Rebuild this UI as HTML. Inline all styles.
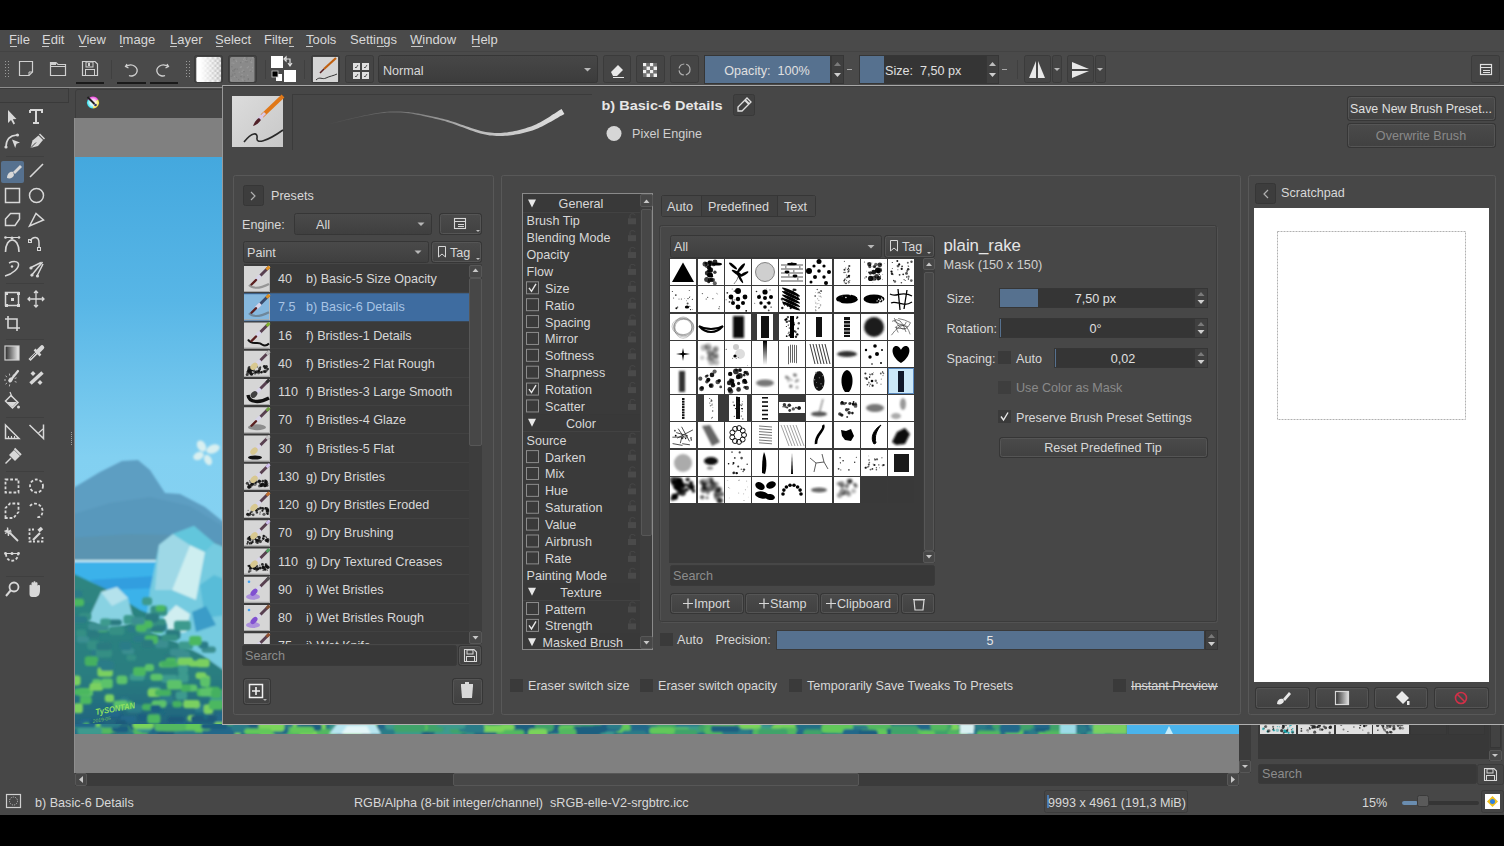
<!DOCTYPE html><html><head><meta charset="utf-8"><style>html,body{margin:0;padding:0;background:#000;overflow:hidden}svg{display:block}text{font-family:"Liberation Sans",sans-serif;white-space:pre}</style></head><body><svg width="1504" height="846" viewBox="0 0 1504 846" font-family="Liberation Sans, sans-serif"><rect x="0" y="0" width="1504" height="846" fill="#000"/><rect x="0" y="30" width="1504" height="785" fill="#474747"/><rect x="0" y="30" width="1504" height="21" fill="#4a4a4a"/><rect x="0" y="51" width="1504" height="1" fill="#434343"/><text x="9" y="44" font-size="13.01" fill="#d8d8d8">File</text><text x="42" y="44" font-size="13.01" fill="#d8d8d8">Edit</text><text x="78" y="44" font-size="13.01" fill="#d8d8d8">View</text><text x="119" y="44" font-size="13.01" fill="#d8d8d8">Image</text><text x="170" y="44" font-size="13.01" fill="#d8d8d8">Layer</text><text x="215" y="44" font-size="13.01" fill="#d8d8d8">Select</text><text x="264" y="44" font-size="13.01" fill="#d8d8d8">Filter</text><text x="306" y="44" font-size="13.01" fill="#d8d8d8">Tools</text><text x="350" y="44" font-size="13.01" fill="#d8d8d8">Settings</text><text x="410" y="44" font-size="13.01" fill="#d8d8d8">Window</text><text x="471" y="44" font-size="13.01" fill="#d8d8d8">Help</text><rect x="10" y="46" width="7" height="1" fill="#c8c8c8"/><rect x="42" y="46" width="7" height="1" fill="#c8c8c8"/><rect x="79" y="46" width="8" height="1" fill="#c8c8c8"/><rect x="120" y="46" width="3" height="1" fill="#c8c8c8"/><rect x="170" y="46" width="7" height="1" fill="#c8c8c8"/><rect x="216" y="46" width="7" height="1" fill="#c8c8c8"/><rect x="289" y="46" width="5" height="1" fill="#c8c8c8"/><rect x="306" y="46" width="7" height="1" fill="#c8c8c8"/><rect x="377" y="46" width="7" height="1" fill="#c8c8c8"/><rect x="411" y="46" width="12" height="1" fill="#c8c8c8"/><rect x="472" y="46" width="8" height="1" fill="#c8c8c8"/><rect x="0" y="52" width="1504" height="35" fill="#4a4a4a"/><rect x="0" y="87" width="222" height="1" fill="#8c8c8c"/><rect x="5" y="61" width="1" height="1" fill="#9a9a9a"/><rect x="8" y="61" width="1" height="1" fill="#9a9a9a"/><rect x="5" y="64" width="1" height="1" fill="#9a9a9a"/><rect x="8" y="64" width="1" height="1" fill="#9a9a9a"/><rect x="5" y="67" width="1" height="1" fill="#9a9a9a"/><rect x="8" y="67" width="1" height="1" fill="#9a9a9a"/><rect x="5" y="70" width="1" height="1" fill="#9a9a9a"/><rect x="8" y="70" width="1" height="1" fill="#9a9a9a"/><rect x="5" y="73" width="1" height="1" fill="#9a9a9a"/><rect x="8" y="73" width="1" height="1" fill="#9a9a9a"/><rect x="5" y="76" width="1" height="1" fill="#9a9a9a"/><rect x="8" y="76" width="1" height="1" fill="#9a9a9a"/><path d="M19.5 61.5 H32.5 V72 L29 75.5 H19.5 Z" fill="none" stroke="#d0d0d0" stroke-width="1.2"/><path d="M29 75.5 V72 H32.5" fill="none" stroke="#d0d0d0" stroke-width="1"/><path d="M50.5 62.5 H56 L58 64.5 H65.5 V75.5 H50.5 Z" fill="none" stroke="#d0d0d0" stroke-width="1.2"/><rect x="51" y="62" width="5" height="3" fill="#d0d0d0"/><rect x="51" y="66" width="15" height="1" fill="#d0d0d0"/><path d="M82.5 61.5 H95 L97.5 64 V75.5 H82.5 Z" fill="none" stroke="#d0d0d0" stroke-width="1.2"/><rect x="86" y="62" width="7" height="5" fill="none" stroke="#d0d0d0" stroke-width="1"/><rect x="85.5" y="69.5" width="9" height="6" fill="none" stroke="#d0d0d0" stroke-width="1"/><rect x="88" y="63" width="2" height="3" fill="#d0d0d0"/><rect x="76" y="82" width="28" height="2" fill="#1a1a1a"/><rect x="111" y="60" width="1" height="19" fill="#404040"/><path d="M127 64 L125.5 66.5 L128.5 68 M125.5 66.5 C133 62 139 68 136.5 73 C135 76 131 76.5 129 75.5" fill="none" stroke="#d0d0d0" stroke-width="1.3"/><path d="M167 64 L168.5 66.5 L165.5 68 M168.5 66.5 C161 62 155 68 157.5 73 C159 76 163 76.5 165 75.5" fill="none" stroke="#d0d0d0" stroke-width="1.3"/><rect x="117" y="82" width="29" height="2" fill="#1a1a1a"/><rect x="150" y="82" width="28" height="2" fill="#1a1a1a"/><rect x="186" y="61" width="1" height="1" fill="#9a9a9a"/><rect x="189" y="61" width="1" height="1" fill="#9a9a9a"/><rect x="186" y="64" width="1" height="1" fill="#9a9a9a"/><rect x="189" y="64" width="1" height="1" fill="#9a9a9a"/><rect x="186" y="67" width="1" height="1" fill="#9a9a9a"/><rect x="189" y="67" width="1" height="1" fill="#9a9a9a"/><rect x="186" y="70" width="1" height="1" fill="#9a9a9a"/><rect x="189" y="70" width="1" height="1" fill="#9a9a9a"/><rect x="186" y="73" width="1" height="1" fill="#9a9a9a"/><rect x="189" y="73" width="1" height="1" fill="#9a9a9a"/><rect x="186" y="76" width="1" height="1" fill="#9a9a9a"/><rect x="189" y="76" width="1" height="1" fill="#9a9a9a"/><rect x="194.5" y="55.5" width="28" height="27" fill="#454545" stroke="#3b3b3b" stroke-width="1" rx="2"/><defs><pattern id="chk" x="196.5" y="57" width="5" height="5" patternUnits="userSpaceOnUse"><rect width="5" height="5" fill="#e8e8e8"/><rect width="2.5" height="2.5" fill="#bdbdbd"/><rect x="2.5" y="2.5" width="2.5" height="2.5" fill="#bdbdbd"/></pattern><linearGradient id="gw" x1="0" x2="1"><stop offset="0" stop-color="#ffffff"/><stop offset="0.15" stop-color="#ffffff"/><stop offset="1" stop-color="#ffffff" stop-opacity="0"/></linearGradient></defs><rect x="196.5" y="57" width="24.5" height="25" fill="url(#chk)" rx="1.5"/><rect x="196.5" y="57" width="24.5" height="25" fill="url(#gw)" rx="1.5"/><rect x="228.5" y="55.5" width="28" height="27" fill="#454545" stroke="#3b3b3b" stroke-width="1" rx="2"/><rect x="230" y="57" width="24.5" height="25" fill="#8a8a8a" rx="1.5"/><rect x="240.6" y="66.0" width="1.2" height="1.2" fill="#9a9a9a"/><rect x="234.3" y="73.2" width="1.2" height="1.2" fill="#7a7a7a"/><rect x="241.6" y="78.6" width="1.2" height="1.2" fill="#9a9a9a"/><rect x="237.7" y="79.5" width="1.2" height="1.2" fill="#9a9a9a"/><rect x="246.7" y="61.1" width="1.2" height="1.2" fill="#7a7a7a"/><rect x="251.9" y="67.1" width="1.2" height="1.2" fill="#9a9a9a"/><rect x="235.5" y="59.7" width="1.2" height="1.2" fill="#9a9a9a"/><rect x="247.8" y="66.2" width="1.2" height="1.2" fill="#9a9a9a"/><rect x="251.1" y="61.9" width="1.2" height="1.2" fill="#9a9a9a"/><rect x="246.7" y="67.1" width="1.2" height="1.2" fill="#9a9a9a"/><rect x="247.8" y="78.9" width="1.2" height="1.2" fill="#7a7a7a"/><rect x="236.5" y="76.4" width="1.2" height="1.2" fill="#9a9a9a"/><rect x="246.3" y="57.1" width="1.2" height="1.2" fill="#7a7a7a"/><rect x="231.3" y="66.1" width="1.2" height="1.2" fill="#7a7a7a"/><rect x="233.2" y="62.7" width="1.2" height="1.2" fill="#9a9a9a"/><rect x="252.2" y="57.1" width="1.2" height="1.2" fill="#9a9a9a"/><rect x="250.6" y="61.9" width="1.2" height="1.2" fill="#9a9a9a"/><rect x="250.5" y="60.2" width="1.2" height="1.2" fill="#9a9a9a"/><rect x="241.5" y="70.8" width="1.2" height="1.2" fill="#9a9a9a"/><rect x="239.7" y="66.6" width="1.2" height="1.2" fill="#9a9a9a"/><rect x="246.1" y="60.5" width="1.2" height="1.2" fill="#9a9a9a"/><rect x="231.2" y="70.3" width="1.2" height="1.2" fill="#9a9a9a"/><rect x="247.1" y="74.7" width="1.2" height="1.2" fill="#9a9a9a"/><rect x="232.8" y="73.9" width="1.2" height="1.2" fill="#9a9a9a"/><rect x="233.7" y="69.1" width="1.2" height="1.2" fill="#7a7a7a"/><rect x="249.5" y="69.5" width="1.2" height="1.2" fill="#9a9a9a"/><rect x="249.9" y="59.6" width="1.2" height="1.2" fill="#7a7a7a"/><rect x="240.4" y="66.7" width="1.2" height="1.2" fill="#9a9a9a"/><rect x="238.7" y="71.6" width="1.2" height="1.2" fill="#9a9a9a"/><rect x="240.0" y="62.1" width="1.2" height="1.2" fill="#7a7a7a"/><rect x="236.2" y="76.6" width="1.2" height="1.2" fill="#7a7a7a"/><rect x="244.5" y="59.5" width="1.2" height="1.2" fill="#9a9a9a"/><rect x="230.6" y="75.7" width="1.2" height="1.2" fill="#7a7a7a"/><rect x="241.4" y="74.0" width="1.2" height="1.2" fill="#9a9a9a"/><rect x="243.0" y="58.6" width="1.2" height="1.2" fill="#9a9a9a"/><rect x="232.2" y="75.3" width="1.2" height="1.2" fill="#7a7a7a"/><rect x="252.0" y="70.5" width="1.2" height="1.2" fill="#9a9a9a"/><rect x="245.4" y="61.1" width="1.2" height="1.2" fill="#7a7a7a"/><rect x="230.7" y="79.5" width="1.2" height="1.2" fill="#9a9a9a"/><rect x="236.0" y="60.9" width="1.2" height="1.2" fill="#9a9a9a"/><rect x="244.0" y="57.3" width="1.2" height="1.2" fill="#9a9a9a"/><rect x="240.4" y="75.9" width="1.2" height="1.2" fill="#7a7a7a"/><rect x="244.1" y="80.2" width="1.2" height="1.2" fill="#7a7a7a"/><rect x="236.6" y="68.5" width="1.2" height="1.2" fill="#7a7a7a"/><rect x="233.2" y="59.1" width="1.2" height="1.2" fill="#7a7a7a"/><rect x="246.0" y="58.6" width="1.2" height="1.2" fill="#7a7a7a"/><rect x="233.3" y="70.5" width="1.2" height="1.2" fill="#7a7a7a"/><rect x="243.5" y="76.3" width="1.2" height="1.2" fill="#7a7a7a"/><rect x="247.7" y="78.1" width="1.2" height="1.2" fill="#7a7a7a"/><rect x="238.0" y="79.2" width="1.2" height="1.2" fill="#7a7a7a"/><rect x="242.2" y="61.2" width="1.2" height="1.2" fill="#9a9a9a"/><rect x="233.7" y="76.0" width="1.2" height="1.2" fill="#9a9a9a"/><rect x="234.7" y="68.4" width="1.2" height="1.2" fill="#7a7a7a"/><rect x="231.9" y="70.2" width="1.2" height="1.2" fill="#7a7a7a"/><rect x="242.3" y="79.6" width="1.2" height="1.2" fill="#9a9a9a"/><rect x="243.4" y="71.0" width="1.2" height="1.2" fill="#7a7a7a"/><rect x="242.5" y="69.6" width="1.2" height="1.2" fill="#9a9a9a"/><rect x="250.2" y="70.8" width="1.2" height="1.2" fill="#7a7a7a"/><rect x="231.5" y="62.4" width="1.2" height="1.2" fill="#9a9a9a"/><rect x="232.4" y="73.8" width="1.2" height="1.2" fill="#7a7a7a"/><rect x="265" y="60" width="1" height="19" fill="#404040"/><rect x="271" y="56" width="12" height="12" fill="#ffffff"/><path d="M286 59 L290 59 L290 65 M288 63 L290 66 L292 63 M286 57 L286 61 L284 59 Z" fill="none" stroke="#e0e0e0" stroke-width="1.2"/><rect x="284" y="70" width="12" height="12" fill="#ffffff"/><rect x="276" y="74" width="6" height="7" fill="#ffffff"/><rect x="272" y="71" width="6" height="6" fill="#000000" stroke="#cccccc" stroke-width="0.8"/><rect x="304" y="60" width="1" height="19" fill="#404040"/><rect x="311.5" y="55.5" width="28" height="27" fill="#454545" stroke="#3b3b3b" stroke-width="1" rx="2"/><rect x="313" y="57" width="25" height="25" fill="#d4d4d4"/><path d="M324 69 L336 58" fill="none" stroke="#c06010" stroke-width="2.2"/><path d="M320 73 L324 69" fill="none" stroke="#5a2020" stroke-width="1.6"/><path d="M316 80 C320 76 322 80 326 78 S333 76 337 74" fill="none" stroke="#333" stroke-width="1"/><rect x="345.5" y="55.5" width="28" height="27" fill="#454545" stroke="#3b3b3b" stroke-width="1" rx="2"/><rect x="353" y="63" width="7" height="7" fill="#e0e0e0"/><path d="M355 67 L356 68 L358 65" fill="none" stroke="#333" stroke-width="0.8"/><rect x="353" y="72" width="7" height="7" fill="#e0e0e0"/><path d="M355 76 L356 77 L358 74" fill="none" stroke="#333" stroke-width="0.8"/><rect x="362" y="63" width="7" height="7" fill="#e0e0e0"/><path d="M364 67 L365 68 L367 65" fill="none" stroke="#333" stroke-width="0.8"/><rect x="362" y="72" width="7" height="7" fill="#e0e0e0"/><path d="M364 76 L365 77 L367 74" fill="none" stroke="#333" stroke-width="0.8"/><defs><linearGradient id="cmb" x1="0" y1="0" x2="0" y2="1"><stop offset="0" stop-color="#474747"/><stop offset="1" stop-color="#3c3c3c"/></linearGradient></defs><rect x="378.5" y="55.5" width="219" height="27" fill="url(#cmb)" stroke="#363636" stroke-width="1" rx="2"/><text x="383" y="75" font-size="12.6" fill="#d8d8d8">Normal</text><path d="M584 68 H591 L587.5 71.5 Z" fill="#b8b8b8"/><rect x="603.5" y="55.5" width="27" height="27" fill="#454545" stroke="#3b3b3b" stroke-width="1" rx="2"/><path d="M611 72 L618 65 L623 70 L617 76 L613 76 Z" fill="#e8e8e8"/><rect x="613" y="77" width="11" height="1" fill="#e8e8e8"/><rect x="636.5" y="55.5" width="28" height="27" fill="#454545" stroke="#3b3b3b" stroke-width="1" rx="2"/><rect x="643.0" y="63.0" width="3.5" height="3.5" fill="#f0f0f0"/><rect x="643.0" y="66.5" width="3.5" height="3.5" fill="#707070"/><rect x="643.0" y="70.0" width="3.5" height="3.5" fill="#f0f0f0"/><rect x="643.0" y="73.5" width="3.5" height="3.5" fill="#707070"/><rect x="646.5" y="63.0" width="3.5" height="3.5" fill="#707070"/><rect x="646.5" y="66.5" width="3.5" height="3.5" fill="#f0f0f0"/><rect x="646.5" y="70.0" width="3.5" height="3.5" fill="#707070"/><rect x="646.5" y="73.5" width="3.5" height="3.5" fill="#f0f0f0"/><rect x="650.0" y="63.0" width="3.5" height="3.5" fill="#f0f0f0"/><rect x="650.0" y="66.5" width="3.5" height="3.5" fill="#707070"/><rect x="650.0" y="70.0" width="3.5" height="3.5" fill="#f0f0f0"/><rect x="650.0" y="73.5" width="3.5" height="3.5" fill="#707070"/><rect x="653.5" y="63.0" width="3.5" height="3.5" fill="#707070"/><rect x="653.5" y="66.5" width="3.5" height="3.5" fill="#f0f0f0"/><rect x="653.5" y="70.0" width="3.5" height="3.5" fill="#707070"/><rect x="653.5" y="73.5" width="3.5" height="3.5" fill="#f0f0f0"/><rect x="670.5" y="55.5" width="28" height="27" fill="#454545" stroke="#3b3b3b" stroke-width="1" rx="2"/><circle cx="684.5" cy="69.5" r="5.5" fill="none" stroke="#b0b0b0" stroke-width="1.2" stroke-dasharray="7 2"/><rect x="704.5" y="55.5" width="126" height="28" fill="#3a3a3a" stroke="#363636" stroke-width="1"/><rect x="705" y="56" width="125" height="27" fill="#56718f"/><text x="767" y="75" font-size="12.6" fill="#e0e0e0" text-anchor="middle">Opacity:  100%</text><rect x="831.5" y="55.5" width="12" height="28" fill="#3f3f3f" stroke="#363636" stroke-width="1"/><path d="M834 66 L837.5 62 L841 66 Z" fill="#7a7a7a"/><path d="M834 73 L837.5 77 L841 73 Z" fill="#cfcfcf"/><rect x="847" y="69" width="5" height="1" fill="#a8a8a8"/><rect x="859.5" y="55.5" width="127" height="28" fill="#353535" stroke="#363636" stroke-width="1"/><rect x="860" y="56" width="24" height="27" fill="#56718f"/><text x="885" y="75" font-size="12.6" fill="#e0e0e0">Size:  7,50 px</text><rect x="986.5" y="55.5" width="12" height="28" fill="#3f3f3f" stroke="#363636" stroke-width="1"/><path d="M989 66 L992.5 62 L996 66 Z" fill="#bdbdbd"/><path d="M989 73 L992.5 77 L996 73 Z" fill="#cfcfcf"/><rect x="1002" y="69" width="5" height="1" fill="#a8a8a8"/><rect x="1017" y="60" width="1" height="19" fill="#404040"/><rect x="1024.5" y="55.5" width="26" height="27" fill="#454545" stroke="#3b3b3b" stroke-width="1" rx="2"/><rect x="1052.5" y="55.5" width="9" height="27" fill="#454545" stroke="#3b3b3b" stroke-width="1" rx="2"/><path d="M1036 61 L1036 78 L1029 78 Z" fill="#e8e8e8"/><path d="M1038 61 L1038 78 L1045 78 Z" fill="#e8e8e8"/><path d="M1054 68 H1060 L1057 71 Z" fill="#b8b8b8"/><rect x="1067.5" y="55.5" width="26" height="27" fill="#454545" stroke="#3b3b3b" stroke-width="1" rx="2"/><rect x="1095.5" y="55.5" width="10" height="27" fill="#454545" stroke="#3b3b3b" stroke-width="1" rx="2"/><path d="M1072 62 L1089 69 L1072 69 Z" fill="#e8e8e8"/><path d="M1072 71 L1089 71 L1072 78 Z" fill="#e8e8e8"/><path d="M1097 68 H1103 L1100 71 Z" fill="#b8b8b8"/><rect x="1471.5" y="55.5" width="28" height="27" fill="#454545" stroke="#3b3b3b" stroke-width="1" rx="2"/><rect x="1480.5" y="64.5" width="11" height="10" fill="none" stroke="#e0e0e0" stroke-width="1.2"/><rect x="1481" y="67" width="11" height="1" fill="#e0e0e0"/><rect x="1483" y="70" width="7" height="1" fill="#e0e0e0"/><rect x="1483" y="72" width="7" height="1" fill="#e0e0e0"/><rect x="-0.5" y="88.5" width="69" height="14" fill="#474747" stroke="#3a3a3a" stroke-width="1"/><rect x="0" y="87" width="70" height="1" fill="#8c8c8c"/><rect x="1" y="161" width="23" height="22" fill="#56718f" rx="2"/><path d="M8 110 L8 123 L11 120 L13.5 124.5 L15 123.5 L12.8 119.3 L16.5 119 Z" fill="#d8d8d8"/><path d="M30 110 H42 V113 M36 110 V123 M33 123 H39 M30 110 V113" fill="none" stroke="#d8d8d8" stroke-width="2"/><path d="M6 147 C6 140 10 135.5 17 135" fill="none" stroke="#d8d8d8" stroke-width="1.6"/><circle cx="6" cy="147" r="1.6" fill="#d8d8d8"/><circle cx="17.5" cy="135" r="1.6" fill="#d8d8d8"/><path d="M12 139.5 L20 142.5 L16.5 143.8 L15.2 148 Z" fill="#d8d8d8"/><path d="M30.5 148 L32.5 140.5 L38.5 135.5 L43 140 L38 146 Z" fill="#d8d8d8"/><path d="M30.5 148 L36 142.5" fill="none" stroke="#474747" stroke-width="1"/><path d="M39.5 134 L44.5 139" fill="none" stroke="#d8d8d8" stroke-width="1.5"/><rect x="6" y="156" width="38" height="1" fill="#3f3f3f"/><path d="M7 178 C7 174 10 171 13 172 L14 175 C13 178 10 179 7 178 Z" fill="#d8d8d8"/><path d="M13 172 L20 165 L22 167 L15 174 Z" fill="#d8d8d8"/><path d="M30 177 L43 164" fill="none" stroke="#d8d8d8" stroke-width="1.6"/><rect x="5.5" y="188.5" width="14" height="14" fill="none" stroke="#d8d8d8" stroke-width="1.5"/><circle cx="36.5" cy="195.5" r="7" fill="none" stroke="#d8d8d8" stroke-width="1.5"/><path d="M5.5 219 L10.5 213.5 H19.5 V219 L15 225.5 H5.5 Z" fill="none" stroke="#d8d8d8" stroke-width="1.5"/><path d="M29.5 226 L36 213.5 L43.5 220 Z" fill="none" stroke="#d8d8d8" stroke-width="1.5"/><path d="M5.5 252 C5.5 236 19 236 19 252" fill="none" stroke="#d8d8d8" stroke-width="1.6"/><rect x="5" y="237" width="15" height="1" fill="#d8d8d8"/><circle cx="5.5" cy="237.5" r="1.3" fill="#d8d8d8"/><circle cx="19" cy="237.5" r="1.3" fill="#d8d8d8"/><circle cx="12" cy="238" r="1.5" fill="#d8d8d8"/><path d="M30 241 C33 236 39 236 39 243 V248" fill="none" stroke="#d8d8d8" stroke-width="1.5"/><rect x="28.5" y="239.5" width="3" height="3" fill="none" stroke="#d8d8d8" stroke-width="1"/><rect x="37.5" y="247.5" width="3" height="3" fill="none" stroke="#d8d8d8" stroke-width="1"/><path d="M5 276 C13 274 19 268 18.5 264 C18 261 13 261 9 263" fill="none" stroke="#d8d8d8" stroke-width="1.5"/><circle cx="12" cy="266.5" r="1.2" fill="#d8d8d8"/><path d="M31 276 L42.5 262 M30 268 L41 262.5 M37 276 L43 264" fill="none" stroke="#d8d8d8" stroke-width="1.5"/><circle cx="31" cy="268" r="1.6" fill="#d8d8d8"/><circle cx="32" cy="275" r="1.6" fill="#d8d8d8"/><circle cx="37.5" cy="276" r="1.6" fill="#d8d8d8"/><rect x="6" y="283" width="38" height="1" fill="#3f3f3f"/><rect x="5.5" y="292.5" width="13" height="13" fill="none" stroke="#d8d8d8" stroke-width="1.5"/><rect x="5" y="292" width="3" height="3" fill="#d8d8d8"/><rect x="17" y="292" width="3" height="3" fill="#d8d8d8"/><rect x="5" y="304" width="3" height="3" fill="#d8d8d8"/><rect x="17" y="304" width="3" height="3" fill="#d8d8d8"/><rect x="11" y="298" width="3" height="3" fill="#d8d8d8"/><path d="M36 291 V307 M28 299 H44 M34 293 L36 291 L38 293 M34 305 L36 307 L38 305 M30 297 L28 299 L30 301 M42 297 L44 299 L42 301" fill="none" stroke="#d8d8d8" stroke-width="1.3"/><path d="M8 316 V328 H20 M5 319 H17 V331" fill="none" stroke="#d8d8d8" stroke-width="1.6"/><rect x="6" y="339" width="38" height="1" fill="#3f3f3f"/><defs><linearGradient id="tg" x1="0" x2="1"><stop offset="0" stop-color="#2a2a2a"/><stop offset="1" stop-color="#f0f0f0"/></linearGradient></defs><rect x="5" y="346" width="14" height="14" fill="url(#tg)" stroke="#d0d0d0" stroke-width="1.2"/><path d="M29.5 360 L37 352.5" fill="none" stroke="#d8d8d8" stroke-width="3"/><path d="M34.5 349.5 L40.5 355.5" fill="none" stroke="#d8d8d8" stroke-width="2.5"/><path d="M38 351.5 L42 347.5" fill="none" stroke="#d8d8d8" stroke-width="4.5" stroke-linecap="round"/><path d="M30.5 358.5 L36 353" fill="none" stroke="#474747" stroke-width="0.8"/><path d="M10 381 L18 371" fill="none" stroke="#d8d8d8" stroke-width="2.2" stroke-linecap="round"/><ellipse cx="10.5" cy="380" rx="2.6" ry="2" fill="#d8d8d8" transform="rotate(-50 10.5 380)"/><path d="M9.7 384.4 L9.4 386.4" fill="none" stroke="#d8d8d8" stroke-width="0.8"/><path d="M7.1 382.9 L5.5 384.2" fill="none" stroke="#d8d8d8" stroke-width="0.8"/><path d="M6.0 380.0 L4.0 380.0" fill="none" stroke="#d8d8d8" stroke-width="0.8"/><path d="M7.1 377.1 L5.5 375.8" fill="none" stroke="#d8d8d8" stroke-width="0.8"/><path d="M9.7 375.6 L9.4 373.6" fill="none" stroke="#d8d8d8" stroke-width="0.8"/><path d="M12.8 376.1 L13.8 374.4" fill="none" stroke="#d8d8d8" stroke-width="0.8"/><path d="M14.7 378.5 L16.6 377.8" fill="none" stroke="#d8d8d8" stroke-width="0.8"/><path d="M14.7 381.5 L16.6 382.2" fill="none" stroke="#d8d8d8" stroke-width="0.8"/><path d="M30.5 383.5 L42.5 372.5" fill="none" stroke="#d8d8d8" stroke-width="3.5"/><path d="M33 371 L35.5 373.5 L33 376 L30.5 373.5 Z" fill="#d8d8d8"/><path d="M40 380 L42.5 382.5 L40 385 L37.5 382.5 Z" fill="#d8d8d8"/><path d="M5.5 401 L11 395.5 L18 402.5 L12.5 408 Z" fill="none" stroke="#d8d8d8" stroke-width="1.5"/><path d="M6.5 402 H17 L12.5 407 Z" fill="#d8d8d8"/><path d="M10 392 L12 397" fill="none" stroke="#d8d8d8" stroke-width="1.2"/><circle cx="18.5" cy="407" r="1.5" fill="#d8d8d8"/><rect x="6" y="417" width="38" height="1" fill="#3f3f3f"/><path d="M5.5 425 V438.5 H19 Z" fill="none" stroke="#d8d8d8" stroke-width="1.5"/><rect x="8" y="436" width="1" height="2" fill="#d8d8d8"/><rect x="11" y="436" width="1" height="2" fill="#d8d8d8"/><rect x="14" y="436" width="1" height="2" fill="#d8d8d8"/><path d="M29.5 425 L43.5 438.5 V424.5" fill="none" stroke="#d8d8d8" stroke-width="1.5"/><path d="M38.5 433 L43 429" fill="none" stroke="#d8d8d8" stroke-width="1.2"/><path d="M5.5 463.5 L11 458" fill="none" stroke="#d8d8d8" stroke-width="1.4"/><path d="M9 455 L14 450 L20 456 L15 461 Z" fill="#d8d8d8"/><path d="M14.5 448.5 L21 455" fill="none" stroke="#d8d8d8" stroke-width="2"/><rect x="6" y="471" width="38" height="1" fill="#3f3f3f"/><rect x="5.5" y="479.5" width="13" height="13" fill="none" stroke="#d8d8d8" stroke-width="1.8" stroke-dasharray="2.8 1.9"/><circle cx="36.5" cy="486" r="6.5" fill="none" stroke="#d8d8d8" stroke-width="1.8" stroke-dasharray="2.8 1.9"/><path d="M5.5 518 V508 L10 503.5 H18.5 V512 L13.5 518 Z" fill="none" stroke="#d8d8d8" stroke-width="1.8" stroke-dasharray="2.8 1.9"/><path d="M30 506 C33 502 41 503 42.5 510 C43 515 40 518 37 517" fill="none" stroke="#d8d8d8" stroke-width="1.8" stroke-dasharray="2.8 1.9"/><path d="M6 530 L10 534 M5 533.5 L11 530 M7.5 527.5 L8.5 536 M4.5 531 L11.5 532" fill="none" stroke="#d8d8d8" stroke-width="1.4"/><path d="M10 533 L18 541" fill="none" stroke="#d8d8d8" stroke-width="1.8"/><path d="M29.5 535 V529.5 H34 M29.5 537 V541.5 H35 M37 541.5 H42.5 V537" fill="none" stroke="#d8d8d8" stroke-width="1.8" stroke-dasharray="2.5 1.5"/><path d="M33 540 L40 533" fill="none" stroke="#d8d8d8" stroke-width="2.2"/><path d="M38.5 531 L42 528" fill="none" stroke="#d8d8d8" stroke-width="3.5"/><path d="M6 554 C6 563 18 563 18 554" fill="none" stroke="#d8d8d8" stroke-width="1.8" stroke-dasharray="2.8 1.9"/><rect x="5" y="553" width="14" height="1" fill="#d8d8d8"/><circle cx="5.5" cy="553.5" r="1.4" fill="#d8d8d8"/><circle cx="18.5" cy="553.5" r="1.4" fill="#d8d8d8"/><circle cx="12" cy="553.5" r="1.5" fill="#d8d8d8"/><rect x="6" y="576" width="38" height="1" fill="#3f3f3f"/><circle cx="14" cy="587" r="4.5" fill="none" stroke="#d8d8d8" stroke-width="1.8"/><path d="M11 590 L6 596" fill="none" stroke="#d8d8d8" stroke-width="2"/><path d="M29.5 594 V585.5 C29.5 584.5 31.5 584.5 31.5 585.5 V583 C31.5 582 33.5 582 33.5 583 V582 C33.5 581 35.5 581 35.5 582 V583 C35.5 582 37.5 582 37.5 583 V586 C37.5 585 40 584.5 40 586 V590 C40 595 38 597 35 597 H32 C30.5 597 29.5 596 29.5 594 Z" fill="#d8d8d8"/><rect x="71" y="432" width="1" height="1" fill="#9a9a9a"/><rect x="71" y="434" width="1" height="1" fill="#9a9a9a"/><rect x="71" y="436" width="1" height="1" fill="#9a9a9a"/><rect x="71" y="438" width="1" height="1" fill="#9a9a9a"/><rect x="71" y="440" width="1" height="1" fill="#9a9a9a"/><rect x="71" y="442" width="1" height="1" fill="#9a9a9a"/><rect x="71" y="444" width="1" height="1" fill="#9a9a9a"/><rect x="75" y="89" width="147" height="29" fill="#474747"/><path d="M93 102.5 L87.80 99.50 A6 6 0 0 1 98.20 99.50 Z" fill="#f040e0"/><path d="M93 102.5 L98.20 99.50 A6 6 0 0 1 93.00 108.50 Z" fill="#f0e040"/><path d="M93 102.5 L93.00 108.50 A6 6 0 0 1 87.80 99.50 Z" fill="#30e0f0"/><defs><radialGradient id="kr"><stop offset="0" stop-color="#fff"/><stop offset="0.55" stop-color="#fff" stop-opacity="0.7"/><stop offset="1" stop-color="#fff" stop-opacity="0"/></radialGradient></defs><circle cx="93" cy="102.5" r="6" fill="url(#kr)"/><path d="M87.5 97 L94.5 104" fill="none" stroke="#202020" stroke-width="2"/><circle cx="95.5" cy="105" r="1.3" fill="#303070"/><path d="M75.5 118 V92 Q75.5 89.5 78 89.5 H222" fill="none" stroke="#3c3c3c" stroke-width="1"/><rect x="75" y="118" width="147" height="39" fill="#808080"/><defs><linearGradient id="sky" x1="0" y1="0" x2="0" y2="1"><stop offset="0" stop-color="#44a8de"/><stop offset="0.25" stop-color="#58b6e6"/><stop offset="0.52" stop-color="#82d0f1"/><stop offset="1" stop-color="#8cd6f4"/></linearGradient><filter id="soft" x="-5%" y="-5%" width="110%" height="110%"><feGaussianBlur stdDeviation="0.8"/></filter><filter id="soft2" x="-5%" y="-5%" width="110%" height="110%"><feGaussianBlur stdDeviation="1.3"/></filter><linearGradient id="mtn" x1="0" y1="0" x2="1" y2="0"><stop offset="0" stop-color="#6aaccc"/><stop offset="1" stop-color="#5a98bb"/></linearGradient></defs><svg x="75" y="157" width="147" height="577" viewBox="75 157 147 577" overflow="hidden"><rect x="75" y="157" width="147" height="577" fill="url(#sky)"/><g filter="url(#soft)"><ellipse cx="201.5" cy="446" rx="6" ry="4.2" fill="#d8eff0" transform="rotate(60 201.5 446)"/><ellipse cx="213" cy="449" rx="7" ry="4.2" fill="#d8eff0" transform="rotate(-20 213 449)"/><ellipse cx="198.5" cy="456" rx="5.5" ry="3.8" fill="#d8eff0" transform="rotate(-25 198.5 456)"/><ellipse cx="208" cy="460" rx="5.5" ry="3.6" fill="#d8eff0" transform="rotate(65 208 460)"/><path d="M70 490 L100 472 L122 461 L138 460 L150 470 L165 493 L180 494 L205 507 L226 524 L226 565 L70 565 Z" fill="#5d9ec2"/><path d="M70 515 L110 503 L150 497 L190 506 L226 528 L226 565 L70 565 Z" fill="#5694b8" opacity="0.6"/><path d="M70 538 L130 534 L180 535 L226 545 L226 565 L70 565 Z" fill="#5a94ae" opacity="0.8"/><path d="M70 560 L158 560 L158 625 L70 625 Z" fill="#3ab2ea"/><path d="M90 580 L156 576 L156 588 L105 590 Z" fill="#3098dc" opacity="0.8"/><rect x="70" y="560" width="86" height="2" fill="#c8ecf4"/><defs><linearGradient id="grn" x1="0" y1="0" x2="0" y2="1"><stop offset="0" stop-color="#2e8680"/><stop offset="0.6" stop-color="#2a7e80"/><stop offset="1" stop-color="#1d5c7e"/></linearGradient></defs><path d="M70 572 L106 589 L140 610 L176 625 L202 640 L226 650 L226 740 L70 740 Z" fill="url(#grn)"/><path d="M150 590 L159 545 L173 534 L194 526 L214 543 L226 548 L226 672 L202 655 L176 642 L145 630 Z" fill="#74cbe0"/><path d="M159 545 L173 534 L190 545 L172 590 L155 590 Z" fill="#9ed8e6"/><path d="M172 590 L190 545 L205 552 L196 600 Z" fill="#cdeef0"/><path d="M173 534 L194 526 L214 543 L205 552 L190 545 Z" fill="#62c6dc"/><path d="M163 618 L176 605 L190 614 L186 632 L170 634 Z" fill="#d0eef0"/><path d="M200 585 L214 575 L226 580 L226 615 L205 618 Z" fill="#58bcd8"/><path d="M192 612 L206 606 L216 625 L196 632 Z" fill="#3a9cc8"/><path d="M88 620 L101 592 L117 587 L128 598 L134 622 L110 630 Z" fill="#88d2e2"/><path d="M101 592 L117 587 L128 598 L112 606 Z" fill="#b4e2ec"/></g><g filter="url(#soft2)"><rect x="151.8" y="624.7" width="12.0" height="8.4" rx="3" fill="#4cb860"/><rect x="161.3" y="674.8" width="16.3" height="7.9" rx="3" fill="#3c9a8e"/><rect x="196.8" y="658.7" width="12.8" height="8.6" rx="3" fill="#7ad060"/><rect x="91.3" y="623.9" width="16.4" height="7.6" rx="3" fill="#2c7c88"/><rect x="77.9" y="688.0" width="15.1" height="8.4" rx="3" fill="#5cc26a"/><rect x="194.8" y="703.9" width="11.2" height="8.4" rx="3" fill="#2c7c88"/><rect x="209.8" y="694.3" width="12.2" height="9.2" rx="3" fill="#2c7c88"/><rect x="88.7" y="730.8" width="11.9" height="6.1" rx="3" fill="#7ad060"/><rect x="164.5" y="653.7" width="11.4" height="8.0" rx="3" fill="#2a7a80"/><rect x="150.3" y="673.8" width="12.3" height="6.9" rx="3" fill="#5cc26a"/><rect x="211.1" y="689.6" width="15.9" height="10.0" rx="3" fill="#45b060"/><rect x="175.6" y="691.6" width="11.6" height="8.2" rx="3" fill="#3c9a8e"/><rect x="177.9" y="673.1" width="10.7" height="9.3" rx="3" fill="#3c9a8e"/><rect x="87.2" y="629.0" width="12.9" height="8.6" rx="3" fill="#2a7a80"/><rect x="91.2" y="649.9" width="11.4" height="9.1" rx="3" fill="#2c7c88"/><rect x="145.8" y="733.2" width="17.0" height="7.2" rx="3" fill="#1f5f80"/><rect x="150.5" y="605.8" width="16.6" height="9.9" rx="3" fill="#348f84"/><rect x="92.1" y="679.1" width="9.3" height="9.5" rx="3" fill="#5cc26a"/><rect x="89.3" y="642.6" width="15.9" height="7.5" rx="3" fill="#3a8e90"/><rect x="201.5" y="646.4" width="14.4" height="6.4" rx="3" fill="#3a8e90"/><rect x="165.7" y="629.6" width="14.7" height="9.7" rx="3" fill="#2a7a80"/><rect x="148.3" y="732.8" width="13.4" height="6.0" rx="3" fill="#7ad060"/><rect x="116.5" y="734.2" width="12.0" height="8.4" rx="3" fill="#1d5a7a"/><rect x="172.6" y="658.1" width="11.8" height="8.8" rx="3" fill="#45b060"/><rect x="158.8" y="661.5" width="16.6" height="6.1" rx="3" fill="#5cc26a"/><rect x="138.3" y="626.7" width="13.7" height="7.3" rx="3" fill="#348f84"/><rect x="108.7" y="713.2" width="15.3" height="6.4" rx="3" fill="#1f5f80"/><rect x="173.3" y="731.8" width="10.1" height="8.0" rx="3" fill="#1f6a80"/><rect x="104.8" y="707.4" width="10.5" height="7.7" rx="3" fill="#1f6a80"/><rect x="171.9" y="728.6" width="10.8" height="9.2" rx="3" fill="#1d5a7a"/><rect x="155.5" y="621.8" width="11.2" height="9.1" rx="3" fill="#2c7c88"/><rect x="97.4" y="667.3" width="15.5" height="9.4" rx="3" fill="#7ad060"/><rect x="120.4" y="716.1" width="15.6" height="6.3" rx="3" fill="#23688a"/><rect x="88.0" y="640.4" width="11.3" height="9.2" rx="3" fill="#348f84"/><rect x="165.7" y="657.8" width="11.3" height="8.3" rx="3" fill="#4cb860"/><rect x="92.0" y="724.4" width="9.0" height="9.8" rx="3" fill="#23688a"/><rect x="134.9" y="734.1" width="16.6" height="9.7" rx="3" fill="#1d5a7a"/><rect x="183.2" y="700.0" width="16.7" height="8.2" rx="3" fill="#7ad060"/><rect x="200.1" y="715.8" width="16.8" height="6.5" rx="3" fill="#1d5a7a"/><rect x="210.3" y="691.3" width="16.2" height="9.6" rx="3" fill="#3c9a8e"/><rect x="142.1" y="597.2" width="10.0" height="8.0" rx="3" fill="#3c9a8e"/><rect x="148.8" y="686.8" width="12.3" height="9.8" rx="3" fill="#3c9a8e"/><rect x="151.3" y="731.9" width="15.5" height="6.2" rx="3" fill="#1d5a7a"/><rect x="150.3" y="618.8" width="15.5" height="6.7" rx="3" fill="#348f84"/><rect x="192.1" y="724.6" width="15.6" height="6.0" rx="3" fill="#1f6a80"/><rect x="129.6" y="673.4" width="15.1" height="7.0" rx="3" fill="#3c9a8e"/><rect x="133.1" y="667.0" width="12.8" height="9.1" rx="3" fill="#4cb860"/><rect x="187.4" y="715.1" width="9.4" height="6.2" rx="3" fill="#7ad060"/><rect x="199.6" y="732.3" width="9.7" height="8.0" rx="3" fill="#4cb860"/><rect x="79.1" y="612.9" width="12.1" height="7.6" rx="3" fill="#348f84"/><rect x="97.4" y="642.7" width="11.6" height="6.5" rx="3" fill="#3a8e90"/><rect x="155.3" y="706.1" width="9.3" height="7.8" rx="3" fill="#1f6a80"/><rect x="126.6" y="704.3" width="15.4" height="8.5" rx="3" fill="#2c7c88"/><rect x="116.5" y="701.0" width="16.6" height="7.7" rx="3" fill="#4cb860"/><rect x="150.5" y="625.8" width="14.6" height="6.3" rx="3" fill="#2a7a80"/><rect x="88.1" y="622.8" width="9.2" height="7.3" rx="3" fill="#3a8e90"/><rect x="108.4" y="705.5" width="12.7" height="6.5" rx="3" fill="#1f6a80"/><rect x="204.7" y="686.7" width="15.3" height="8.7" rx="3" fill="#45b060"/><rect x="149.9" y="636.5" width="15.5" height="8.9" rx="3" fill="#2a7a80"/><rect x="71.6" y="616.2" width="15.7" height="6.5" rx="3" fill="#2c7c88"/><rect x="196.8" y="688.3" width="16.6" height="8.3" rx="3" fill="#4cb860"/><rect x="178.1" y="664.7" width="9.9" height="9.0" rx="3" fill="#3c9a8e"/><rect x="195.5" y="672.3" width="10.9" height="6.7" rx="3" fill="#7ad060"/><rect x="175.8" y="656.3" width="16.5" height="7.0" rx="3" fill="#3c9a8e"/><rect x="121.9" y="647.9" width="12.3" height="6.3" rx="3" fill="#3a8e90"/><rect x="216.9" y="713.2" width="12.3" height="8.3" rx="3" fill="#23688a"/><rect x="147.6" y="688.4" width="12.9" height="8.6" rx="3" fill="#7ad060"/><rect x="144.7" y="613.7" width="12.9" height="8.8" rx="3" fill="#2a7a80"/><rect x="200.1" y="675.6" width="10.1" height="9.0" rx="3" fill="#7ad060"/><rect x="116.5" y="675.5" width="10.9" height="8.8" rx="3" fill="#5cc26a"/><rect x="199.7" y="688.0" width="13.8" height="8.3" rx="3" fill="#5cc26a"/><rect x="115.3" y="719.9" width="11.1" height="9.2" rx="3" fill="#1d5a7a"/><rect x="123.5" y="615.1" width="11.6" height="9.1" rx="3" fill="#3c9a8e"/><rect x="175.4" y="651.1" width="14.6" height="6.8" rx="3" fill="#3a8e90"/><rect x="194.5" y="711.9" width="13.5" height="7.9" rx="3" fill="#1f6a80"/><rect x="203.8" y="704.3" width="9.4" height="9.6" rx="3" fill="#7ad060"/><rect x="187.7" y="684.6" width="9.6" height="6.9" rx="3" fill="#5cc26a"/><rect x="97.2" y="625.3" width="11.1" height="6.7" rx="3" fill="#4cb860"/><rect x="73.7" y="688.6" width="16.5" height="6.7" rx="3" fill="#4cb860"/><rect x="133.2" y="635.8" width="14.8" height="6.3" rx="3" fill="#2c7c88"/><rect x="119.8" y="697.2" width="9.2" height="7.3" rx="3" fill="#2c7c88"/><rect x="100.4" y="660.9" width="13.7" height="9.8" rx="3" fill="#2c7c88"/><rect x="79.7" y="719.0" width="12.5" height="7.8" rx="3" fill="#23688a"/><rect x="82.9" y="722.7" width="16.5" height="7.5" rx="3" fill="#4cb860"/><rect x="113.5" y="700.6" width="14.4" height="8.6" rx="3" fill="#5cc26a"/><rect x="155.2" y="639.4" width="13.2" height="8.7" rx="3" fill="#3a8e90"/><rect x="178.6" y="641.4" width="14.4" height="8.3" rx="3" fill="#3c9a8e"/><rect x="180.5" y="684.3" width="10.2" height="7.5" rx="3" fill="#45b060"/><rect x="84.7" y="656.3" width="13.5" height="9.7" rx="3" fill="#45b060"/><rect x="160.0" y="695.2" width="13.4" height="8.6" rx="3" fill="#2c7c88"/><rect x="188.5" y="660.4" width="14.6" height="6.4" rx="3" fill="#7ad060"/><rect x="151.6" y="700.2" width="14.9" height="7.4" rx="3" fill="#5cc26a"/><rect x="76.2" y="629.5" width="10.1" height="7.9" rx="3" fill="#348f84"/><rect x="119.3" y="641.7" width="12.2" height="8.2" rx="3" fill="#2c7c88"/><rect x="198.4" y="641.5" width="9.9" height="7.1" rx="3" fill="#2c7c88"/><rect x="154.9" y="689.5" width="16.3" height="6.4" rx="3" fill="#45b060"/><rect x="132.2" y="617.6" width="14.9" height="9.3" rx="3" fill="#4cb860"/><rect x="190.9" y="715.5" width="13.4" height="6.7" rx="3" fill="#1d5a7a"/><rect x="106.5" y="619.5" width="15.3" height="6.1" rx="3" fill="#2a7a80"/><rect x="214.2" y="720.1" width="12.1" height="8.2" rx="3" fill="#23688a"/><rect x="144.7" y="635.2" width="13.2" height="8.8" rx="3" fill="#4cb860"/><rect x="160.6" y="660.7" width="14.8" height="6.0" rx="3" fill="#45b060"/><rect x="94.7" y="624.1" width="14.0" height="6.8" rx="3" fill="#3a8e90"/><rect x="213.8" y="725.2" width="9.9" height="7.1" rx="3" fill="#1f6a80"/><rect x="88.9" y="720.2" width="15.3" height="8.5" rx="3" fill="#1f5f80"/><rect x="144.8" y="663.9" width="9.2" height="7.4" rx="3" fill="#5cc26a"/><rect x="175.0" y="717.1" width="10.1" height="9.4" rx="3" fill="#23688a"/><rect x="73.2" y="703.2" width="9.6" height="10.0" rx="3" fill="#7ad060"/><rect x="200.7" y="726.0" width="12.5" height="9.0" rx="3" fill="#7ad060"/><rect x="189.2" y="636.1" width="12.3" height="9.4" rx="3" fill="#4cb860"/><rect x="144.6" y="613.5" width="14.6" height="8.1" rx="3" fill="#2a7a80"/><rect x="143.3" y="620.4" width="9.2" height="7.8" rx="3" fill="#4cb860"/><rect x="95.8" y="648.6" width="16.2" height="8.9" rx="3" fill="#348f84"/><rect x="137.0" y="713.9" width="11.9" height="7.6" rx="3" fill="#1f5f80"/><rect x="107.8" y="707.4" width="12.0" height="9.4" rx="3" fill="#23688a"/><rect x="100.2" y="618.5" width="10.4" height="7.6" rx="3" fill="#3c9a8e"/><rect x="89.4" y="683.0" width="13.9" height="7.8" rx="3" fill="#7ad060"/><rect x="71.5" y="598.7" width="12.6" height="7.6" rx="3" fill="#4cb860"/><rect x="104.8" y="694.2" width="9.3" height="8.0" rx="3" fill="#7ad060"/><rect x="127.9" y="625.3" width="10.5" height="7.3" rx="3" fill="#2c7c88"/><rect x="87.1" y="640.6" width="9.4" height="8.9" rx="3" fill="#348f84"/><rect x="213.1" y="733.3" width="15.3" height="9.8" rx="3" fill="#7ad060"/><rect x="108.9" y="626.5" width="15.5" height="8.5" rx="3" fill="#348f84"/><rect x="76.7" y="636.3" width="12.5" height="6.4" rx="3" fill="#3a8e90"/><rect x="72.7" y="590.5" width="9.7" height="6.7" rx="3" fill="#2c7c88"/><rect x="97.1" y="660.3" width="13.1" height="7.3" rx="3" fill="#2c7c88"/><rect x="141.7" y="639.6" width="11.8" height="8.6" rx="3" fill="#2a7a80"/><rect x="161.5" y="634.5" width="16.6" height="6.4" rx="3" fill="#348f84"/><rect x="131.6" y="616.9" width="13.1" height="8.2" rx="3" fill="#3a8e90"/><rect x="211.0" y="689.3" width="10.4" height="9.0" rx="3" fill="#45b060"/><rect x="96.3" y="642.4" width="15.4" height="7.8" rx="3" fill="#2a7a80"/><rect x="142.0" y="703.8" width="11.2" height="6.7" rx="3" fill="#45b060"/><rect x="208.9" y="699.9" width="14.6" height="9.8" rx="3" fill="#4cb860"/><rect x="172.3" y="700.7" width="9.8" height="6.9" rx="3" fill="#45b060"/><rect x="167.6" y="716.8" width="17.0" height="6.0" rx="3" fill="#1d5a7a"/><rect x="155.6" y="605.3" width="9.9" height="6.3" rx="3" fill="#4cb860"/><rect x="174.0" y="620.7" width="16.8" height="9.7" rx="3" fill="#3c9a8e"/><rect x="69.8" y="675.5" width="10.8" height="9.9" rx="3" fill="#7ad060"/><rect x="147.4" y="714.2" width="13.0" height="9.6" rx="3" fill="#4cb860"/><rect x="150.4" y="705.1" width="10.5" height="6.7" rx="3" fill="#1f5f80"/><rect x="200.3" y="677.3" width="9.8" height="9.8" rx="3" fill="#5cc26a"/><rect x="166.8" y="679.9" width="15.1" height="9.5" rx="3" fill="#5cc26a"/><rect x="169.8" y="648.8" width="15.2" height="7.2" rx="3" fill="#3a8e90"/><rect x="126.4" y="654.8" width="9.9" height="6.0" rx="3" fill="#348f84"/><rect x="79.9" y="696.3" width="11.8" height="7.9" rx="3" fill="#4cb860"/><rect x="173.7" y="724.9" width="11.9" height="9.1" rx="3" fill="#1f5f80"/><rect x="101.0" y="678.5" width="11.8" height="10.0" rx="3" fill="#5cc26a"/><rect x="135.6" y="624.5" width="11.0" height="7.3" rx="3" fill="#4cb860"/><rect x="179.9" y="725.9" width="16.0" height="9.9" rx="3" fill="#23688a"/><rect x="177.5" y="657.7" width="15.8" height="7.5" rx="3" fill="#7ad060"/><rect x="214.2" y="721.9" width="12.9" height="9.1" rx="3" fill="#7ad060"/></g><text x="96" y="715" font-size="8.5" fill="#90e060" font-style="italic" font-weight="bold" transform="rotate(-10 96 715)" textLength="40" lengthAdjust="spacingAndGlyphs">TySONTAN</text><text x="93" y="723" font-size="5" fill="#70c060" font-style="italic" transform="rotate(-10 93 723)">2019-05</text></svg><svg x="75" y="724" width="1164" height="10" overflow="hidden"><rect x="0" y="0" width="1164" height="10" fill="#226f86"/><g filter="url(#soft)"><rect x="333.9" y="-2.3" width="15.3" height="8.1" rx="4" fill="#3fa36a"/><rect x="378.4" y="-3.4" width="14.7" height="7.7" rx="4" fill="#23688a"/><rect x="64.2" y="-3.0" width="15.1" height="8.3" rx="4" fill="#1f5f80"/><rect x="996.2" y="2.9" width="24.4" height="7.6" rx="4" fill="#3fa36a"/><rect x="1026.8" y="-3.5" width="19.2" height="6.6" rx="4" fill="#2c7c88"/><rect x="115.1" y="-0.6" width="15.9" height="8.3" rx="4" fill="#2c7c88"/><rect x="189.5" y="-2.9" width="24.2" height="8.5" rx="4" fill="#62c85a"/><rect x="517.2" y="1.8" width="22.4" height="9.7" rx="4" fill="#3c9a8e"/><rect x="374.0" y="-1.3" width="26.6" height="7.0" rx="4" fill="#2c7c88"/><rect x="600.0" y="1.8" width="27.1" height="7.2" rx="4" fill="#3c9a8e"/><rect x="1030.9" y="-2.7" width="17.0" height="7.4" rx="4" fill="#1f5f80"/><rect x="981.1" y="0.6" width="27.8" height="8.3" rx="4" fill="#62c85a"/><rect x="919.8" y="-0.5" width="24.7" height="8.3" rx="4" fill="#3c9a8e"/><rect x="474.5" y="5.2" width="22.5" height="8.7" rx="4" fill="#7ad45a"/><rect x="54.4" y="3.7" width="19.1" height="7.5" rx="4" fill="#52b860"/><rect x="700.1" y="-3.8" width="20.4" height="8.4" rx="4" fill="#52b860"/><rect x="514.3" y="-1.6" width="16.3" height="7.0" rx="4" fill="#7ad45a"/><rect x="405.2" y="5.6" width="17.0" height="7.6" rx="4" fill="#62c85a"/><rect x="285.1" y="-2.5" width="29.6" height="7.1" rx="4" fill="#1f5f80"/><rect x="431.0" y="-0.1" width="31.2" height="6.6" rx="4" fill="#1f5f80"/><rect x="177.1" y="-1.4" width="14.2" height="9.3" rx="4" fill="#23688a"/><rect x="183.6" y="-0.9" width="21.5" height="7.5" rx="4" fill="#2c7c88"/><rect x="591.5" y="6.5" width="22.2" height="9.5" rx="4" fill="#3fa36a"/><rect x="1000.9" y="3.5" width="21.2" height="7.6" rx="4" fill="#1f5f80"/><rect x="501.4" y="0.4" width="15.2" height="6.8" rx="4" fill="#23688a"/><rect x="162.4" y="-0.3" width="15.8" height="8.3" rx="4" fill="#3fa36a"/><rect x="559.9" y="6.4" width="15.3" height="6.8" rx="4" fill="#3fa36a"/><rect x="389.6" y="3.0" width="24.8" height="7.9" rx="4" fill="#3c9a8e"/><rect x="112.5" y="1.4" width="22.6" height="7.2" rx="4" fill="#52b860"/><rect x="143.1" y="4.2" width="22.6" height="8.8" rx="4" fill="#7ad45a"/><rect x="538.3" y="-1.7" width="16.6" height="8.2" rx="4" fill="#3c9a8e"/><rect x="18.7" y="1.8" width="26.5" height="7.0" rx="4" fill="#62c85a"/><rect x="379.4" y="-2.2" width="23.6" height="9.1" rx="4" fill="#23688a"/><rect x="340.1" y="-1.5" width="28.5" height="9.3" rx="4" fill="#23688a"/><rect x="775.7" y="-1.5" width="20.4" height="6.1" rx="4" fill="#52b860"/><rect x="19.7" y="-0.9" width="17.5" height="8.4" rx="4" fill="#7ad45a"/><rect x="355.6" y="4.9" width="31.2" height="7.5" rx="4" fill="#3c9a8e"/><rect x="224.1" y="-1.5" width="20.1" height="7.9" rx="4" fill="#23688a"/><rect x="1036.3" y="2.7" width="22.6" height="8.6" rx="4" fill="#3fa36a"/><rect x="839.2" y="-3.1" width="30.4" height="9.1" rx="4" fill="#62c85a"/><rect x="786.6" y="1.3" width="21.8" height="8.5" rx="4" fill="#2c7c88"/><rect x="82.1" y="6.4" width="22.3" height="9.0" rx="4" fill="#1f5f80"/><rect x="80.2" y="-2.3" width="14.5" height="8.4" rx="4" fill="#2c7c88"/><rect x="484.2" y="3.2" width="25.8" height="7.4" rx="4" fill="#52b860"/><rect x="572.7" y="-2.6" width="28.4" height="8.9" rx="4" fill="#3fa36a"/><rect x="99.1" y="4.2" width="21.8" height="9.5" rx="4" fill="#2c7c88"/><rect x="867.4" y="-1.7" width="17.8" height="8.0" rx="4" fill="#7ad45a"/><rect x="801.0" y="-0.4" width="29.0" height="6.2" rx="4" fill="#1f5f80"/><rect x="775.8" y="5.9" width="28.9" height="9.5" rx="4" fill="#1f5f80"/><rect x="128.9" y="-2.3" width="29.7" height="9.1" rx="4" fill="#3fa36a"/><rect x="636.3" y="4.5" width="17.1" height="7.9" rx="4" fill="#2c7c88"/><rect x="760.2" y="2.1" width="26.3" height="8.1" rx="4" fill="#3c9a8e"/><rect x="502.4" y="4.5" width="18.5" height="7.1" rx="4" fill="#3fa36a"/><rect x="810.1" y="1.6" width="27.7" height="9.6" rx="4" fill="#3fa36a"/><rect x="460.7" y="2.7" width="26.5" height="7.8" rx="4" fill="#23688a"/><rect x="556.3" y="1.3" width="26.6" height="9.5" rx="4" fill="#23688a"/><rect x="990.6" y="-1.1" width="29.1" height="6.5" rx="4" fill="#23688a"/><rect x="119.2" y="0.9" width="26.1" height="7.7" rx="4" fill="#62c85a"/><rect x="215.9" y="-0.7" width="30.1" height="6.6" rx="4" fill="#62c85a"/><rect x="750.5" y="3.3" width="18.6" height="6.5" rx="4" fill="#2c7c88"/><rect x="486.7" y="4.2" width="21.2" height="7.9" rx="4" fill="#62c85a"/><rect x="1041.2" y="5.2" width="26.7" height="10.0" rx="4" fill="#2c7c88"/><rect x="418.8" y="0.6" width="19.7" height="8.9" rx="4" fill="#3c9a8e"/><rect x="10.7" y="2.1" width="26.7" height="7.5" rx="4" fill="#52b860"/><rect x="539.5" y="-0.8" width="16.0" height="9.7" rx="4" fill="#62c85a"/><rect x="232.7" y="5.6" width="18.8" height="6.2" rx="4" fill="#62c85a"/><rect x="817.3" y="-1.0" width="28.8" height="9.4" rx="4" fill="#2c7c88"/><rect x="707.9" y="6.4" width="16.7" height="9.7" rx="4" fill="#1f5f80"/><rect x="596.0" y="3.7" width="19.0" height="9.2" rx="4" fill="#62c85a"/><rect x="184.7" y="5.8" width="30.9" height="8.5" rx="4" fill="#7ad45a"/><rect x="841.3" y="-3.1" width="15.2" height="9.5" rx="4" fill="#23688a"/><rect x="471.9" y="-0.3" width="30.7" height="7.1" rx="4" fill="#1f5f80"/><rect x="127.2" y="1.8" width="30.9" height="9.9" rx="4" fill="#23688a"/><rect x="268.1" y="-2.0" width="25.3" height="8.1" rx="4" fill="#7ad45a"/><rect x="208.6" y="0.9" width="18.9" height="9.2" rx="4" fill="#2c7c88"/><rect x="1046.2" y="-3.6" width="27.2" height="8.2" rx="4" fill="#3fa36a"/><rect x="191.2" y="1.2" width="15.9" height="9.3" rx="4" fill="#52b860"/><rect x="449.0" y="1.4" width="31.5" height="7.2" rx="4" fill="#1f5f80"/><rect x="218.5" y="-1.5" width="29.0" height="8.8" rx="4" fill="#23688a"/><rect x="665.4" y="0.5" width="31.7" height="9.3" rx="4" fill="#3c9a8e"/><rect x="5.1" y="2.9" width="21.8" height="6.2" rx="4" fill="#7ad45a"/><rect x="696.5" y="0.2" width="24.8" height="8.8" rx="4" fill="#7ad45a"/><rect x="38.0" y="-2.0" width="22.0" height="7.1" rx="4" fill="#7ad45a"/><rect x="1011.4" y="6.7" width="18.4" height="9.9" rx="4" fill="#3c9a8e"/><rect x="318.7" y="-0.1" width="20.0" height="6.3" rx="4" fill="#3fa36a"/><rect x="286.2" y="3.2" width="23.1" height="6.0" rx="4" fill="#23688a"/><rect x="270.5" y="-3.0" width="24.6" height="7.6" rx="4" fill="#1f5f80"/><rect x="308.2" y="2.9" width="24.5" height="8.1" rx="4" fill="#62c85a"/><rect x="787.1" y="3.2" width="27.8" height="8.9" rx="4" fill="#1f5f80"/><rect x="514.8" y="-0.9" width="14.8" height="9.3" rx="4" fill="#2c7c88"/><rect x="937.2" y="2.9" width="30.4" height="9.0" rx="4" fill="#2c7c88"/><rect x="593.7" y="4.9" width="28.9" height="8.3" rx="4" fill="#3fa36a"/><rect x="938.2" y="3.5" width="15.5" height="6.2" rx="4" fill="#23688a"/><rect x="666.6" y="6.6" width="29.0" height="8.2" rx="4" fill="#1f5f80"/><rect x="656.7" y="2.9" width="22.8" height="6.0" rx="4" fill="#23688a"/><rect x="837.2" y="4.2" width="25.9" height="6.3" rx="4" fill="#62c85a"/><rect x="772.5" y="-1.2" width="29.2" height="6.9" rx="4" fill="#62c85a"/><rect x="793.3" y="-1.5" width="22.9" height="7.5" rx="4" fill="#52b860"/><rect x="498.7" y="3.5" width="25.1" height="8.6" rx="4" fill="#3fa36a"/><rect x="72.3" y="-2.4" width="25.7" height="8.8" rx="4" fill="#7ad45a"/><rect x="649.7" y="-2.5" width="15.1" height="7.1" rx="4" fill="#52b860"/><rect x="703.7" y="3.6" width="19.2" height="8.1" rx="4" fill="#52b860"/><rect x="483.5" y="1.1" width="31.9" height="8.2" rx="4" fill="#62c85a"/><rect x="321.0" y="-3.1" width="14.3" height="7.8" rx="4" fill="#52b860"/><rect x="860.7" y="6.6" width="31.9" height="7.5" rx="4" fill="#52b860"/><rect x="963.4" y="6.2" width="24.5" height="6.6" rx="4" fill="#62c85a"/><rect x="546.6" y="6.5" width="24.9" height="8.5" rx="4" fill="#2c7c88"/><rect x="286.9" y="-2.8" width="18.2" height="9.6" rx="4" fill="#3c9a8e"/><rect x="506.3" y="-3.7" width="31.1" height="8.7" rx="4" fill="#3fa36a"/><rect x="420.6" y="4.0" width="20.2" height="7.3" rx="4" fill="#1f5f80"/><rect x="882.3" y="-4.0" width="29.1" height="6.5" rx="4" fill="#3c9a8e"/><rect x="973.8" y="3.8" width="18.6" height="6.3" rx="4" fill="#7ad45a"/><rect x="404.4" y="5.6" width="20.5" height="7.7" rx="4" fill="#62c85a"/><rect x="282.2" y="-3.5" width="14.9" height="8.6" rx="4" fill="#62c85a"/><rect x="664.3" y="-2.4" width="21.9" height="7.3" rx="4" fill="#7ad45a"/><rect x="811.1" y="4.6" width="29.9" height="9.2" rx="4" fill="#1f5f80"/><rect x="660.0" y="6.0" width="27.0" height="6.2" rx="4" fill="#23688a"/><rect x="767.8" y="1.0" width="25.6" height="7.1" rx="4" fill="#2c7c88"/><rect x="42.0" y="6.2" width="17.1" height="7.7" rx="4" fill="#2c7c88"/><rect x="289.2" y="-1.2" width="21.3" height="7.0" rx="4" fill="#7ad45a"/><rect x="503.1" y="3.4" width="17.0" height="6.6" rx="4" fill="#62c85a"/><rect x="210.8" y="6.0" width="23.9" height="7.8" rx="4" fill="#52b860"/><rect x="343.5" y="4.4" width="16.5" height="6.8" rx="4" fill="#1f5f80"/><rect x="86.3" y="-0.2" width="19.7" height="7.5" rx="4" fill="#62c85a"/><rect x="849.5" y="-1.8" width="27.5" height="7.7" rx="4" fill="#3fa36a"/><rect x="429.5" y="1.8" width="18.9" height="9.0" rx="4" fill="#1f5f80"/><rect x="519.0" y="2.3" width="16.3" height="8.0" rx="4" fill="#3c9a8e"/><rect x="658.7" y="5.5" width="15.7" height="9.6" rx="4" fill="#23688a"/><rect x="398.4" y="3.1" width="31.2" height="9.4" rx="4" fill="#1f5f80"/><rect x="917.0" y="-3.8" width="21.7" height="9.1" rx="4" fill="#3fa36a"/><rect x="844.1" y="6.7" width="14.0" height="7.6" rx="4" fill="#52b860"/><rect x="974.3" y="5.1" width="31.5" height="7.0" rx="4" fill="#52b860"/><rect x="105.8" y="-2.3" width="30.9" height="8.9" rx="4" fill="#62c85a"/><rect x="677.5" y="4.4" width="15.5" height="9.1" rx="4" fill="#52b860"/><rect x="-8.5" y="-2.6" width="25.6" height="7.2" rx="4" fill="#3fa36a"/><rect x="125.9" y="-1.2" width="26.6" height="6.4" rx="4" fill="#1f5f80"/><rect x="64.7" y="1.8" width="21.0" height="6.9" rx="4" fill="#23688a"/><rect x="628.3" y="-3.9" width="31.9" height="7.1" rx="4" fill="#7ad45a"/><rect x="326.0" y="5.2" width="22.6" height="6.9" rx="4" fill="#23688a"/><rect x="252.4" y="6.6" width="15.0" height="6.8" rx="4" fill="#7ad45a"/><rect x="929.7" y="3.1" width="18.6" height="8.7" rx="4" fill="#62c85a"/><rect x="972.5" y="-1.5" width="26.5" height="8.9" rx="4" fill="#3fa36a"/><rect x="374.8" y="0.4" width="28.3" height="9.0" rx="4" fill="#3fa36a"/><rect x="526.2" y="-1.7" width="19.6" height="9.3" rx="4" fill="#23688a"/><rect x="235.1" y="-1.6" width="16.0" height="8.5" rx="4" fill="#7ad45a"/><rect x="637.9" y="5.9" width="21.5" height="8.7" rx="4" fill="#52b860"/><rect x="997.6" y="-2.4" width="15.0" height="6.1" rx="4" fill="#1f5f80"/><rect x="623.1" y="0.6" width="17.3" height="7.8" rx="4" fill="#3fa36a"/><rect x="746.2" y="-0.5" width="32.0" height="9.7" rx="4" fill="#62c85a"/><rect x="339.7" y="-2.0" width="14.6" height="8.7" rx="4" fill="#52b860"/><rect x="392.1" y="0.1" width="22.0" height="6.4" rx="4" fill="#3c9a8e"/><rect x="73.1" y="-3.1" width="31.2" height="6.5" rx="4" fill="#1f5f80"/><rect x="1014.1" y="-1.7" width="27.8" height="7.2" rx="4" fill="#3c9a8e"/><rect x="843.8" y="-3.0" width="17.5" height="8.2" rx="4" fill="#52b860"/><rect x="464.0" y="-0.4" width="14.5" height="7.6" rx="4" fill="#52b860"/><rect x="852.2" y="4.4" width="20.8" height="7.9" rx="4" fill="#3fa36a"/><rect x="843.1" y="-3.3" width="27.5" height="9.6" rx="4" fill="#23688a"/><rect x="350.1" y="-1.0" width="18.7" height="8.9" rx="4" fill="#3fa36a"/><rect x="326.1" y="-1.0" width="27.0" height="8.4" rx="4" fill="#3fa36a"/><rect x="845.6" y="6.4" width="14.4" height="6.9" rx="4" fill="#62c85a"/><rect x="494.7" y="6.5" width="28.2" height="9.7" rx="4" fill="#1f5f80"/><rect x="855.3" y="-2.5" width="17.3" height="9.2" rx="4" fill="#52b860"/><rect x="774.3" y="5.1" width="24.9" height="7.3" rx="4" fill="#2c7c88"/><rect x="329.4" y="-0.0" width="23.2" height="7.6" rx="4" fill="#62c85a"/><rect x="159.9" y="0.5" width="22.7" height="8.2" rx="4" fill="#3fa36a"/><rect x="160.7" y="0.7" width="31.8" height="7.1" rx="4" fill="#62c85a"/><rect x="79.3" y="-2.9" width="31.8" height="9.9" rx="4" fill="#52b860"/><rect x="173.9" y="-2.5" width="25.2" height="8.7" rx="4" fill="#52b860"/><rect x="784.4" y="5.3" width="28.0" height="7.2" rx="4" fill="#62c85a"/><rect x="286.7" y="-1.1" width="27.3" height="6.8" rx="4" fill="#7ad45a"/><rect x="252.8" y="-1.3" width="19.1" height="9.6" rx="4" fill="#2c7c88"/><rect x="189.9" y="-3.3" width="31.9" height="8.0" rx="4" fill="#7ad45a"/><rect x="235.7" y="4.9" width="31.8" height="6.4" rx="4" fill="#52b860"/><rect x="494.2" y="5.0" width="30.5" height="6.2" rx="4" fill="#52b860"/><rect x="301.9" y="-2.7" width="24.8" height="9.3" rx="4" fill="#23688a"/><rect x="196.2" y="-3.2" width="22.1" height="7.0" rx="4" fill="#2c7c88"/><rect x="816.0" y="6.4" width="25.5" height="8.8" rx="4" fill="#62c85a"/><rect x="361.4" y="-3.6" width="16.5" height="6.8" rx="4" fill="#3c9a8e"/><rect x="260.7" y="2.6" width="28.7" height="9.3" rx="4" fill="#23688a"/><rect x="424.4" y="0.1" width="15.4" height="6.1" rx="4" fill="#7ad45a"/><rect x="516.4" y="1.3" width="15.8" height="7.6" rx="4" fill="#1f5f80"/><rect x="574.2" y="3.0" width="25.8" height="7.6" rx="4" fill="#62c85a"/><rect x="278.0" y="6.9" width="21.5" height="6.2" rx="4" fill="#7ad45a"/><rect x="781.5" y="5.7" width="21.5" height="9.5" rx="4" fill="#1f5f80"/><rect x="1048.4" y="0.0" width="21.0" height="7.6" rx="4" fill="#23688a"/><rect x="990.4" y="0.8" width="21.6" height="9.3" rx="4" fill="#2c7c88"/><rect x="421.4" y="5.7" width="27.9" height="6.5" rx="4" fill="#52b860"/><rect x="44.9" y="-2.4" width="15.6" height="8.5" rx="4" fill="#1f5f80"/><rect x="383.8" y="1.5" width="20.3" height="6.6" rx="4" fill="#2c7c88"/><rect x="172.4" y="-3.3" width="22.8" height="9.2" rx="4" fill="#1f5f80"/><rect x="1016.8" y="-1.8" width="29.1" height="6.2" rx="4" fill="#2c7c88"/><rect x="959.4" y="-0.5" width="15.6" height="8.8" rx="4" fill="#1f5f80"/><rect x="720.9" y="5.8" width="25.2" height="8.5" rx="4" fill="#23688a"/><rect x="198.3" y="1.2" width="14.8" height="9.8" rx="4" fill="#23688a"/><rect x="156.2" y="-0.0" width="18.4" height="8.9" rx="4" fill="#2c7c88"/><rect x="942.9" y="-3.5" width="26.0" height="7.3" rx="4" fill="#3fa36a"/><rect x="404.0" y="1.0" width="25.7" height="7.2" rx="4" fill="#7ad45a"/><rect x="254.7" y="0.3" width="22.0" height="7.8" rx="4" fill="#3c9a8e"/><rect x="14.8" y="2.8" width="22.4" height="7.8" rx="4" fill="#52b860"/><rect x="646.9" y="5.0" width="28.6" height="7.6" rx="4" fill="#2c7c88"/><rect x="61.3" y="-0.1" width="15.7" height="7.8" rx="4" fill="#3c9a8e"/><rect x="531.8" y="-3.6" width="15.5" height="8.9" rx="4" fill="#2c7c88"/><rect x="815.8" y="1.6" width="27.5" height="9.6" rx="4" fill="#3fa36a"/><rect x="683.2" y="4.6" width="29.4" height="10.0" rx="4" fill="#3fa36a"/><rect x="767.5" y="5.0" width="16.4" height="9.5" rx="4" fill="#23688a"/><rect x="295.7" y="4.9" width="26.4" height="8.9" rx="4" fill="#2c7c88"/><rect x="224.8" y="5.2" width="16.9" height="9.6" rx="4" fill="#7ad45a"/><rect x="282.0" y="5.0" width="18.6" height="9.9" rx="4" fill="#2c7c88"/><rect x="499.9" y="2.5" width="19.7" height="6.1" rx="4" fill="#23688a"/><rect x="183.4" y="-2.2" width="26.2" height="9.6" rx="4" fill="#7ad45a"/><rect x="169.2" y="4.6" width="27.8" height="6.2" rx="4" fill="#62c85a"/><rect x="901.5" y="6.6" width="24.0" height="8.3" rx="4" fill="#52b860"/><rect x="927.3" y="-2.8" width="27.3" height="7.5" rx="4" fill="#1f5f80"/><rect x="389.0" y="0.1" width="20.5" height="9.1" rx="4" fill="#2c7c88"/><rect x="459.7" y="-2.1" width="19.3" height="8.1" rx="4" fill="#3fa36a"/><rect x="319.3" y="6.6" width="27.2" height="9.0" rx="4" fill="#3c9a8e"/><rect x="225.4" y="-0.8" width="21.5" height="7.5" rx="4" fill="#1f5f80"/><rect x="40.7" y="1.4" width="14.4" height="6.0" rx="4" fill="#3fa36a"/><rect x="367.0" y="-2.8" width="23.6" height="7.7" rx="4" fill="#3c9a8e"/><rect x="309.8" y="-2.5" width="25.2" height="7.9" rx="4" fill="#3c9a8e"/><rect x="133.1" y="6.3" width="26.7" height="7.8" rx="4" fill="#23688a"/><rect x="57.6" y="-2.4" width="21.2" height="7.1" rx="4" fill="#7ad45a"/><rect x="2.2" y="3.1" width="24.7" height="8.3" rx="4" fill="#3c9a8e"/><rect x="629.2" y="1.7" width="18.5" height="9.6" rx="4" fill="#52b860"/><rect x="36.7" y="1.8" width="17.3" height="6.6" rx="4" fill="#1f5f80"/><rect x="958.3" y="-2.8" width="16.6" height="6.8" rx="4" fill="#23688a"/><rect x="635.8" y="1.6" width="28.6" height="6.7" rx="4" fill="#1f5f80"/><rect x="318.6" y="-0.7" width="31.9" height="8.9" rx="4" fill="#3fa36a"/><rect x="497.6" y="1.9" width="29.2" height="9.0" rx="4" fill="#1f5f80"/><rect x="484.1" y="4.2" width="17.2" height="10.0" rx="4" fill="#52b860"/><rect x="267.6" y="3.1" width="20.0" height="9.0" rx="4" fill="#62c85a"/><rect x="728.2" y="5.3" width="18.8" height="8.2" rx="4" fill="#3fa36a"/><rect x="453.1" y="4.7" width="19.3" height="9.7" rx="4" fill="#7ad45a"/><rect x="939.6" y="-3.1" width="17.1" height="9.6" rx="4" fill="#3fa36a"/><rect x="883.9" y="-1.8" width="27.4" height="7.3" rx="4" fill="#2c7c88"/><rect x="924.7" y="-0.4" width="20.8" height="9.4" rx="4" fill="#23688a"/><rect x="968.8" y="6.8" width="22.5" height="8.1" rx="4" fill="#52b860"/><rect x="-3.2" y="-3.7" width="24.3" height="7.2" rx="4" fill="#23688a"/><rect x="215.1" y="2.8" width="24.2" height="6.7" rx="4" fill="#62c85a"/><rect x="25.0" y="-2.8" width="20.2" height="6.6" rx="4" fill="#2c7c88"/><path d="M254 10 L262 0 L300 0 L306 10 Z" fill="#b8e6f0"/><path d="M266 10 L272 2 L292 2 L296 10 Z" fill="#e4f6f8"/><rect x="885" y="0" width="14" height="10" fill="#d8f0f2"/><rect x="985" y="0" width="16" height="10" fill="#9cdce8"/><rect x="1018" y="0" width="34" height="10" fill="#7ad060"/></g><rect x="1052" y="0" width="112" height="10" fill="#4ab4ec"/><path d="M1090 10 L1094 2 L1098 10 Z" fill="#c8ecf8"/></svg><rect x="75" y="734" width="1164" height="39" fill="#808080"/><rect x="74" y="118" width="1" height="655" fill="#8e8e8e"/><rect x="75" y="773" width="1164" height="13" fill="#3b3b3b"/><rect x="453.5" y="773.5" width="405" height="12" fill="#474747" stroke="#575757" stroke-width="1" rx="1.5"/><rect x="75.5" y="773.5" width="11" height="12" fill="#474747" stroke="#575757" stroke-width="1" rx="1.5"/><path d="M83 776 L79 779.5 L83 783 Z" fill="#c8c8c8"/><rect x="1227.5" y="773.5" width="11" height="12" fill="#474747" stroke="#575757" stroke-width="1" rx="1.5"/><path d="M1231 776 L1235 779.5 L1231 783 Z" fill="#c8c8c8"/><rect x="1239" y="724" width="12" height="49" fill="#3b3b3b"/><rect x="1239.5" y="760.5" width="11" height="12" fill="#474747" stroke="#575757" stroke-width="1" rx="1.5"/><path d="M1242 765 H1248 L1245 768 Z" fill="#c8c8c8"/><rect x="1251" y="724" width="253" height="62" fill="#474747"/><rect x="1258" y="724" width="232" height="35" fill="#383838"/><rect x="1260" y="724" width="36" height="10" fill="#e0e0e0"/><circle cx="1281.7" cy="730.7" r="1.6" fill="#202020" opacity="0.84"/><circle cx="1290.7" cy="724.3" r="1.6" fill="#10a0a8" opacity="0.79"/><circle cx="1290.0" cy="725.0" r="0.8" fill="#10a0a8" opacity="0.73"/><circle cx="1280.2" cy="724.1" r="0.8" fill="#10a0a8" opacity="0.95"/><circle cx="1286.0" cy="725.4" r="0.7" fill="#202020" opacity="0.77"/><circle cx="1266.8" cy="724.0" r="0.8" fill="#202020" opacity="0.53"/><circle cx="1292.5" cy="731.9" r="1.7" fill="#10a0a8" opacity="0.72"/><circle cx="1283.3" cy="725.8" r="1.3" fill="#202020" opacity="0.98"/><circle cx="1289.8" cy="726.7" r="0.7" fill="#10a0a8" opacity="0.49"/><circle cx="1265.0" cy="726.7" r="0.5" fill="#202020" opacity="0.81"/><circle cx="1273.1" cy="726.8" r="1.1" fill="#202020" opacity="0.59"/><circle cx="1277.4" cy="730.3" r="1.7" fill="#10a0a8" opacity="0.41"/><circle cx="1285.5" cy="731.6" r="1.4" fill="#10a0a8" opacity="0.62"/><circle cx="1280.4" cy="724.1" r="0.7" fill="#10a0a8" opacity="0.97"/><circle cx="1268.9" cy="730.8" r="1.6" fill="#202020" opacity="0.61"/><circle cx="1273.6" cy="728.7" r="0.6" fill="#202020" opacity="0.85"/><circle cx="1286.9" cy="731.7" r="1.6" fill="#10a0a8" opacity="0.45"/><circle cx="1273.2" cy="729.5" r="0.9" fill="#202020" opacity="0.95"/><circle cx="1279.4" cy="726.8" r="0.7" fill="#10a0a8" opacity="0.45"/><circle cx="1267.5" cy="730.2" r="0.7" fill="#202020" opacity="0.43"/><circle cx="1292.6" cy="728.8" r="0.8" fill="#10a0a8" opacity="0.76"/><circle cx="1287.8" cy="728.1" r="0.6" fill="#10a0a8" opacity="0.95"/><circle cx="1264.0" cy="728.4" r="0.7" fill="#202020" opacity="0.84"/><circle cx="1291.5" cy="729.7" r="0.6" fill="#202020" opacity="0.66"/><circle cx="1267.5" cy="731.6" r="1.0" fill="#10a0a8" opacity="1.00"/><circle cx="1288.6" cy="732.8" r="1.1" fill="#10a0a8" opacity="0.84"/><circle cx="1277.4" cy="726.6" r="0.7" fill="#10a0a8" opacity="0.63"/><circle cx="1292.7" cy="732.6" r="1.1" fill="#202020" opacity="0.60"/><circle cx="1265.7" cy="726.5" r="1.5" fill="#202020" opacity="0.62"/><circle cx="1286.6" cy="731.0" r="1.3" fill="#202020" opacity="0.86"/><circle cx="1273.9" cy="730.3" r="1.1" fill="#10a0a8" opacity="0.86"/><circle cx="1283.7" cy="726.6" r="1.3" fill="#202020" opacity="0.75"/><circle cx="1263.3" cy="728.9" r="1.3" fill="#10a0a8" opacity="0.68"/><circle cx="1287.5" cy="729.8" r="0.9" fill="#202020" opacity="0.79"/><circle cx="1285.1" cy="731.5" r="1.5" fill="#10a0a8" opacity="0.92"/><circle cx="1283.7" cy="732.8" r="1.1" fill="#202020" opacity="0.72"/><circle cx="1268.0" cy="731.5" r="1.1" fill="#202020" opacity="0.81"/><circle cx="1284.6" cy="730.6" r="1.4" fill="#10a0a8" opacity="0.75"/><circle cx="1283.0" cy="727.8" r="1.4" fill="#202020" opacity="0.78"/><circle cx="1284.6" cy="724.2" r="1.0" fill="#10a0a8" opacity="0.79"/><rect x="1298" y="724" width="36" height="10" fill="#e0e0e0"/><circle cx="1307.6" cy="730.2" r="1.3" fill="#202020" opacity="0.43"/><circle cx="1315.1" cy="726.0" r="0.6" fill="#202020" opacity="0.48"/><circle cx="1310.5" cy="725.6" r="0.7" fill="#202020" opacity="0.42"/><circle cx="1315.0" cy="727.4" r="1.2" fill="#202020" opacity="0.75"/><circle cx="1308.1" cy="732.1" r="0.5" fill="#202020" opacity="0.64"/><circle cx="1309.4" cy="727.7" r="0.6" fill="#202020" opacity="0.90"/><circle cx="1312.2" cy="724.3" r="1.2" fill="#202020" opacity="0.46"/><circle cx="1317.4" cy="727.1" r="1.2" fill="#202020" opacity="0.97"/><circle cx="1325.6" cy="727.8" r="1.5" fill="#202020" opacity="0.79"/><circle cx="1312.1" cy="725.3" r="1.2" fill="#202020" opacity="0.74"/><circle cx="1329.7" cy="732.7" r="1.2" fill="#202020" opacity="0.61"/><circle cx="1327.8" cy="724.0" r="0.6" fill="#202020" opacity="0.74"/><circle cx="1319.5" cy="725.3" r="1.3" fill="#202020" opacity="0.93"/><circle cx="1312.3" cy="727.9" r="0.8" fill="#202020" opacity="0.57"/><circle cx="1330.2" cy="727.4" r="1.7" fill="#202020" opacity="0.95"/><circle cx="1318.9" cy="726.3" r="1.7" fill="#202020" opacity="0.70"/><circle cx="1313.5" cy="726.9" r="1.7" fill="#202020" opacity="0.70"/><circle cx="1309.6" cy="728.3" r="0.6" fill="#202020" opacity="0.77"/><circle cx="1314.3" cy="726.6" r="1.4" fill="#202020" opacity="0.90"/><circle cx="1301.4" cy="728.8" r="0.8" fill="#202020" opacity="0.96"/><circle cx="1324.5" cy="726.2" r="0.8" fill="#202020" opacity="0.49"/><circle cx="1330.7" cy="726.6" r="1.2" fill="#202020" opacity="0.68"/><circle cx="1320.3" cy="729.4" r="1.4" fill="#202020" opacity="0.47"/><circle cx="1323.8" cy="726.7" r="1.1" fill="#202020" opacity="0.60"/><circle cx="1309.9" cy="728.8" r="1.1" fill="#202020" opacity="0.62"/><circle cx="1323.4" cy="729.3" r="0.5" fill="#202020" opacity="0.55"/><circle cx="1314.7" cy="732.2" r="1.6" fill="#202020" opacity="0.73"/><circle cx="1301.4" cy="731.0" r="1.0" fill="#202020" opacity="0.75"/><circle cx="1322.2" cy="729.7" r="1.1" fill="#202020" opacity="0.95"/><circle cx="1312.6" cy="727.5" r="1.5" fill="#202020" opacity="0.52"/><rect x="1336" y="724" width="36" height="10" fill="#e0e0e0"/><circle cx="1347.9" cy="731.5" r="0.6" fill="#202020" opacity="0.90"/><circle cx="1359.8" cy="727.9" r="0.8" fill="#202020" opacity="0.87"/><circle cx="1366.3" cy="725.3" r="1.1" fill="#202020" opacity="0.73"/><circle cx="1353.9" cy="727.0" r="0.7" fill="#202020" opacity="0.75"/><circle cx="1363.4" cy="724.6" r="0.8" fill="#202020" opacity="0.89"/><circle cx="1362.8" cy="730.0" r="0.5" fill="#202020" opacity="0.83"/><circle cx="1368.4" cy="733.0" r="1.3" fill="#202020" opacity="0.43"/><circle cx="1364.3" cy="726.0" r="1.3" fill="#202020" opacity="0.97"/><circle cx="1360.4" cy="725.2" r="0.9" fill="#202020" opacity="0.95"/><circle cx="1343.5" cy="729.5" r="1.0" fill="#202020" opacity="0.50"/><circle cx="1357.7" cy="724.4" r="0.6" fill="#202020" opacity="0.63"/><circle cx="1341.2" cy="724.5" r="1.2" fill="#202020" opacity="0.85"/><rect x="1373" y="724" width="36" height="10" fill="#e0e0e0"/><circle cx="1402.4" cy="725.2" r="1.0" fill="#202020" opacity="0.59"/><circle cx="1394.0" cy="728.4" r="1.6" fill="#202020" opacity="0.62"/><circle cx="1377.7" cy="730.3" r="0.7" fill="#202020" opacity="0.78"/><circle cx="1391.2" cy="732.2" r="1.2" fill="#202020" opacity="0.77"/><circle cx="1383.9" cy="729.0" r="0.8" fill="#202020" opacity="0.85"/><circle cx="1391.5" cy="725.2" r="0.8" fill="#202020" opacity="0.62"/><circle cx="1398.1" cy="725.6" r="1.4" fill="#202020" opacity="0.79"/><circle cx="1378.6" cy="730.0" r="0.6" fill="#202020" opacity="0.47"/><circle cx="1393.8" cy="726.1" r="1.6" fill="#202020" opacity="0.69"/><circle cx="1385.7" cy="731.2" r="0.5" fill="#202020" opacity="0.84"/><circle cx="1377.6" cy="725.4" r="1.6" fill="#202020" opacity="0.81"/><circle cx="1382.7" cy="725.0" r="1.7" fill="#202020" opacity="0.80"/><circle cx="1400.6" cy="725.3" r="1.2" fill="#202020" opacity="0.61"/><circle cx="1383.1" cy="727.0" r="1.2" fill="#202020" opacity="0.61"/><circle cx="1387.6" cy="725.2" r="1.5" fill="#202020" opacity="0.79"/><circle cx="1400.1" cy="727.9" r="1.5" fill="#202020" opacity="0.71"/><circle cx="1393.8" cy="729.2" r="1.4" fill="#202020" opacity="0.64"/><circle cx="1378.9" cy="724.3" r="0.7" fill="#202020" opacity="0.42"/><circle cx="1402.7" cy="728.3" r="1.4" fill="#202020" opacity="0.40"/><circle cx="1390.1" cy="732.0" r="1.2" fill="#202020" opacity="0.66"/><circle cx="1390.0" cy="724.9" r="0.7" fill="#202020" opacity="0.50"/><circle cx="1387.2" cy="727.5" r="1.6" fill="#202020" opacity="0.49"/><circle cx="1383.6" cy="726.5" r="0.7" fill="#202020" opacity="0.57"/><circle cx="1383.1" cy="728.3" r="0.5" fill="#202020" opacity="0.95"/><circle cx="1387.1" cy="732.4" r="1.3" fill="#202020" opacity="0.80"/><circle cx="1390.2" cy="732.5" r="0.6" fill="#202020" opacity="0.80"/><circle cx="1384.7" cy="730.1" r="1.4" fill="#202020" opacity="0.50"/><circle cx="1382.0" cy="724.2" r="0.8" fill="#202020" opacity="0.45"/><circle cx="1388.0" cy="732.8" r="0.9" fill="#202020" opacity="0.59"/><circle cx="1390.0" cy="726.5" r="1.4" fill="#202020" opacity="0.83"/><rect x="1410.5" y="724.5" width="36" height="10" fill="#3a3a3a" stroke="#363636" stroke-width="1"/><rect x="1448.5" y="724.5" width="36" height="10" fill="#3a3a3a" stroke="#363636" stroke-width="1"/><rect x="1489" y="724" width="13" height="37" fill="#3b3b3b"/><rect x="1490.5" y="724.5" width="10" height="23" fill="#424242" stroke="#363636" stroke-width="1"/><rect x="1489.5" y="750.5" width="12" height="10" fill="#474747" stroke="#575757" stroke-width="1" rx="1.5"/><path d="M1492 754 H1498 L1495 757 Z" fill="#c8c8c8"/><rect x="1258.5" y="764.5" width="218" height="19" fill="#383838" stroke="#3a3a3a" stroke-width="1" rx="2"/><text x="1262" y="778" font-size="12.6" fill="#8c8c8c">Search</text><rect x="1477.5" y="764.5" width="26" height="20" fill="#454545" stroke="#3b3b3b" stroke-width="1" rx="2"/><path d="M1484.5 768.5 H1494 L1496.5 771 V780.5 H1484.5 Z" fill="none" stroke="#d8d8d8" stroke-width="1.1"/><rect x="1487" y="769" width="6" height="4" fill="none" stroke="#d8d8d8" stroke-width="1"/><rect x="1486.5" y="775.5" width="8" height="5" fill="none" stroke="#d8d8d8" stroke-width="1"/><rect x="0" y="786" width="1504" height="29" fill="#474747"/><rect x="6.5" y="794.5" width="14" height="13" fill="none" stroke="#d0d0d0" stroke-width="1.2"/><circle cx="13.5" cy="801" r="4" fill="none" stroke="#c0c0c0" stroke-width="0.9" stroke-dasharray="1.2 1"/><text x="35" y="807" font-size="12.6" fill="#d8d8d8">b) Basic-6 Details</text><text x="354" y="807" font-size="12.6" fill="#d8d8d8">RGB/Alpha (8-bit integer/channel)  sRGB-elle-V2-srgbtrc.icc</text><rect x="1044.5" y="790.5" width="143" height="22" fill="#474747" stroke="#3c3c3c" stroke-width="1" rx="2"/><rect x="1047" y="795" width="2" height="13" fill="#4a7ab0"/><text x="1048" y="807" font-size="12.6" fill="#d8d8d8">9993 x 4961 (191,3 MiB)</text><text x="1362" y="807" font-size="12.6" fill="#d8d8d8">15%</text><rect x="1402" y="801" width="77" height="4" fill="#353535" rx="2"/><rect x="1402" y="801" width="16" height="4" fill="#6a8db0" rx="2"/><rect x="1417.5" y="795.5" width="11" height="11" fill="#5a5a5a" stroke="#3a3a3a" stroke-width="1" rx="2"/><rect x="1481.5" y="790.5" width="22" height="22" fill="#454545" stroke="#3b3b3b" stroke-width="1" rx="2"/><rect x="1485" y="794" width="15" height="15" fill="#ffffff"/><path d="M1492.5 796 L1498 801.5 L1492.5 807 L1487 801.5 Z" fill="#f0c020"/><circle cx="1492.5" cy="801.5" r="2.5" fill="#3080e0"/><rect x="222" y="85" width="1282" height="640" fill="#474747"/><rect x="222" y="85" width="1282" height="1" fill="#a8a8a8"/><rect x="222" y="85" width="1" height="640" fill="#999999"/><rect x="222" y="724" width="1282" height="1" fill="#b0b0b0"/><rect x="223" y="86" width="1281" height="1" fill="#3c3c3c"/><defs><linearGradient id="bi" x1="0" y1="0" x2="1" y2="1"><stop offset="0" stop-color="#dcdcdc"/><stop offset="1" stop-color="#c8c8c8"/></linearGradient></defs><rect x="232" y="96" width="51" height="51" fill="url(#bi)"/><path d="M262 116 L283 96" fill="none" stroke="#e07818" stroke-width="4"/><path d="M258 120 L265 113" fill="none" stroke="#d8c8e8" stroke-width="3"/><path d="M253 126 C255 121 257 119 259 118 L261 120 C259 123 256 125 253 126 Z" fill="#502028"/><path d="M244 142 C252 132 258 132 257 138 C256 144 266 142 283 130" fill="none" stroke="#2a2a2a" stroke-width="1.6"/><rect x="292" y="94" width="300" height="1" fill="#3b3b3b"/><rect x="292" y="94" width="1" height="56" fill="#3b3b3b"/><defs><linearGradient id="strk" x1="0" x2="1"><stop offset="0" stop-color="#d0d0d0" stop-opacity="0"/><stop offset="0.5" stop-color="#c8c8c8" stop-opacity="0.8"/><stop offset="1" stop-color="#e0e0e0"/></linearGradient></defs><defs><linearGradient id="strk2" gradientUnits="userSpaceOnUse" x1="327" y1="0" x2="563" y2="0"><stop offset="0" stop-color="#9a9a9a" stop-opacity="0"/><stop offset="0.3" stop-color="#8c8c8c" stop-opacity="0.6"/><stop offset="0.6" stop-color="#b8b8b8"/><stop offset="1" stop-color="#dedede"/></linearGradient></defs><path d="M327.1 124.7 L329.2 124.3 L331.6 123.7 L334.1 123.1 L336.9 122.4 L339.9 121.7 L343.0 120.9 L346.2 120.1 L349.6 119.4 L353.0 118.6 L356.5 117.8 L360.0 117.0 L363.6 116.3 L367.1 115.6 L370.7 114.9 L374.1 114.3 L377.6 113.7 L380.9 113.3 L384.1 112.9 L387.1 112.6 L390.0 112.4 L392.8 112.4 L395.5 112.4 L398.2 112.4 L400.8 112.5 L403.4 112.7 L405.9 113.0 L408.4 113.3 L410.9 113.6 L413.3 114.0 L415.7 114.4 L418.1 114.9 L420.5 115.3 L422.9 115.9 L425.3 116.4 L427.6 116.9 L430.0 117.5 L432.5 118.1 L434.9 118.7 L437.3 119.3 L439.8 119.8 L442.3 120.4 L444.8 121.1 L447.3 121.9 L449.9 122.7 L452.4 123.6 L455.0 124.5 L457.6 125.4 L460.1 126.4 L462.7 127.3 L465.2 128.3 L467.8 129.2 L470.3 130.2 L472.9 131.0 L475.4 131.9 L477.9 132.7 L480.3 133.4 L482.7 134.0 L485.1 134.6 L487.5 135.0 L489.8 135.4 L492.1 135.6 L494.4 135.8 L496.6 135.9 L498.8 136.0 L500.9 136.0 L503.0 135.9 L505.1 135.8 L507.2 135.7 L509.3 135.5 L511.3 135.2 L513.3 134.9 L515.3 134.6 L517.3 134.3 L519.2 133.9 L521.2 133.4 L523.1 133.0 L525.0 132.5 L526.9 132.0 L528.8 131.5 L530.6 131.0 L532.5 130.4 L534.4 129.7 L536.3 129.0 L538.2 128.2 L540.1 127.3 L542.0 126.5 L543.8 125.5 L545.6 124.6 L547.4 123.6 L549.2 122.6 L550.9 121.7 L552.6 120.7 L554.3 119.7 L555.9 118.8 L557.4 117.9 L558.9 117.0 L560.4 116.1 L561.8 115.4 L563.1 114.7 L564.4 114.0 L561.6 109.0 L560.3 109.8 L559.0 110.6 L557.6 111.5 L556.1 112.4 L554.7 113.4 L553.1 114.3 L551.6 115.3 L550.0 116.4 L548.4 117.4 L546.7 118.4 L545.0 119.4 L543.3 120.4 L541.6 121.4 L539.9 122.4 L538.1 123.3 L536.4 124.2 L534.6 125.0 L532.9 125.7 L531.1 126.4 L529.4 127.0 L527.6 127.6 L525.8 128.2 L524.0 128.7 L522.1 129.3 L520.3 129.8 L518.4 130.2 L516.5 130.7 L514.6 131.1 L512.7 131.5 L510.8 131.8 L508.9 132.1 L506.9 132.4 L504.9 132.6 L502.9 132.8 L500.8 132.9 L498.8 133.0 L496.6 133.0 L494.5 132.9 L492.4 132.8 L490.2 132.6 L487.9 132.3 L485.7 132.0 L483.3 131.5 L481.0 130.9 L478.6 130.3 L476.1 129.6 L473.6 128.8 L471.1 128.0 L468.6 127.1 L466.0 126.2 L463.4 125.3 L460.8 124.4 L458.2 123.5 L455.6 122.6 L453.0 121.7 L450.4 120.9 L447.9 120.1 L445.3 119.4 L442.7 118.7 L440.2 118.2 L437.7 117.6 L435.2 117.1 L432.8 116.6 L430.4 116.0 L428.0 115.5 L425.6 115.0 L423.2 114.5 L420.8 114.0 L418.3 113.6 L415.9 113.2 L413.5 112.8 L411.0 112.4 L408.5 112.1 L406.0 111.9 L403.5 111.7 L400.9 111.5 L398.2 111.4 L395.5 111.4 L392.8 111.4 L390.0 111.6 L387.1 111.8 L384.0 112.1 L380.8 112.5 L377.4 113.0 L374.0 113.5 L370.5 114.2 L367.0 114.9 L363.5 115.6 L359.9 116.4 L356.4 117.2 L352.9 118.0 L349.4 118.8 L346.1 119.6 L342.9 120.4 L339.8 121.1 L336.8 121.9 L334.0 122.6 L331.4 123.2 L329.1 123.8 L326.9 124.3 Z" fill="url(#strk2)"/><text x="601.5" y="110" font-size="13.2" fill="#e6e6e6" font-weight="bold" textLength="121" lengthAdjust="spacingAndGlyphs">b) Basic-6 Details</text><defs><linearGradient id="bg_btn" x1="0" y1="0" x2="0" y2="1"><stop offset="0" stop-color="#4a4a4a"/><stop offset="1" stop-color="#414141"/></linearGradient></defs><rect x="733.5" y="94.5" width="21" height="21" fill="#414141" stroke="#393939" stroke-width="1" rx="2"/><path d="M738 111 L738 107 L747 98 L751 102 L742 111 Z" fill="none" stroke="#e0e0e0" stroke-width="1.3"/><path d="M745 100 L749 104" fill="none" stroke="#e0e0e0" stroke-width="2.2"/><circle cx="614" cy="133.5" r="7.5" fill="#d6d6d6"/><text x="632" y="138" font-size="12.6" fill="#d0d0d0">Pixel Engine</text><rect x="1347.5" y="96.5" width="148" height="24" fill="#383838" stroke="#363636" stroke-width="1" rx="2.5"/><rect x="1348.5" y="97.5" width="146" height="22" fill="url(#bg_btn)" stroke="#555555" stroke-width="1" rx="2"/><text x="1350" y="113" font-size="12.6" fill="#e0e0e0" textLength="142" lengthAdjust="spacingAndGlyphs">Save New Brush Preset...</text><rect x="1347.5" y="123.5" width="148" height="24" fill="#383838" stroke="#363636" stroke-width="1" rx="2.5"/><rect x="1348.5" y="124.5" width="146" height="22" fill="url(#bg_btn)" stroke="#555555" stroke-width="1" rx="2"/><text x="1421" y="140" font-size="12.6" fill="#8a8a8a" text-anchor="middle">Overwrite Brush</text><rect x="233.5" y="175.5" width="260" height="539" fill="none" stroke="#585858" stroke-width="1" rx="2"/><rect x="243.5" y="185.5" width="20" height="20" fill="#3d3d3d" stroke="#363636" stroke-width="1" rx="2"/><path d="M251 192 L255 196 L251 200" fill="none" stroke="#b0b0b0" stroke-width="1.2"/><text x="271" y="200" font-size="12.6" fill="#d8d8d8">Presets</text><text x="242" y="228.5" font-size="12.6" fill="#d8d8d8">Engine:</text><defs><linearGradient id="cmb2" x1="0" y1="0" x2="0" y2="1"><stop offset="0" stop-color="#4a4a4a"/><stop offset="1" stop-color="#3f3f3f"/></linearGradient></defs><rect x="294.5" y="213.5" width="137" height="21" fill="url(#cmb2)" stroke="#363636" stroke-width="1" rx="2"/><text x="316" y="228.5" font-size="12.6" fill="#d8d8d8">All</text><path d="M417.5 222.5 H424.5 L421 226.0 Z" fill="#b8b8b8"/><rect x="439.5" y="213.5" width="42" height="21" fill="#383838" stroke="#363636" stroke-width="1" rx="2.5"/><rect x="440.5" y="214.5" width="40" height="19" fill="url(#bg_btn)" stroke="#555555" stroke-width="1" rx="2"/><rect x="454.5" y="218.5" width="11" height="10" fill="none" stroke="#d8d8d8" stroke-width="1.1"/><rect x="455" y="221" width="11" height="1" fill="#d8d8d8"/><rect x="458" y="224" width="6" height="1" fill="#d8d8d8"/><rect x="458" y="226" width="6" height="1" fill="#d8d8d8"/><path d="M476 230 H480 L478 232 Z" fill="#c0c0c0"/><rect x="243.5" y="241.5" width="185" height="21" fill="url(#cmb2)" stroke="#363636" stroke-width="1" rx="2"/><text x="247" y="256.5" font-size="12.6" fill="#d8d8d8">Paint</text><path d="M414.5 250.5 H421.5 L418 254.0 Z" fill="#b8b8b8"/><rect x="431.5" y="241.5" width="50" height="21" fill="#383838" stroke="#363636" stroke-width="1" rx="2.5"/><rect x="432.5" y="242.5" width="48" height="19" fill="url(#bg_btn)" stroke="#555555" stroke-width="1" rx="2"/><path d="M438.5 246.5 V257 L442 254 L445.5 257 V246.5 Z" fill="none" stroke="#d8d8d8" stroke-width="1"/><text x="450" y="257" font-size="12.6" fill="#d8d8d8">Tag</text><path d="M476 258 H480 L478 260 Z" fill="#c0c0c0"/><rect x="244" y="264" width="225" height="380" fill="#3a3a3a"/><svg x="244" y="264" width="225" height="380" overflow="hidden"><rect x="0" y="28" width="225" height="1" fill="#414141"/><rect x="0" y="2.0" width="26" height="26" fill="#d6d6d6"/><rect x="0" y="27.0" width="26" height="1" fill="#a8a8a8"/><rect x="25" y="2.0" width="1" height="26.0" fill="#b8b8b8"/><path d="M5 21.0 C9 25.0 17 24.0 25 20.0" fill="none" stroke="#555" stroke-width="2.2" opacity="0.5"/><path d="M25 3.0 L16 12.0" fill="none" stroke="#584050" stroke-width="3"/><path d="M25.5 2.5 L22.5 5.5" fill="none" stroke="#e09020" stroke-width="3"/><path d="M16.5 11.5 L12 16.0" fill="none" stroke="#d8d4e8" stroke-width="3.6"/><path d="M12 16.0 L7.5 20.5" fill="none" stroke="#5a2020" stroke-width="2.4" stroke-linecap="round"/><text x="34" y="19.0" font-size="12.6" fill="#d8d8d8">40</text><text x="62" y="19.0" font-size="12.6" fill="#d8d8d8">b) Basic-5 Size Opacity</text><rect x="0" y="29.25" width="225" height="28" fill="#3e6ca0"/><rect x="0" y="30.25" width="26" height="26" fill="#86b8de"/><rect x="0" y="55.25" width="26" height="1" fill="#a8a8a8"/><rect x="25" y="30.25" width="1" height="26.0" fill="#b8b8b8"/><path d="M5 49.25 C9 53.25 17 52.25 25 48.25" fill="none" stroke="#555" stroke-width="2.2" opacity="0.5"/><path d="M25 31.25 L16 40.25" fill="none" stroke="#3a4a6a" stroke-width="3"/><path d="M25.5 30.75 L22.5 33.75" fill="none" stroke="#e09020" stroke-width="3"/><path d="M16.5 39.75 L12 44.25" fill="none" stroke="#d8d4e8" stroke-width="3.6"/><path d="M12 44.25 L7.5 48.75" fill="none" stroke="#5a2020" stroke-width="2.4" stroke-linecap="round"/><text x="34" y="47.25" font-size="12.6" fill="#a8c4e4">7.5</text><text x="62" y="47.25" font-size="12.6" fill="#a8c4e4">b) Basic-6 Details</text><rect x="0" y="84" width="225" height="1" fill="#414141"/><rect x="0" y="58.5" width="26" height="26" fill="#d6d6d6"/><rect x="0" y="83.5" width="26" height="1" fill="#a8a8a8"/><rect x="25" y="58.5" width="1" height="26.0" fill="#b8b8b8"/><path d="M4 75.5 C8 82.5 14 76.5 18 80.5 C21 82.5 24 80.5 25 79.5" fill="none" stroke="#111" stroke-width="2"/><path d="M25 59.5 L16 68.5" fill="none" stroke="#584050" stroke-width="3"/><path d="M25.5 59.0 L22.5 62.0" fill="none" stroke="#80b030" stroke-width="3"/><path d="M16.5 68.0 L12 72.5" fill="none" stroke="#d8d4e8" stroke-width="3.6"/><path d="M12 72.5 L7.5 77.0" fill="none" stroke="#5a2020" stroke-width="2.4" stroke-linecap="round"/><text x="34" y="75.5" font-size="12.6" fill="#d8d8d8">16</text><text x="62" y="75.5" font-size="12.6" fill="#d8d8d8">f) Bristles-1 Details</text><rect x="0" y="113" width="225" height="1" fill="#414141"/><rect x="0" y="86.75" width="26" height="26" fill="#d6d6d6"/><rect x="0" y="111.75" width="26" height="1" fill="#a8a8a8"/><rect x="25" y="86.75" width="1" height="26.0" fill="#b8b8b8"/><circle cx="23.6" cy="105.1" r="1.4" fill="#111" opacity="0.87"/><circle cx="7.5" cy="103.7" r="1.3" fill="#111" opacity="0.56"/><circle cx="11.0" cy="109.1" r="1.6" fill="#111" opacity="0.56"/><circle cx="4.7" cy="104.9" r="1.6" fill="#111" opacity="0.51"/><circle cx="7.7" cy="103.9" r="0.7" fill="#111" opacity="0.76"/><circle cx="6.9" cy="106.1" r="1.5" fill="#111" opacity="0.86"/><circle cx="11.7" cy="108.3" r="1.2" fill="#111" opacity="0.91"/><circle cx="8.2" cy="105.7" r="1.3" fill="#111" opacity="0.97"/><circle cx="16.0" cy="105.8" r="0.8" fill="#111" opacity="0.64"/><circle cx="7.5" cy="110.1" r="1.7" fill="#111" opacity="0.95"/><circle cx="14.1" cy="107.6" r="0.9" fill="#111" opacity="0.74"/><circle cx="6.1" cy="106.2" r="0.8" fill="#111" opacity="0.55"/><circle cx="22.3" cy="102.6" r="1.6" fill="#111" opacity="0.85"/><circle cx="4.9" cy="106.8" r="1.8" fill="#111" opacity="0.99"/><circle cx="14.8" cy="108.0" r="1.4" fill="#111" opacity="0.65"/><circle cx="14.5" cy="106.8" r="1.0" fill="#111" opacity="0.91"/><circle cx="12.3" cy="108.0" r="0.6" fill="#111" opacity="0.72"/><circle cx="3.9" cy="108.0" r="1.6" fill="#111" opacity="0.77"/><circle cx="14.9" cy="106.9" r="0.8" fill="#111" opacity="0.69"/><circle cx="15.1" cy="107.1" r="1.0" fill="#111" opacity="0.74"/><circle cx="9.9" cy="106.8" r="1.4" fill="#111" opacity="0.66"/><circle cx="17.4" cy="108.3" r="1.2" fill="#111" opacity="0.99"/><circle cx="9.5" cy="109.4" r="0.7" fill="#111" opacity="0.68"/><circle cx="20.2" cy="102.4" r="1.3" fill="#111" opacity="0.94"/><circle cx="22.8" cy="106.7" r="0.9" fill="#111" opacity="0.67"/><circle cx="16.3" cy="102.9" r="0.5" fill="#111" opacity="0.94"/><circle cx="16.2" cy="103.6" r="1.1" fill="#111" opacity="0.64"/><circle cx="21.3" cy="104.1" r="1.4" fill="#111" opacity="0.87"/><circle cx="9.7" cy="104.7" r="1.2" fill="#111" opacity="0.70"/><circle cx="15.5" cy="104.8" r="1.5" fill="#111" opacity="0.71"/><circle cx="5.9" cy="108.7" r="1.7" fill="#111" opacity="0.84"/><circle cx="14.5" cy="108.7" r="1.7" fill="#111" opacity="0.50"/><circle cx="13.2" cy="102.8" r="0.9" fill="#111" opacity="0.62"/><circle cx="12.7" cy="107.5" r="1.6" fill="#111" opacity="0.63"/><circle cx="3.2" cy="110.5" r="1.5" fill="#111" opacity="0.78"/><circle cx="5.4" cy="103.7" r="1.7" fill="#111" opacity="0.76"/><circle cx="21.1" cy="107.6" r="1.5" fill="#111" opacity="0.90"/><circle cx="8.3" cy="104.8" r="1.1" fill="#111" opacity="0.88"/><circle cx="19.7" cy="107.5" r="1.3" fill="#111" opacity="0.74"/><circle cx="7.1" cy="107.9" r="1.3" fill="#111" opacity="0.76"/><path d="M25 87.75 L16 96.75" fill="none" stroke="#584050" stroke-width="3"/><path d="M25.5 87.25 L22.5 90.25" fill="none" stroke="#c0c0c0" stroke-width="3"/><path d="M16.5 96.25 L12 100.75" fill="none" stroke="#d8d4e8" stroke-width="3.6"/><ellipse cx="10" cy="102.25" rx="4.2" ry="3" fill="#d8c890" transform="rotate(-45 10 102.25)"/><text x="34" y="103.75" font-size="12.6" fill="#d8d8d8">40</text><text x="62" y="103.75" font-size="12.6" fill="#d8d8d8">f) Bristles-2 Flat Rough</text><rect x="0" y="141" width="225" height="1" fill="#414141"/><rect x="0" y="115.0" width="26" height="26" fill="#d6d6d6"/><rect x="0" y="140.0" width="26" height="1" fill="#a8a8a8"/><rect x="25" y="115.0" width="1" height="26.0" fill="#b8b8b8"/><path d="M4 131.0 C5 139.0 16 139.0 25 134.0" fill="none" stroke="#111" stroke-width="3.4"/><path d="M25 116.0 L16 125.0" fill="none" stroke="#584050" stroke-width="3"/><path d="M25.5 115.5 L22.5 118.5" fill="none" stroke="#303030" stroke-width="3"/><path d="M16.5 124.5 L12 129.0" fill="none" stroke="#d8d4e8" stroke-width="3.6"/><ellipse cx="10" cy="130.5" rx="3.8" ry="2.8" fill="#404040" transform="rotate(-45 10 130.5)"/><text x="34" y="132.0" font-size="12.6" fill="#d8d8d8">110</text><text x="62" y="132.0" font-size="12.6" fill="#d8d8d8">f) Bristles-3 Large Smooth</text><rect x="0" y="169" width="225" height="1" fill="#414141"/><rect x="0" y="143.25" width="26" height="26" fill="#d6d6d6"/><rect x="0" y="168.25" width="26" height="1" fill="#a8a8a8"/><rect x="25" y="143.25" width="1" height="26.0" fill="#b8b8b8"/><ellipse cx="13" cy="163.25" rx="9" ry="3" fill="#444" opacity="0.5"/><path d="M25 144.25 L16 153.25" fill="none" stroke="#584050" stroke-width="3"/><path d="M25.5 143.75 L22.5 146.75" fill="none" stroke="#70a040" stroke-width="3"/><path d="M16.5 152.75 L12 157.25" fill="none" stroke="#d8d4e8" stroke-width="3.6"/><path d="M12 157.25 L7.5 161.75" fill="none" stroke="#5a2020" stroke-width="2.4" stroke-linecap="round"/><text x="34" y="160.25" font-size="12.6" fill="#d8d8d8">70</text><text x="62" y="160.25" font-size="12.6" fill="#d8d8d8">f) Bristles-4 Glaze</text><rect x="0" y="198" width="225" height="1" fill="#414141"/><rect x="0" y="171.5" width="26" height="26" fill="#d6d6d6"/><rect x="0" y="196.5" width="26" height="1" fill="#a8a8a8"/><rect x="25" y="171.5" width="1" height="26.0" fill="#b8b8b8"/><ellipse cx="11" cy="193.5" rx="7" ry="2" fill="#111"/><path d="M25 172.5 L16 181.5" fill="none" stroke="#584050" stroke-width="3"/><path d="M25.5 172.0 L22.5 175.0" fill="none" stroke="#c8c8c8" stroke-width="3"/><path d="M16.5 181.0 L12 185.5" fill="none" stroke="#d8d4e8" stroke-width="3.6"/><ellipse cx="10" cy="187.0" rx="4.2" ry="3" fill="#d8c890" transform="rotate(-45 10 187.0)"/><text x="34" y="188.5" font-size="12.6" fill="#d8d8d8">30</text><text x="62" y="188.5" font-size="12.6" fill="#d8d8d8">f) Bristles-5 Flat</text><rect x="0" y="226" width="225" height="1" fill="#414141"/><rect x="0" y="199.75" width="26" height="26" fill="#d6d6d6"/><rect x="0" y="224.75" width="26" height="1" fill="#a8a8a8"/><rect x="25" y="199.75" width="1" height="26.0" fill="#b8b8b8"/><circle cx="8.2" cy="220.2" r="1.8" fill="#111" opacity="0.83"/><circle cx="13.1" cy="217.9" r="0.7" fill="#111" opacity="1.00"/><circle cx="18.8" cy="217.0" r="1.3" fill="#111" opacity="0.85"/><circle cx="22.0" cy="216.9" r="0.9" fill="#111" opacity="0.59"/><circle cx="15.4" cy="222.0" r="1.5" fill="#111" opacity="0.57"/><circle cx="10.8" cy="216.4" r="0.7" fill="#111" opacity="0.75"/><circle cx="6.2" cy="218.1" r="0.8" fill="#111" opacity="0.71"/><circle cx="21.0" cy="216.7" r="1.3" fill="#111" opacity="0.70"/><circle cx="9.1" cy="218.1" r="1.5" fill="#111" opacity="0.92"/><circle cx="18.4" cy="221.5" r="1.4" fill="#111" opacity="0.65"/><circle cx="7.9" cy="220.1" r="1.3" fill="#111" opacity="0.89"/><circle cx="22.0" cy="220.6" r="1.8" fill="#111" opacity="0.84"/><circle cx="17.3" cy="221.0" r="1.1" fill="#111" opacity="0.90"/><circle cx="21.4" cy="218.6" r="0.9" fill="#111" opacity="0.69"/><circle cx="15.9" cy="219.4" r="1.1" fill="#111" opacity="0.69"/><circle cx="18.5" cy="220.1" r="1.7" fill="#111" opacity="0.98"/><circle cx="3.3" cy="219.3" r="1.5" fill="#111" opacity="0.77"/><circle cx="16.0" cy="217.3" r="1.0" fill="#111" opacity="0.93"/><circle cx="17.1" cy="221.5" r="1.7" fill="#111" opacity="0.96"/><circle cx="21.2" cy="221.5" r="1.7" fill="#111" opacity="0.96"/><circle cx="11.7" cy="218.7" r="1.1" fill="#111" opacity="0.88"/><circle cx="23.5" cy="219.6" r="1.1" fill="#111" opacity="0.54"/><circle cx="5.8" cy="216.8" r="0.7" fill="#111" opacity="0.50"/><circle cx="11.4" cy="218.0" r="1.7" fill="#111" opacity="0.58"/><circle cx="4.9" cy="222.6" r="1.7" fill="#111" opacity="0.76"/><circle cx="14.3" cy="218.0" r="1.0" fill="#111" opacity="0.64"/><circle cx="5.1" cy="223.2" r="1.6" fill="#111" opacity="0.93"/><circle cx="6.1" cy="220.7" r="0.6" fill="#111" opacity="0.86"/><circle cx="4.5" cy="220.7" r="0.7" fill="#111" opacity="0.99"/><circle cx="22.2" cy="218.0" r="1.7" fill="#111" opacity="0.89"/><circle cx="6.7" cy="222.2" r="1.6" fill="#111" opacity="0.63"/><circle cx="17.1" cy="217.5" r="0.5" fill="#111" opacity="0.73"/><circle cx="5.8" cy="222.0" r="1.4" fill="#111" opacity="0.62"/><circle cx="11.5" cy="216.3" r="1.0" fill="#111" opacity="0.80"/><circle cx="20.4" cy="221.9" r="1.3" fill="#111" opacity="0.72"/><circle cx="21.4" cy="219.1" r="1.6" fill="#111" opacity="0.68"/><circle cx="21.7" cy="216.4" r="1.0" fill="#111" opacity="0.61"/><circle cx="10.9" cy="220.2" r="1.7" fill="#111" opacity="0.52"/><circle cx="15.2" cy="217.1" r="1.6" fill="#111" opacity="0.87"/><circle cx="23.3" cy="221.6" r="1.3" fill="#111" opacity="0.63"/><path d="M25 200.75 L16 209.75" fill="none" stroke="#584050" stroke-width="3"/><path d="M25.5 200.25 L22.5 203.25" fill="none" stroke="#d0c0f0" stroke-width="3"/><path d="M16.5 209.25 L12 213.75" fill="none" stroke="#d8d4e8" stroke-width="3.6"/><ellipse cx="10" cy="215.25" rx="4.2" ry="3" fill="#d8c890" transform="rotate(-45 10 215.25)"/><text x="34" y="216.75" font-size="12.6" fill="#d8d8d8">130</text><text x="62" y="216.75" font-size="12.6" fill="#d8d8d8">g) Dry Bristles</text><rect x="0" y="254" width="225" height="1" fill="#414141"/><rect x="0" y="228.0" width="26" height="26" fill="#d6d6d6"/><rect x="0" y="253.0" width="26" height="1" fill="#a8a8a8"/><rect x="25" y="228.0" width="1" height="26.0" fill="#b8b8b8"/><circle cx="5.7" cy="250.3" r="1.6" fill="#111" opacity="0.69"/><circle cx="8.8" cy="245.7" r="0.6" fill="#111" opacity="0.61"/><circle cx="7.2" cy="250.4" r="0.7" fill="#111" opacity="0.60"/><circle cx="22.5" cy="249.6" r="0.6" fill="#111" opacity="0.66"/><circle cx="23.8" cy="245.8" r="1.3" fill="#111" opacity="0.85"/><circle cx="16.6" cy="244.1" r="1.4" fill="#111" opacity="0.91"/><circle cx="12.4" cy="246.4" r="1.4" fill="#111" opacity="0.99"/><circle cx="22.8" cy="244.6" r="1.5" fill="#111" opacity="0.74"/><circle cx="23.7" cy="249.9" r="1.1" fill="#111" opacity="0.95"/><circle cx="21.6" cy="244.1" r="1.0" fill="#111" opacity="0.97"/><circle cx="7.9" cy="247.4" r="1.3" fill="#111" opacity="0.68"/><circle cx="19.5" cy="244.7" r="1.3" fill="#111" opacity="0.78"/><circle cx="3.6" cy="250.3" r="1.5" fill="#111" opacity="0.93"/><circle cx="7.0" cy="248.2" r="0.7" fill="#111" opacity="0.87"/><circle cx="15.9" cy="250.0" r="0.7" fill="#111" opacity="0.63"/><circle cx="4.5" cy="251.1" r="1.3" fill="#111" opacity="0.57"/><circle cx="18.5" cy="246.6" r="1.0" fill="#111" opacity="0.89"/><circle cx="18.4" cy="246.9" r="0.9" fill="#111" opacity="0.69"/><circle cx="11.2" cy="245.4" r="0.7" fill="#111" opacity="0.78"/><circle cx="23.4" cy="247.2" r="1.0" fill="#111" opacity="0.52"/><circle cx="22.3" cy="245.4" r="0.9" fill="#111" opacity="0.86"/><circle cx="21.5" cy="244.1" r="0.6" fill="#111" opacity="0.61"/><circle cx="23.9" cy="246.7" r="0.6" fill="#111" opacity="0.83"/><circle cx="13.5" cy="244.7" r="0.6" fill="#111" opacity="0.69"/><circle cx="23.3" cy="246.1" r="1.8" fill="#111" opacity="0.69"/><circle cx="9.8" cy="244.9" r="1.3" fill="#111" opacity="0.58"/><circle cx="22.9" cy="247.5" r="0.5" fill="#111" opacity="0.81"/><circle cx="12.9" cy="248.6" r="1.3" fill="#111" opacity="0.56"/><circle cx="13.1" cy="248.4" r="0.6" fill="#111" opacity="0.94"/><circle cx="18.0" cy="244.9" r="0.6" fill="#111" opacity="0.70"/><circle cx="16.2" cy="248.1" r="0.7" fill="#111" opacity="0.80"/><circle cx="14.6" cy="245.0" r="1.2" fill="#111" opacity="0.81"/><circle cx="18.3" cy="244.3" r="0.6" fill="#111" opacity="0.85"/><circle cx="23.7" cy="247.0" r="1.7" fill="#111" opacity="0.69"/><circle cx="6.4" cy="249.1" r="0.9" fill="#111" opacity="0.93"/><circle cx="18.7" cy="243.9" r="0.9" fill="#111" opacity="0.90"/><circle cx="4.1" cy="246.2" r="0.5" fill="#111" opacity="0.85"/><circle cx="23.3" cy="248.1" r="1.7" fill="#111" opacity="0.60"/><circle cx="20.0" cy="250.3" r="1.6" fill="#111" opacity="0.61"/><circle cx="9.2" cy="250.8" r="1.4" fill="#111" opacity="0.70"/><path d="M25 229.0 L16 238.0" fill="none" stroke="#584050" stroke-width="3"/><path d="M25.5 228.5 L22.5 231.5" fill="none" stroke="#c07030" stroke-width="3"/><path d="M16.5 237.5 L12 242.0" fill="none" stroke="#d8d4e8" stroke-width="3.6"/><ellipse cx="10" cy="243.5" rx="4.2" ry="3" fill="#d8c890" transform="rotate(-45 10 243.5)"/><text x="34" y="245.0" font-size="12.6" fill="#d8d8d8">120</text><text x="62" y="245.0" font-size="12.6" fill="#d8d8d8">g) Dry Bristles Eroded</text><rect x="0" y="282" width="225" height="1" fill="#414141"/><rect x="0" y="256.25" width="26" height="26" fill="#d6d6d6"/><rect x="0" y="281.25" width="26" height="1" fill="#a8a8a8"/><rect x="25" y="256.25" width="1" height="26.0" fill="#b8b8b8"/><circle cx="8.9" cy="275.8" r="1.2" fill="#111" opacity="0.55"/><circle cx="13.5" cy="278.9" r="1.2" fill="#111" opacity="0.76"/><circle cx="19.6" cy="274.8" r="0.9" fill="#111" opacity="0.92"/><circle cx="6.5" cy="279.0" r="1.6" fill="#111" opacity="0.77"/><circle cx="13.8" cy="272.6" r="0.7" fill="#111" opacity="0.89"/><circle cx="18.3" cy="276.1" r="0.7" fill="#111" opacity="0.86"/><circle cx="23.8" cy="277.5" r="1.4" fill="#111" opacity="0.72"/><circle cx="11.9" cy="273.4" r="0.6" fill="#111" opacity="0.98"/><circle cx="11.3" cy="275.1" r="1.1" fill="#111" opacity="0.99"/><circle cx="22.2" cy="276.3" r="1.5" fill="#111" opacity="0.76"/><circle cx="16.6" cy="277.5" r="1.4" fill="#111" opacity="0.52"/><circle cx="12.8" cy="276.3" r="1.4" fill="#111" opacity="0.97"/><circle cx="19.4" cy="274.6" r="1.1" fill="#111" opacity="0.89"/><circle cx="18.9" cy="274.3" r="1.0" fill="#111" opacity="0.81"/><circle cx="13.4" cy="276.9" r="1.6" fill="#111" opacity="0.71"/><circle cx="15.2" cy="273.4" r="1.6" fill="#111" opacity="0.85"/><circle cx="15.7" cy="274.4" r="0.6" fill="#111" opacity="0.62"/><circle cx="8.5" cy="277.9" r="1.2" fill="#111" opacity="0.93"/><circle cx="22.5" cy="273.3" r="0.7" fill="#111" opacity="0.86"/><circle cx="12.0" cy="278.1" r="1.1" fill="#111" opacity="0.61"/><circle cx="22.8" cy="276.6" r="1.5" fill="#111" opacity="0.85"/><circle cx="23.0" cy="277.5" r="0.6" fill="#111" opacity="0.54"/><circle cx="3.9" cy="278.1" r="1.1" fill="#111" opacity="0.85"/><circle cx="5.0" cy="274.1" r="1.6" fill="#111" opacity="0.81"/><circle cx="6.2" cy="273.6" r="1.5" fill="#111" opacity="0.92"/><circle cx="5.4" cy="279.7" r="0.7" fill="#111" opacity="0.70"/><circle cx="16.1" cy="277.6" r="1.6" fill="#111" opacity="0.51"/><circle cx="8.3" cy="273.6" r="0.6" fill="#111" opacity="0.84"/><circle cx="6.0" cy="275.7" r="1.4" fill="#111" opacity="0.89"/><circle cx="14.3" cy="276.9" r="1.3" fill="#111" opacity="0.61"/><circle cx="7.7" cy="279.4" r="0.8" fill="#111" opacity="0.95"/><circle cx="4.1" cy="275.1" r="1.4" fill="#111" opacity="0.61"/><circle cx="23.9" cy="275.7" r="1.6" fill="#111" opacity="0.83"/><circle cx="21.0" cy="272.5" r="1.0" fill="#111" opacity="0.62"/><circle cx="11.0" cy="273.2" r="0.7" fill="#111" opacity="0.75"/><circle cx="22.9" cy="275.9" r="1.3" fill="#111" opacity="0.96"/><circle cx="15.2" cy="276.0" r="1.3" fill="#111" opacity="0.76"/><circle cx="6.4" cy="273.4" r="1.6" fill="#111" opacity="0.73"/><circle cx="19.7" cy="272.0" r="1.2" fill="#111" opacity="0.96"/><circle cx="3.3" cy="279.8" r="1.0" fill="#111" opacity="0.76"/><path d="M25 257.25 L16 266.25" fill="none" stroke="#584050" stroke-width="3"/><path d="M25.5 256.75 L22.5 259.75" fill="none" stroke="#d0c0f0" stroke-width="3"/><path d="M16.5 265.75 L12 270.25" fill="none" stroke="#d8d4e8" stroke-width="3.6"/><ellipse cx="10" cy="271.75" rx="4.2" ry="3" fill="#d8c890" transform="rotate(-45 10 271.75)"/><text x="34" y="273.25" font-size="12.6" fill="#d8d8d8">70</text><text x="62" y="273.25" font-size="12.6" fill="#d8d8d8">g) Dry Brushing</text><rect x="0" y="310" width="225" height="1" fill="#414141"/><rect x="0" y="284.5" width="26" height="26" fill="#d6d6d6"/><rect x="0" y="309.5" width="26" height="1" fill="#a8a8a8"/><rect x="25" y="284.5" width="1" height="26.0" fill="#b8b8b8"/><circle cx="22.6" cy="302.4" r="1.6" fill="#111" opacity="0.62"/><circle cx="13.1" cy="302.4" r="1.2" fill="#111" opacity="0.54"/><circle cx="11.8" cy="302.8" r="0.6" fill="#111" opacity="0.91"/><circle cx="22.2" cy="300.8" r="1.3" fill="#111" opacity="0.76"/><circle cx="11.9" cy="304.7" r="1.4" fill="#111" opacity="0.64"/><circle cx="10.6" cy="304.2" r="1.8" fill="#111" opacity="0.97"/><circle cx="19.3" cy="303.2" r="1.7" fill="#111" opacity="0.99"/><circle cx="21.6" cy="301.1" r="1.0" fill="#111" opacity="0.61"/><circle cx="12.5" cy="306.5" r="1.1" fill="#111" opacity="0.66"/><circle cx="6.5" cy="302.0" r="1.6" fill="#111" opacity="0.98"/><circle cx="21.7" cy="299.8" r="0.8" fill="#111" opacity="0.57"/><circle cx="12.7" cy="301.9" r="1.1" fill="#111" opacity="0.73"/><circle cx="16.3" cy="303.8" r="1.2" fill="#111" opacity="0.52"/><circle cx="22.8" cy="302.7" r="1.6" fill="#111" opacity="0.66"/><circle cx="4.9" cy="308.0" r="1.1" fill="#111" opacity="0.58"/><circle cx="23.2" cy="306.1" r="0.6" fill="#111" opacity="0.98"/><circle cx="5.8" cy="301.9" r="0.7" fill="#111" opacity="0.94"/><circle cx="15.7" cy="304.1" r="1.4" fill="#111" opacity="0.65"/><circle cx="4.3" cy="301.7" r="0.8" fill="#111" opacity="0.79"/><circle cx="4.5" cy="301.5" r="0.8" fill="#111" opacity="0.51"/><circle cx="4.2" cy="302.1" r="0.7" fill="#111" opacity="0.67"/><circle cx="20.8" cy="304.5" r="0.5" fill="#111" opacity="0.54"/><circle cx="10.1" cy="303.9" r="1.1" fill="#111" opacity="0.77"/><circle cx="18.2" cy="304.5" r="0.8" fill="#111" opacity="0.64"/><circle cx="23.9" cy="303.3" r="1.7" fill="#111" opacity="0.96"/><circle cx="20.0" cy="304.3" r="1.5" fill="#111" opacity="0.64"/><circle cx="7.3" cy="303.6" r="0.7" fill="#111" opacity="0.59"/><circle cx="5.3" cy="302.3" r="0.5" fill="#111" opacity="0.57"/><circle cx="18.4" cy="300.4" r="1.4" fill="#111" opacity="0.85"/><circle cx="6.5" cy="304.3" r="1.3" fill="#111" opacity="0.97"/><circle cx="15.8" cy="301.2" r="0.6" fill="#111" opacity="0.59"/><circle cx="5.9" cy="306.7" r="1.6" fill="#111" opacity="0.55"/><circle cx="19.2" cy="306.3" r="0.8" fill="#111" opacity="0.75"/><circle cx="7.9" cy="303.8" r="1.5" fill="#111" opacity="0.60"/><circle cx="13.6" cy="304.8" r="1.6" fill="#111" opacity="0.98"/><circle cx="22.0" cy="302.6" r="1.0" fill="#111" opacity="0.95"/><circle cx="21.1" cy="305.5" r="1.3" fill="#111" opacity="0.98"/><circle cx="5.8" cy="302.3" r="1.5" fill="#111" opacity="0.64"/><circle cx="16.3" cy="304.3" r="1.3" fill="#111" opacity="0.63"/><circle cx="23.2" cy="303.6" r="0.5" fill="#111" opacity="0.66"/><path d="M25 285.5 L16 294.5" fill="none" stroke="#584050" stroke-width="3"/><path d="M25.5 285.0 L22.5 288.0" fill="none" stroke="#50a060" stroke-width="3"/><path d="M16.5 294.0 L12 298.5" fill="none" stroke="#d8d4e8" stroke-width="3.6"/><ellipse cx="10" cy="300.0" rx="4.2" ry="3" fill="#d8c890" transform="rotate(-45 10 300.0)"/><text x="34" y="301.5" font-size="12.6" fill="#d8d8d8">110</text><text x="62" y="301.5" font-size="12.6" fill="#d8d8d8">g) Dry Textured Creases</text><rect x="0" y="339" width="225" height="1" fill="#414141"/><rect x="0" y="312.75" width="26" height="26" fill="#d6d6d6"/><rect x="0" y="337.75" width="26" height="1" fill="#a8a8a8"/><rect x="25" y="312.75" width="1" height="26.0" fill="#b8b8b8"/><ellipse cx="9" cy="332.75" rx="7" ry="3" fill="#9060e0" opacity="0.6"/><circle cx="5" cy="317.75" r="1.3" fill="#40a0f0"/><path d="M25 313.75 L16 322.75" fill="none" stroke="#584050" stroke-width="3"/><path d="M25.5 313.25 L22.5 316.25" fill="none" stroke="#505050" stroke-width="3"/><path d="M16.5 322.25 L12 326.75" fill="none" stroke="#d8d4e8" stroke-width="3.6"/><ellipse cx="10" cy="328.25" rx="4.2" ry="2.6" fill="#8050d0" transform="rotate(-45 10 328.25)"/><text x="34" y="329.75" font-size="12.6" fill="#d8d8d8">90</text><text x="62" y="329.75" font-size="12.6" fill="#d8d8d8">i) Wet Bristles</text><rect x="0" y="367" width="225" height="1" fill="#414141"/><rect x="0" y="341.0" width="26" height="26" fill="#d6d6d6"/><rect x="0" y="366.0" width="26" height="1" fill="#a8a8a8"/><rect x="25" y="341.0" width="1" height="26.0" fill="#b8b8b8"/><ellipse cx="9" cy="361.0" rx="7" ry="3" fill="#9060e0" opacity="0.6"/><circle cx="5" cy="346.0" r="1.3" fill="#40a0f0"/><path d="M25 342.0 L16 351.0" fill="none" stroke="#584050" stroke-width="3"/><path d="M25.5 341.5 L22.5 344.5" fill="none" stroke="#805030" stroke-width="3"/><path d="M16.5 350.5 L12 355.0" fill="none" stroke="#d8d4e8" stroke-width="3.6"/><ellipse cx="10" cy="356.5" rx="4.2" ry="2.6" fill="#8050d0" transform="rotate(-45 10 356.5)"/><text x="34" y="358.0" font-size="12.6" fill="#d8d8d8">80</text><text x="62" y="358.0" font-size="12.6" fill="#d8d8d8">i) Wet Bristles Rough</text><rect x="0" y="395" width="225" height="1" fill="#414141"/><rect x="0" y="369.25" width="26" height="26" fill="#d6d6d6"/><rect x="0" y="394.25" width="26" height="1" fill="#a8a8a8"/><rect x="25" y="369.25" width="1" height="26.0" fill="#b8b8b8"/><circle cx="3.6" cy="392.0" r="1.4" fill="#111" opacity="0.51"/><circle cx="14.5" cy="386.8" r="1.6" fill="#111" opacity="0.93"/><circle cx="9.3" cy="389.7" r="1.1" fill="#111" opacity="0.64"/><circle cx="12.1" cy="388.0" r="1.1" fill="#111" opacity="0.98"/><circle cx="18.3" cy="385.1" r="1.0" fill="#111" opacity="0.98"/><circle cx="19.0" cy="389.0" r="1.3" fill="#111" opacity="0.84"/><circle cx="6.5" cy="388.6" r="0.9" fill="#111" opacity="0.60"/><circle cx="17.5" cy="385.1" r="0.7" fill="#111" opacity="0.85"/><circle cx="21.8" cy="386.6" r="1.6" fill="#111" opacity="0.92"/><circle cx="6.2" cy="392.2" r="0.7" fill="#111" opacity="0.74"/><circle cx="4.8" cy="386.5" r="1.4" fill="#111" opacity="0.92"/><circle cx="5.4" cy="388.1" r="1.3" fill="#111" opacity="0.80"/><circle cx="5.9" cy="390.6" r="0.6" fill="#111" opacity="0.97"/><circle cx="17.0" cy="389.5" r="1.7" fill="#111" opacity="0.62"/><circle cx="7.2" cy="390.1" r="1.7" fill="#111" opacity="0.97"/><circle cx="19.7" cy="388.9" r="1.0" fill="#111" opacity="0.89"/><circle cx="16.4" cy="391.1" r="1.5" fill="#111" opacity="0.75"/><circle cx="16.6" cy="386.3" r="0.9" fill="#111" opacity="0.88"/><circle cx="17.8" cy="385.0" r="0.8" fill="#111" opacity="0.71"/><circle cx="15.0" cy="387.5" r="1.0" fill="#111" opacity="0.97"/><circle cx="11.1" cy="388.5" r="1.7" fill="#111" opacity="0.66"/><circle cx="14.1" cy="386.3" r="1.6" fill="#111" opacity="0.91"/><circle cx="8.0" cy="390.0" r="0.8" fill="#111" opacity="0.92"/><circle cx="13.4" cy="387.2" r="1.8" fill="#111" opacity="0.74"/><circle cx="14.8" cy="391.8" r="0.9" fill="#111" opacity="0.73"/><circle cx="22.0" cy="387.0" r="1.6" fill="#111" opacity="0.81"/><circle cx="23.0" cy="388.5" r="1.7" fill="#111" opacity="0.74"/><circle cx="7.7" cy="388.1" r="1.1" fill="#111" opacity="0.81"/><circle cx="12.6" cy="387.8" r="0.8" fill="#111" opacity="0.75"/><circle cx="17.5" cy="389.3" r="0.5" fill="#111" opacity="0.63"/><circle cx="17.2" cy="388.3" r="0.9" fill="#111" opacity="0.79"/><circle cx="3.9" cy="389.5" r="1.7" fill="#111" opacity="0.68"/><circle cx="6.3" cy="390.6" r="1.3" fill="#111" opacity="0.67"/><circle cx="8.2" cy="385.6" r="0.6" fill="#111" opacity="0.90"/><circle cx="11.7" cy="391.3" r="1.8" fill="#111" opacity="0.87"/><circle cx="10.5" cy="386.2" r="1.7" fill="#111" opacity="0.59"/><circle cx="6.0" cy="388.7" r="0.9" fill="#111" opacity="0.64"/><circle cx="6.7" cy="386.1" r="0.5" fill="#111" opacity="0.96"/><circle cx="5.0" cy="388.8" r="1.3" fill="#111" opacity="0.78"/><circle cx="21.3" cy="391.3" r="1.3" fill="#111" opacity="0.71"/><path d="M25 370.25 L16 379.25" fill="none" stroke="#584050" stroke-width="3"/><path d="M25.5 369.75 L22.5 372.75" fill="none" stroke="#905030" stroke-width="3"/><path d="M16.5 378.75 L12 383.25" fill="none" stroke="#d8d4e8" stroke-width="3.6"/><path d="M12 383.25 L7.5 387.75" fill="none" stroke="#5a2020" stroke-width="2.4" stroke-linecap="round"/><text x="34" y="386.25" font-size="12.6" fill="#d8d8d8">75</text><text x="62" y="386.25" font-size="12.6" fill="#d8d8d8">i) Wet Knife</text></svg><rect x="469" y="264" width="13" height="380" fill="#3d3d3d"/><rect x="469.5" y="265.5" width="12" height="12" fill="#474747" stroke="#575757" stroke-width="1" rx="1.5"/><path d="M472.5 272 L475.5 268.5 L478.5 272 Z" fill="#c8c8c8"/><rect x="469.5" y="278.5" width="12" height="167" fill="#474747" stroke="#575757" stroke-width="1" rx="1.5"/><rect x="469.5" y="631.5" width="12" height="12" fill="#474747" stroke="#575757" stroke-width="1" rx="1.5"/><path d="M472.5 636 H478.5 L475.5 639.5 Z" fill="#c8c8c8"/><rect x="242.5" y="645.5" width="214" height="20" fill="#383838" stroke="#3a3a3a" stroke-width="1" rx="2"/><text x="245" y="660" font-size="12.6" fill="#8c8c8c">Search</text><rect x="458.5" y="645.5" width="23" height="20" fill="#383838" stroke="#363636" stroke-width="1" rx="2.5"/><rect x="459.5" y="646.5" width="21" height="18" fill="url(#bg_btn)" stroke="#555555" stroke-width="1" rx="2"/><path d="M464.5 649.5 H474 L476.5 652 V661.5 H464.5 Z" fill="none" stroke="#d8d8d8" stroke-width="1.1"/><rect x="467" y="650" width="6" height="4" fill="none" stroke="#d8d8d8" stroke-width="1"/><rect x="466.5" y="656.5" width="8" height="5" fill="none" stroke="#d8d8d8" stroke-width="1"/><rect x="243.5" y="678.5" width="27" height="26" fill="#383838" stroke="#363636" stroke-width="1" rx="2.5"/><rect x="244.5" y="679.5" width="25" height="24" fill="url(#bg_btn)" stroke="#555555" stroke-width="1" rx="2"/><rect x="249.5" y="684.5" width="13" height="13" fill="none" stroke="#f0f0f0" stroke-width="1.5"/><path d="M256 687 V695 M252 691 H260" fill="none" stroke="#f0f0f0" stroke-width="1.6"/><path d="M263 699 H267 L265 701 Z" fill="#aaaaaa"/><rect x="452.5" y="678.5" width="30" height="26" fill="#383838" stroke="#363636" stroke-width="1" rx="2.5"/><rect x="453.5" y="679.5" width="28" height="24" fill="url(#bg_btn)" stroke="#555555" stroke-width="1" rx="2"/><path d="M461 686 H473 L472 698 H462 Z" fill="#d8d8d8"/><rect x="461" y="684" width="12" height="2" fill="#d8d8d8"/><rect x="465" y="682" width="4" height="2" fill="#d8d8d8"/><rect x="501.5" y="175.5" width="739" height="539" fill="none" stroke="#585858" stroke-width="1" rx="2"/><rect x="522.5" y="193.5" width="130" height="456" fill="#3a3a3a" stroke="#8a8a8a" stroke-width="1"/><svg x="523" y="194" width="117" height="455" overflow="hidden"><rect x="0" y="0.9000000000000004" width="117" height="17" fill="#393939"/><rect x="0" y="18" width="117" height="1" fill="#424242"/><path d="M5 5.4 H13 L9 13.4 Z" fill="#e8e8e8"/><text x="58" y="14.4" font-size="12.6" fill="#d8d8d8" text-anchor="middle">General</text><text x="3.5" y="31.28" font-size="12.6" fill="#d8d8d8">Brush Tip</text><rect x="105" y="24.28" width="8" height="6" fill="#4a4a4a"/><path d="M107 24.28 V21.28 C107 19.28 112 19.28 112 21.28" fill="none" stroke="#4a4a4a" stroke-width="1"/><text x="3.5" y="48.16" font-size="12.6" fill="#d8d8d8">Blending Mode</text><rect x="105" y="41.16" width="8" height="6" fill="#4a4a4a"/><path d="M107 41.16 V38.16 C107 36.16 112 36.16 112 38.16" fill="none" stroke="#4a4a4a" stroke-width="1"/><text x="3.5" y="65.03999999999999" font-size="12.6" fill="#d8d8d8">Opacity</text><rect x="105" y="58.04" width="8" height="6" fill="#4a4a4a"/><path d="M107 58.04 V55.04 C107 53.04 112 53.04 112 55.04" fill="none" stroke="#4a4a4a" stroke-width="1"/><text x="3.5" y="81.92" font-size="12.6" fill="#d8d8d8">Flow</text><rect x="105" y="74.92" width="8" height="6" fill="#4a4a4a"/><path d="M107 74.92 V71.92 C107 69.92 112 69.92 112 71.92" fill="none" stroke="#4a4a4a" stroke-width="1"/><rect x="3.5" y="87.8" width="12" height="12" fill="#3a3a3a" stroke="#8c8c8c" stroke-width="1"/><path d="M6 93.8 L8.5 97.3 L13 89.8" fill="none" stroke="#e8e8e8" stroke-width="1.4"/><text x="22" y="98.8" font-size="12.6" fill="#d8d8d8">Size</text><rect x="105" y="91.8" width="8" height="6" fill="#4a4a4a"/><path d="M107 91.8 V88.8 C107 86.8 112 86.8 112 88.8" fill="none" stroke="#4a4a4a" stroke-width="1"/><rect x="3.5" y="104.68" width="12" height="12" fill="#3a3a3a" stroke="#8c8c8c" stroke-width="1"/><text x="22" y="115.68" font-size="12.6" fill="#d8d8d8">Ratio</text><rect x="105" y="108.68" width="8" height="6" fill="#4a4a4a"/><path d="M107 108.68 V105.68 C107 103.68 112 103.68 112 105.68" fill="none" stroke="#4a4a4a" stroke-width="1"/><rect x="3.5" y="121.56" width="12" height="12" fill="#3a3a3a" stroke="#8c8c8c" stroke-width="1"/><text x="22" y="132.56" font-size="12.6" fill="#d8d8d8">Spacing</text><rect x="105" y="125.56" width="8" height="6" fill="#4a4a4a"/><path d="M107 125.56 V122.56 C107 120.56 112 120.56 112 122.56" fill="none" stroke="#4a4a4a" stroke-width="1"/><rect x="3.5" y="138.44" width="12" height="12" fill="#3a3a3a" stroke="#8c8c8c" stroke-width="1"/><text x="22" y="149.44" font-size="12.6" fill="#d8d8d8">Mirror</text><rect x="105" y="142.44" width="8" height="6" fill="#4a4a4a"/><path d="M107 142.44 V139.44 C107 137.44 112 137.44 112 139.44" fill="none" stroke="#4a4a4a" stroke-width="1"/><rect x="3.5" y="155.32" width="12" height="12" fill="#3a3a3a" stroke="#8c8c8c" stroke-width="1"/><text x="22" y="166.32" font-size="12.6" fill="#d8d8d8">Softness</text><rect x="105" y="159.32" width="8" height="6" fill="#4a4a4a"/><path d="M107 159.32 V156.32 C107 154.32 112 154.32 112 156.32" fill="none" stroke="#4a4a4a" stroke-width="1"/><rect x="3.5" y="172.2" width="12" height="12" fill="#3a3a3a" stroke="#8c8c8c" stroke-width="1"/><text x="22" y="183.2" font-size="12.6" fill="#d8d8d8">Sharpness</text><rect x="105" y="176.2" width="8" height="6" fill="#4a4a4a"/><path d="M107 176.2 V173.2 C107 171.2 112 171.2 112 173.2" fill="none" stroke="#4a4a4a" stroke-width="1"/><rect x="3.5" y="189.07999999999998" width="12" height="12" fill="#3a3a3a" stroke="#8c8c8c" stroke-width="1"/><path d="M6 195.07999999999998 L8.5 198.57999999999998 L13 191.07999999999998" fill="none" stroke="#e8e8e8" stroke-width="1.4"/><text x="22" y="200.07999999999998" font-size="12.6" fill="#d8d8d8">Rotation</text><rect x="105" y="193.07999999999998" width="8" height="6" fill="#4a4a4a"/><path d="M107 193.07999999999998 V190.07999999999998 C107 188.07999999999998 112 188.07999999999998 112 190.07999999999998" fill="none" stroke="#4a4a4a" stroke-width="1"/><rect x="3.5" y="205.96" width="12" height="12" fill="#3a3a3a" stroke="#8c8c8c" stroke-width="1"/><text x="22" y="216.96" font-size="12.6" fill="#d8d8d8">Scatter</text><rect x="105" y="209.96" width="8" height="6" fill="#4a4a4a"/><path d="M107 209.96 V206.96 C107 204.96 112 204.96 112 206.96" fill="none" stroke="#4a4a4a" stroke-width="1"/><rect x="0" y="220.34" width="117" height="17" fill="#393939"/><rect x="0" y="237" width="117" height="1" fill="#424242"/><path d="M5 224.84 H13 L9 232.84 Z" fill="#e8e8e8"/><text x="58" y="233.84" font-size="12.6" fill="#d8d8d8" text-anchor="middle">Color</text><text x="3.5" y="250.72" font-size="12.6" fill="#d8d8d8">Source</text><rect x="105" y="243.72" width="8" height="6" fill="#4a4a4a"/><path d="M107 243.72 V240.72 C107 238.72 112 238.72 112 240.72" fill="none" stroke="#4a4a4a" stroke-width="1"/><rect x="3.5" y="256.59999999999997" width="12" height="12" fill="#3a3a3a" stroke="#8c8c8c" stroke-width="1"/><text x="22" y="267.59999999999997" font-size="12.6" fill="#d8d8d8">Darken</text><rect x="105" y="260.59999999999997" width="8" height="6" fill="#4a4a4a"/><path d="M107 260.59999999999997 V257.59999999999997 C107 255.59999999999997 112 255.59999999999997 112 257.59999999999997" fill="none" stroke="#4a4a4a" stroke-width="1"/><rect x="3.5" y="273.47999999999996" width="12" height="12" fill="#3a3a3a" stroke="#8c8c8c" stroke-width="1"/><text x="22" y="284.47999999999996" font-size="12.6" fill="#d8d8d8">Mix</text><rect x="105" y="277.47999999999996" width="8" height="6" fill="#4a4a4a"/><path d="M107 277.47999999999996 V274.47999999999996 C107 272.47999999999996 112 272.47999999999996 112 274.47999999999996" fill="none" stroke="#4a4a4a" stroke-width="1"/><rect x="3.5" y="290.35999999999996" width="12" height="12" fill="#3a3a3a" stroke="#8c8c8c" stroke-width="1"/><text x="22" y="301.35999999999996" font-size="12.6" fill="#d8d8d8">Hue</text><rect x="105" y="294.35999999999996" width="8" height="6" fill="#4a4a4a"/><path d="M107 294.35999999999996 V291.35999999999996 C107 289.35999999999996 112 289.35999999999996 112 291.35999999999996" fill="none" stroke="#4a4a4a" stroke-width="1"/><rect x="3.5" y="307.23999999999995" width="12" height="12" fill="#3a3a3a" stroke="#8c8c8c" stroke-width="1"/><text x="22" y="318.23999999999995" font-size="12.6" fill="#d8d8d8">Saturation</text><rect x="105" y="311.23999999999995" width="8" height="6" fill="#4a4a4a"/><path d="M107 311.23999999999995 V308.23999999999995 C107 306.23999999999995 112 306.23999999999995 112 308.23999999999995" fill="none" stroke="#4a4a4a" stroke-width="1"/><rect x="3.5" y="324.11999999999995" width="12" height="12" fill="#3a3a3a" stroke="#8c8c8c" stroke-width="1"/><text x="22" y="335.11999999999995" font-size="12.6" fill="#d8d8d8">Value</text><rect x="105" y="328.11999999999995" width="8" height="6" fill="#4a4a4a"/><path d="M107 328.11999999999995 V325.11999999999995 C107 323.11999999999995 112 323.11999999999995 112 325.11999999999995" fill="none" stroke="#4a4a4a" stroke-width="1"/><rect x="3.5" y="340.99999999999994" width="12" height="12" fill="#3a3a3a" stroke="#8c8c8c" stroke-width="1"/><text x="22" y="351.99999999999994" font-size="12.6" fill="#d8d8d8">Airbrush</text><rect x="105" y="344.99999999999994" width="8" height="6" fill="#4a4a4a"/><path d="M107 344.99999999999994 V341.99999999999994 C107 339.99999999999994 112 339.99999999999994 112 341.99999999999994" fill="none" stroke="#4a4a4a" stroke-width="1"/><rect x="3.5" y="357.87999999999994" width="12" height="12" fill="#3a3a3a" stroke="#8c8c8c" stroke-width="1"/><text x="22" y="368.87999999999994" font-size="12.6" fill="#d8d8d8">Rate</text><rect x="105" y="361.87999999999994" width="8" height="6" fill="#4a4a4a"/><path d="M107 361.87999999999994 V358.87999999999994 C107 356.87999999999994 112 356.87999999999994 112 358.87999999999994" fill="none" stroke="#4a4a4a" stroke-width="1"/><text x="3.5" y="385.75999999999993" font-size="12.6" fill="#d8d8d8">Painting Mode</text><rect x="105" y="378.75999999999993" width="8" height="6" fill="#4a4a4a"/><path d="M107 378.75999999999993 V375.75999999999993 C107 373.75999999999993 112 373.75999999999993 112 375.75999999999993" fill="none" stroke="#4a4a4a" stroke-width="1"/><rect x="0" y="389.13999999999993" width="117" height="17" fill="#393939"/><rect x="0" y="406" width="117" height="1" fill="#424242"/><path d="M5 393.63999999999993 H13 L9 401.63999999999993 Z" fill="#e8e8e8"/><text x="58" y="402.63999999999993" font-size="12.6" fill="#d8d8d8" text-anchor="middle">Texture</text><rect x="3.5" y="408.52" width="12" height="12" fill="#3a3a3a" stroke="#8c8c8c" stroke-width="1"/><text x="22" y="419.52" font-size="12.6" fill="#d8d8d8">Pattern</text><rect x="105" y="412.52" width="8" height="6" fill="#4a4a4a"/><path d="M107 412.52 V409.52 C107 407.52 112 407.52 112 409.52" fill="none" stroke="#4a4a4a" stroke-width="1"/><rect x="3.5" y="425.4" width="12" height="12" fill="#3a3a3a" stroke="#8c8c8c" stroke-width="1"/><path d="M6 431.4 L8.5 434.9 L13 427.4" fill="none" stroke="#e8e8e8" stroke-width="1.4"/><text x="22" y="436.4" font-size="12.6" fill="#d8d8d8">Strength</text><rect x="105" y="429.4" width="8" height="6" fill="#4a4a4a"/><path d="M107 429.4 V426.4 C107 424.4 112 424.4 112 426.4" fill="none" stroke="#4a4a4a" stroke-width="1"/><rect x="0" y="439.78" width="117" height="17" fill="#393939"/><rect x="0" y="457" width="117" height="1" fill="#424242"/><path d="M5 444.28 H13 L9 452.28 Z" fill="#e8e8e8"/><text x="19.5" y="453.28" font-size="12.6" fill="#d8d8d8">Masked Brush</text></svg><rect x="640" y="194" width="12" height="455" fill="#3d3d3d"/><rect x="640.5" y="194.5" width="12" height="12" fill="#474747" stroke="#575757" stroke-width="1" rx="1.5"/><path d="M643.5 203 L646.5 199.5 L649.5 203 Z" fill="#c8c8c8"/><rect x="641.5" y="209.5" width="10" height="326" fill="#474747" stroke="#575757" stroke-width="1" rx="1.5"/><rect x="640.5" y="636.5" width="12" height="12" fill="#474747" stroke="#575757" stroke-width="1" rx="1.5"/><path d="M643.5 641 H649.5 L646.5 644.5 Z" fill="#c8c8c8"/><rect x="510.5" y="679.5" width="12" height="12" fill="#3a3a3a" stroke="#3a3a3a" stroke-width="1"/><text x="528" y="690" font-size="12.6" fill="#d8d8d8">Eraser switch size</text><rect x="640.5" y="679.5" width="12" height="12" fill="#3a3a3a" stroke="#3a3a3a" stroke-width="1"/><text x="658" y="690" font-size="12.6" fill="#d8d8d8">Eraser switch opacity</text><rect x="789.5" y="679.5" width="12" height="12" fill="#3a3a3a" stroke="#3a3a3a" stroke-width="1"/><text x="807" y="690" font-size="12.6" fill="#d8d8d8">Temporarily Save Tweaks To Presets</text><rect x="1113.5" y="679.5" width="12" height="12" fill="#3a3a3a" stroke="#3a3a3a" stroke-width="1"/><text x="1131" y="690" font-size="12.6" fill="#d8d8d8">Instant Preview</text><rect x="1131" y="686" width="87" height="1" fill="#d8d8d8"/><rect x="661.5" y="195.5" width="154" height="21" fill="#404040" stroke="#363636" stroke-width="1" rx="2"/><rect x="662" y="196" width="39" height="20" fill="#454545"/><rect x="701" y="196" width="1" height="20" fill="#363636"/><rect x="777" y="196" width="1" height="20" fill="#363636"/><rect x="778" y="196" width="37" height="20" fill="#454545"/><text x="667" y="211" font-size="12.6" fill="#d8d8d8">Auto</text><text x="708" y="211" font-size="12.6" fill="#d8d8d8">Predefined</text><text x="784" y="211" font-size="12.6" fill="#d8d8d8">Text</text><rect x="660.5" y="226.5" width="557" height="396" fill="none" stroke="#525252" stroke-width="1" rx="2"/><rect x="659.5" y="225.5" width="557" height="396" fill="none" stroke="#3c3c3c" stroke-width="1" rx="2"/><rect x="670.5" y="235.5" width="211" height="22" fill="url(#cmb2)" stroke="#363636" stroke-width="1" rx="2"/><text x="674" y="251.0" font-size="12.6" fill="#d8d8d8">All</text><path d="M867.5 245.0 H874.5 L871 248.5 Z" fill="#b8b8b8"/><rect x="884.5" y="235.5" width="50" height="22" fill="#383838" stroke="#363636" stroke-width="1" rx="2.5"/><rect x="885.5" y="236.5" width="48" height="20" fill="url(#bg_btn)" stroke="#555555" stroke-width="1" rx="2"/><path d="M890.5 240.5 V251 L894 248 L897.5 251 V240.5 Z" fill="none" stroke="#d8d8d8" stroke-width="1"/><text x="902" y="251" font-size="12.6" fill="#d8d8d8">Tag</text><path d="M927 252 H931 L929 254 Z" fill="#c0c0c0"/><defs><filter id="tb" x="-20%" y="-20%" width="140%" height="140%"><feGaussianBlur stdDeviation="1"/></filter></defs><rect x="669" y="258" width="255" height="305" fill="#3a3a3a"/><rect x="670" y="259" width="26" height="26" fill="#ffffff"/><svg x="670" y="259" width="26" height="26" viewBox="670 259 26 26" overflow="hidden"><g transform="translate(670,259)" opacity="1"><path d="M2 23 L13 3.5 L24 23 Z" fill="#000"/></g></svg><rect x="698" y="259" width="26" height="26" fill="#ffffff"/><svg x="698" y="259" width="26" height="26" viewBox="698 259 26 26" overflow="hidden"><circle cx="710.7" cy="270.9" r="1.9" fill="#000" opacity="0.68"/><circle cx="713.1" cy="279.9" r="2.0" fill="#000" opacity="0.66"/><circle cx="710.2" cy="268.5" r="1.4" fill="#000" opacity="0.98"/><circle cx="715.0" cy="262.0" r="2.4" fill="#000" opacity="0.84"/><circle cx="708.8" cy="267.5" r="2.1" fill="#000" opacity="0.78"/><circle cx="711.9" cy="276.2" r="1.2" fill="#000" opacity="0.91"/><circle cx="714.8" cy="283.3" r="2.0" fill="#000" opacity="0.62"/><circle cx="705.0" cy="264.1" r="2.5" fill="#000" opacity="0.72"/><circle cx="708.7" cy="281.7" r="1.5" fill="#000" opacity="0.82"/><circle cx="709.4" cy="262.5" r="1.9" fill="#000" opacity="0.94"/><circle cx="706.6" cy="266.2" r="1.7" fill="#000" opacity="0.61"/><circle cx="710.0" cy="279.8" r="2.1" fill="#000" opacity="0.81"/><circle cx="713.6" cy="264.4" r="1.9" fill="#000" opacity="0.75"/><circle cx="711.0" cy="263.6" r="2.2" fill="#000" opacity="0.64"/><circle cx="706.7" cy="279.6" r="2.5" fill="#000" opacity="0.77"/><circle cx="709.1" cy="266.6" r="1.4" fill="#000" opacity="0.85"/><circle cx="706.8" cy="263.7" r="1.7" fill="#000" opacity="0.67"/><circle cx="711.5" cy="279.9" r="2.2" fill="#000" opacity="0.79"/><circle cx="708.5" cy="271.0" r="1.0" fill="#000" opacity="0.89"/><circle cx="708.3" cy="268.3" r="1.1" fill="#000" opacity="0.78"/><circle cx="710.8" cy="270.0" r="2.4" fill="#000" opacity="0.87"/><circle cx="707.4" cy="273.1" r="2.5" fill="#000" opacity="0.81"/><circle cx="711.0" cy="262.4" r="1.8" fill="#000" opacity="0.78"/><circle cx="709.0" cy="270.7" r="1.9" fill="#000" opacity="0.82"/><circle cx="709.9" cy="264.8" r="1.7" fill="#000" opacity="0.99"/><circle cx="709.2" cy="261.8" r="1.0" fill="#000" opacity="0.81"/><circle cx="705.5" cy="263.1" r="1.2" fill="#000" opacity="0.78"/><circle cx="714.9" cy="272.2" r="1.7" fill="#000" opacity="0.77"/><ellipse cx="717.0" cy="264.0" rx="5.0" ry="1.6" fill="#000" opacity="1.00" transform="rotate(0 717.0 264.0)"/><ellipse cx="710.0" cy="275.0" rx="3.0" ry="2.5" fill="#000" opacity="1.00" transform="rotate(0 710.0 275.0)"/></svg><rect x="725" y="259" width="26" height="26" fill="#ffffff"/><svg x="725" y="259" width="26" height="26" viewBox="725 259 26 26" overflow="hidden"><ellipse cx="733.0" cy="266.0" rx="5.0" ry="1.4" fill="#000" opacity="1.00" transform="rotate(40 733.0 266.0)"/><ellipse cx="741.0" cy="268.0" rx="6.0" ry="1.5" fill="#000" opacity="1.00" transform="rotate(-50 741.0 268.0)"/><ellipse cx="737.0" cy="273.0" rx="6.0" ry="1.6" fill="#000" opacity="1.00" transform="rotate(30 737.0 273.0)"/><ellipse cx="744.0" cy="274.0" rx="5.0" ry="1.3" fill="#000" opacity="1.00" transform="rotate(-30 744.0 274.0)"/><ellipse cx="740.0" cy="278.0" rx="6.0" ry="1.2" fill="#000" opacity="1.00" transform="rotate(60 740.0 278.0)"/><path d="M738 277 C737 281 735 282 734 284" fill="none" stroke="#333" stroke-width="0.6"/></svg><rect x="752" y="259" width="26" height="26" fill="#ffffff"/><svg x="752" y="259" width="26" height="26" viewBox="752 259 26 26" overflow="hidden"><circle cx="765" cy="272" r="9.5" fill="#cfcfcf" stroke="#6a6a6a" stroke-width="0.8"/></svg><rect x="779" y="259" width="26" height="26" fill="#ffffff"/><svg x="779" y="259" width="26" height="26" viewBox="779 259 26 26" overflow="hidden"><rect x="781" y="264" width="22" height="2" fill="#aaa"/><rect x="781" y="268" width="22" height="2" fill="#aaa"/><rect x="781" y="272" width="22" height="2" fill="#aaa"/><rect x="781" y="276" width="22" height="2" fill="#aaa"/><rect x="781" y="280" width="22" height="2" fill="#aaa"/><rect x="785" y="266" width="1.5" height="3" fill="#999"/><rect x="793" y="270" width="1.5" height="3" fill="#999"/><rect x="788" y="274" width="1.5" height="3" fill="#999"/><rect x="797" y="278" width="1.5" height="3" fill="#999"/><rect x="791" y="262" width="1.5" height="3" fill="#999"/><rect x="799" y="266" width="1.5" height="3" fill="#999"/><ellipse cx="792.0" cy="264.0" rx="5.0" ry="1.3" fill="#000" opacity="1.00" transform="rotate(0 792.0 264.0)"/><ellipse cx="787.0" cy="272.0" rx="2.5" ry="1.4" fill="#000" opacity="1.00" transform="rotate(0 787.0 272.0)"/><ellipse cx="795.0" cy="276.0" rx="2.5" ry="1.4" fill="#000" opacity="1.00" transform="rotate(0 795.0 276.0)"/></svg><rect x="806" y="259" width="26" height="26" fill="#ffffff"/><svg x="806" y="259" width="26" height="26" viewBox="806 259 26 26" overflow="hidden"><circle cx="819.0" cy="261.5" r="2.5" fill="#000" opacity="1.00"/><circle cx="814.0" cy="266.0" r="1.6" fill="#000" opacity="1.00"/><circle cx="824.0" cy="266.0" r="1.6" fill="#000" opacity="1.00"/><circle cx="809.0" cy="271.0" r="3.0" fill="#000" opacity="1.00"/><circle cx="819.0" cy="271.0" r="1.8" fill="#000" opacity="1.00"/><circle cx="829.0" cy="272.0" r="2.0" fill="#000" opacity="1.00"/><circle cx="815.0" cy="277.0" r="2.0" fill="#000" opacity="1.00"/><circle cx="824.0" cy="277.0" r="1.7" fill="#000" opacity="1.00"/><circle cx="811.0" cy="282.0" r="1.5" fill="#000" opacity="1.00"/><circle cx="826.0" cy="283.0" r="2.0" fill="#000" opacity="1.00"/></svg><rect x="834" y="259" width="26" height="26" fill="#ffffff"/><svg x="834" y="259" width="26" height="26" viewBox="834 259 26 26" overflow="hidden"><circle cx="845.6" cy="272.2" r="0.5" fill="#000" opacity="0.74"/><circle cx="844.4" cy="261.3" r="0.6" fill="#000" opacity="0.65"/><circle cx="845.9" cy="278.1" r="0.4" fill="#000" opacity="0.85"/><circle cx="844.8" cy="279.3" r="0.9" fill="#000" opacity="0.68"/><circle cx="849.1" cy="277.5" r="0.5" fill="#000" opacity="0.76"/><circle cx="848.2" cy="282.2" r="0.5" fill="#000" opacity="0.70"/><circle cx="848.7" cy="283.1" r="0.5" fill="#000" opacity="0.64"/><circle cx="848.5" cy="268.3" r="0.7" fill="#000" opacity="0.95"/><circle cx="848.5" cy="276.2" r="1.0" fill="#000" opacity="0.89"/><circle cx="848.9" cy="275.8" r="0.8" fill="#000" opacity="0.62"/><circle cx="849.5" cy="282.0" r="0.6" fill="#000" opacity="0.85"/><circle cx="844.1" cy="272.5" r="0.8" fill="#000" opacity="0.72"/><circle cx="846.5" cy="280.2" r="0.5" fill="#000" opacity="0.78"/><circle cx="844.5" cy="269.8" r="1.0" fill="#000" opacity="0.84"/><circle cx="844.2" cy="280.7" r="0.9" fill="#000" opacity="0.81"/><circle cx="845.7" cy="267.9" r="0.5" fill="#000" opacity="0.85"/><circle cx="844.3" cy="282.7" r="0.5" fill="#000" opacity="0.85"/><circle cx="847.5" cy="269.3" r="0.6" fill="#000" opacity="0.78"/><circle cx="846.0" cy="283.3" r="0.9" fill="#000" opacity="0.81"/><circle cx="848.0" cy="272.4" r="0.5" fill="#000" opacity="0.61"/><circle cx="849.8" cy="280.4" r="0.5" fill="#000" opacity="0.84"/><circle cx="848.7" cy="281.6" r="0.4" fill="#000" opacity="0.65"/><circle cx="846.4" cy="274.9" r="0.5" fill="#000" opacity="0.88"/><circle cx="848.5" cy="271.3" r="1.0" fill="#000" opacity="0.76"/><circle cx="849.0" cy="269.8" r="0.7" fill="#000" opacity="0.75"/><circle cx="848.3" cy="281.3" r="0.5" fill="#000" opacity="0.84"/><circle cx="849.0" cy="276.9" r="0.6" fill="#000" opacity="0.75"/><circle cx="849.3" cy="266.0" r="1.1" fill="#000" opacity="0.76"/><circle cx="847.1" cy="277.3" r="0.9" fill="#000" opacity="0.84"/><circle cx="849.2" cy="275.7" r="1.0" fill="#000" opacity="0.86"/></svg><rect x="861" y="259" width="26" height="26" fill="#ffffff"/><svg x="861" y="259" width="26" height="26" viewBox="861 259 26 26" overflow="hidden"><circle cx="879.8" cy="264.8" r="2.4" fill="#000" opacity="0.79"/><circle cx="879.4" cy="270.1" r="2.7" fill="#000" opacity="0.66"/><circle cx="879.9" cy="270.2" r="1.5" fill="#000" opacity="0.74"/><circle cx="875.9" cy="264.5" r="1.8" fill="#000" opacity="0.60"/><circle cx="869.8" cy="266.6" r="1.6" fill="#000" opacity="0.71"/><circle cx="877.6" cy="270.2" r="2.6" fill="#000" opacity="0.96"/><circle cx="878.8" cy="278.2" r="2.1" fill="#000" opacity="0.87"/><circle cx="878.7" cy="272.2" r="1.4" fill="#000" opacity="0.81"/><circle cx="874.8" cy="266.7" r="1.3" fill="#000" opacity="0.67"/><circle cx="876.7" cy="276.2" r="2.3" fill="#000" opacity="0.77"/><circle cx="869.3" cy="264.1" r="2.2" fill="#000" opacity="0.81"/><circle cx="874.0" cy="266.6" r="1.4" fill="#000" opacity="0.67"/><circle cx="870.4" cy="273.0" r="1.7" fill="#000" opacity="0.82"/><circle cx="873.7" cy="272.2" r="2.4" fill="#000" opacity="0.91"/><circle cx="870.6" cy="278.4" r="2.6" fill="#000" opacity="0.93"/><circle cx="874.0" cy="278.3" r="2.5" fill="#000" opacity="0.70"/><circle cx="878.1" cy="279.7" r="0.8" fill="#000" opacity="0.96"/><circle cx="874.6" cy="275.8" r="0.3" fill="#000" opacity="0.87"/><circle cx="866.2" cy="276.9" r="0.8" fill="#000" opacity="0.75"/><circle cx="864.5" cy="262.0" r="0.6" fill="#000" opacity="0.66"/><circle cx="879.3" cy="274.4" r="0.6" fill="#000" opacity="0.87"/><circle cx="866.3" cy="271.1" r="0.3" fill="#000" opacity="0.82"/><circle cx="880.5" cy="264.4" r="0.7" fill="#000" opacity="1.00"/><circle cx="870.1" cy="265.6" r="0.5" fill="#000" opacity="0.93"/><circle cx="864.8" cy="278.1" r="0.5" fill="#000" opacity="0.90"/><circle cx="882.5" cy="279.6" r="0.4" fill="#000" opacity="0.82"/><circle cx="870.0" cy="280.3" r="0.5" fill="#000" opacity="0.67"/><circle cx="871.9" cy="262.9" r="0.4" fill="#000" opacity="0.88"/><circle cx="870.2" cy="265.1" r="0.9" fill="#000" opacity="0.70"/><circle cx="880.5" cy="276.1" r="0.6" fill="#000" opacity="0.86"/><circle cx="875.8" cy="279.5" r="0.7" fill="#000" opacity="0.71"/><circle cx="877.4" cy="272.2" r="0.9" fill="#000" opacity="0.65"/><circle cx="872.9" cy="282.3" r="0.3" fill="#000" opacity="0.89"/><circle cx="882.8" cy="274.4" r="0.3" fill="#000" opacity="0.91"/><circle cx="868.8" cy="272.4" r="0.8" fill="#000" opacity="0.73"/><circle cx="868.4" cy="263.6" r="0.5" fill="#000" opacity="0.64"/><circle cx="878.3" cy="279.3" r="0.3" fill="#000" opacity="0.81"/><circle cx="880.4" cy="278.1" r="0.5" fill="#000" opacity="0.81"/><circle cx="878.0" cy="272.4" r="0.9" fill="#000" opacity="0.96"/><circle cx="884.2" cy="263.8" r="0.3" fill="#000" opacity="0.84"/><circle cx="875.7" cy="266.8" r="0.4" fill="#000" opacity="0.91"/></svg><rect x="888" y="259" width="26" height="26" fill="#ffffff"/><svg x="888" y="259" width="26" height="26" viewBox="888 259 26 26" overflow="hidden"><circle cx="894.9" cy="281.5" r="1.3" fill="#000" opacity="0.61"/><circle cx="908.6" cy="276.7" r="1.1" fill="#000" opacity="0.60"/><circle cx="908.2" cy="269.3" r="1.2" fill="#000" opacity="0.81"/><circle cx="906.7" cy="277.0" r="0.7" fill="#000" opacity="0.87"/><circle cx="911.3" cy="280.6" r="1.3" fill="#000" opacity="0.64"/><circle cx="904.1" cy="279.6" r="0.7" fill="#000" opacity="0.62"/><circle cx="906.5" cy="273.4" r="1.4" fill="#000" opacity="0.70"/><circle cx="892.0" cy="273.7" r="1.2" fill="#000" opacity="0.86"/><circle cx="892.3" cy="268.5" r="0.5" fill="#000" opacity="0.76"/><circle cx="907.1" cy="271.0" r="0.9" fill="#000" opacity="0.69"/><circle cx="901.4" cy="282.8" r="0.8" fill="#000" opacity="0.72"/><circle cx="905.2" cy="280.5" r="0.5" fill="#000" opacity="0.86"/><circle cx="903.2" cy="274.3" r="0.9" fill="#000" opacity="0.87"/><circle cx="908.7" cy="266.6" r="0.5" fill="#000" opacity="0.66"/><circle cx="902.1" cy="266.3" r="0.9" fill="#000" opacity="0.81"/><circle cx="899.6" cy="274.8" r="0.9" fill="#000" opacity="0.81"/><circle cx="907.2" cy="269.2" r="0.4" fill="#000" opacity="0.96"/><circle cx="897.9" cy="269.7" r="0.5" fill="#000" opacity="0.83"/><circle cx="907.8" cy="262.7" r="1.0" fill="#000" opacity="0.62"/><circle cx="899.2" cy="264.4" r="1.1" fill="#000" opacity="0.97"/><circle cx="901.7" cy="268.9" r="1.1" fill="#000" opacity="0.92"/><circle cx="891.5" cy="271.6" r="1.1" fill="#000" opacity="0.97"/><circle cx="893.6" cy="280.4" r="0.6" fill="#000" opacity="0.84"/><circle cx="908.4" cy="279.0" r="0.7" fill="#000" opacity="0.88"/><circle cx="898.0" cy="266.1" r="1.4" fill="#000" opacity="0.62"/><circle cx="911.5" cy="261.8" r="1.2" fill="#000" opacity="0.70"/><circle cx="897.3" cy="261.0" r="1.0" fill="#000" opacity="0.90"/><circle cx="908.2" cy="265.9" r="0.6" fill="#000" opacity="0.61"/><circle cx="893.0" cy="274.6" r="0.6" fill="#000" opacity="0.66"/><circle cx="892.3" cy="262.5" r="0.6" fill="#000" opacity="0.87"/></svg><rect x="670" y="286" width="26" height="26" fill="#ffffff"/><svg x="670" y="286" width="26" height="26" viewBox="670 286 26 26" overflow="hidden"><circle cx="673.6" cy="298.1" r="0.5" fill="#000" opacity="0.78"/><circle cx="677.6" cy="307.1" r="0.7" fill="#000" opacity="0.90"/><circle cx="692.4" cy="299.4" r="0.6" fill="#000" opacity="0.65"/><circle cx="689.3" cy="290.5" r="0.6" fill="#000" opacity="0.67"/><circle cx="688.0" cy="298.6" r="0.7" fill="#000" opacity="0.81"/><circle cx="690.5" cy="309.6" r="0.6" fill="#000" opacity="0.95"/><circle cx="687.6" cy="303.6" r="1.0" fill="#000" opacity="0.68"/><circle cx="679.0" cy="299.1" r="0.5" fill="#000" opacity="0.72"/><circle cx="676.4" cy="308.3" r="1.0" fill="#000" opacity="0.95"/><circle cx="689.5" cy="297.5" r="0.5" fill="#000" opacity="0.76"/><circle cx="672.4" cy="291.5" r="0.6" fill="#000" opacity="0.77"/><circle cx="686.4" cy="300.8" r="0.4" fill="#000" opacity="0.94"/><circle cx="681.4" cy="299.0" r="0.6" fill="#000" opacity="0.75"/><circle cx="692.2" cy="309.3" r="0.4" fill="#000" opacity="0.97"/><circle cx="689.8" cy="306.3" r="0.5" fill="#000" opacity="0.96"/><circle cx="684.8" cy="298.6" r="0.3" fill="#000" opacity="0.81"/><circle cx="675.8" cy="295.1" r="0.9" fill="#000" opacity="0.74"/><circle cx="689.9" cy="296.7" r="0.4" fill="#000" opacity="0.76"/><ellipse cx="687.0" cy="307.0" rx="2.2" ry="1.5" fill="#000" opacity="1.00" transform="rotate(0 687.0 307.0)"/></svg><rect x="698" y="286" width="26" height="26" fill="#ffffff"/><svg x="698" y="286" width="26" height="26" viewBox="698 286 26 26" overflow="hidden"><circle cx="706.2" cy="299.0" r="0.6" fill="#000" opacity="0.78"/><circle cx="712.9" cy="298.7" r="0.6" fill="#000" opacity="0.68"/><circle cx="702.4" cy="293.6" r="0.7" fill="#000" opacity="0.61"/><circle cx="707.7" cy="297.3" r="0.6" fill="#000" opacity="0.77"/><circle cx="718.8" cy="308.6" r="0.6" fill="#000" opacity="0.68"/><circle cx="719.3" cy="306.8" r="0.5" fill="#000" opacity="0.92"/><circle cx="719.5" cy="308.9" r="0.4" fill="#000" opacity="0.69"/><circle cx="717.7" cy="294.0" r="0.4" fill="#000" opacity="0.62"/><circle cx="716.8" cy="293.2" r="0.4" fill="#000" opacity="0.85"/></svg><rect x="725" y="286" width="26" height="26" fill="#ffffff"/><svg x="725" y="286" width="26" height="26" viewBox="725 286 26 26" overflow="hidden"><circle cx="738.0" cy="291.0" r="3.0" fill="#000" opacity="1.00"/><circle cx="731.0" cy="297.0" r="2.4" fill="#000" opacity="1.00"/><circle cx="745.0" cy="297.0" r="2.4" fill="#000" opacity="1.00"/><circle cx="738.0" cy="299.0" r="2.2" fill="#000" opacity="1.00"/><circle cx="733.0" cy="303.0" r="2.0" fill="#000" opacity="1.00"/><circle cx="743.0" cy="303.0" r="2.0" fill="#000" opacity="1.00"/><circle cx="738.0" cy="307.0" r="2.4" fill="#000" opacity="1.00"/><circle cx="732.5" cy="300.0" r="0.8" fill="#000" opacity="0.98"/><circle cx="734.9" cy="299.8" r="0.6" fill="#000" opacity="0.82"/><circle cx="746.2" cy="310.8" r="0.9" fill="#000" opacity="0.98"/><circle cx="727.3" cy="292.8" r="0.9" fill="#000" opacity="0.83"/><circle cx="729.5" cy="301.9" r="0.9" fill="#000" opacity="0.69"/><circle cx="734.5" cy="291.2" r="0.9" fill="#000" opacity="0.68"/><circle cx="732.2" cy="288.9" r="0.5" fill="#000" opacity="0.61"/><circle cx="726.1" cy="299.7" r="0.5" fill="#000" opacity="0.75"/></svg><rect x="752" y="286" width="26" height="26" fill="#ffffff"/><svg x="752" y="286" width="26" height="26" viewBox="752 286 26 26" overflow="hidden"><circle cx="765.0" cy="292.0" r="2.6" fill="#000" opacity="1.00"/><circle cx="759.0" cy="297.0" r="2.0" fill="#000" opacity="1.00"/><circle cx="771.0" cy="297.0" r="2.0" fill="#000" opacity="1.00"/><circle cx="765.0" cy="298.0" r="2.0" fill="#000" opacity="1.00"/><circle cx="761.0" cy="303.0" r="1.7" fill="#000" opacity="1.00"/><circle cx="769.0" cy="303.0" r="1.7" fill="#000" opacity="1.00"/><circle cx="765.0" cy="307.0" r="1.8" fill="#000" opacity="1.00"/><circle cx="756.5" cy="291.5" r="0.8" fill="#000" opacity="0.82"/><circle cx="759.7" cy="295.1" r="0.7" fill="#000" opacity="0.73"/><circle cx="770.0" cy="289.9" r="0.6" fill="#000" opacity="0.71"/><circle cx="771.1" cy="307.1" r="0.7" fill="#000" opacity="0.96"/><circle cx="754.7" cy="303.2" r="0.5" fill="#000" opacity="0.67"/><circle cx="766.4" cy="289.0" r="0.4" fill="#000" opacity="0.71"/><circle cx="767.3" cy="302.7" r="0.8" fill="#000" opacity="0.73"/><circle cx="768.7" cy="310.4" r="0.9" fill="#000" opacity="0.68"/></svg><rect x="779" y="286" width="26" height="26" fill="#ffffff"/><svg x="779" y="286" width="26" height="26" viewBox="779 286 26 26" overflow="hidden"><ellipse cx="791.0" cy="292.0" rx="10.0" ry="1.6" fill="#000" opacity="1.00" transform="rotate(25 791.0 292.0)"/><ellipse cx="791.0" cy="295.5" rx="10.0" ry="1.6" fill="#000" opacity="1.00" transform="rotate(25 791.0 295.5)"/><ellipse cx="791.0" cy="299.0" rx="10.0" ry="1.6" fill="#000" opacity="1.00" transform="rotate(25 791.0 299.0)"/><ellipse cx="791.0" cy="302.5" rx="10.0" ry="1.6" fill="#000" opacity="1.00" transform="rotate(25 791.0 302.5)"/><ellipse cx="791.0" cy="306.0" rx="10.0" ry="1.6" fill="#000" opacity="1.00" transform="rotate(25 791.0 306.0)"/><circle cx="792.9" cy="291.5" r="0.9" fill="#000" opacity="0.77"/><circle cx="782.3" cy="299.0" r="1.6" fill="#000" opacity="0.77"/><circle cx="798.7" cy="308.2" r="0.6" fill="#000" opacity="0.61"/><circle cx="790.7" cy="308.2" r="1.1" fill="#000" opacity="0.92"/><circle cx="795.4" cy="289.9" r="1.1" fill="#000" opacity="0.86"/><circle cx="785.2" cy="291.6" r="1.3" fill="#000" opacity="0.72"/><circle cx="795.8" cy="294.5" r="0.7" fill="#000" opacity="0.75"/><circle cx="797.7" cy="296.0" r="1.1" fill="#000" opacity="0.91"/><circle cx="787.5" cy="306.3" r="0.6" fill="#000" opacity="0.78"/><circle cx="786.8" cy="292.4" r="1.5" fill="#000" opacity="0.67"/><circle cx="797.6" cy="298.4" r="1.5" fill="#000" opacity="0.95"/><circle cx="782.3" cy="308.0" r="1.2" fill="#000" opacity="0.89"/><circle cx="784.1" cy="303.4" r="1.3" fill="#000" opacity="0.99"/><circle cx="793.9" cy="289.8" r="1.3" fill="#000" opacity="0.87"/><circle cx="784.6" cy="305.2" r="0.6" fill="#000" opacity="0.83"/></svg><rect x="806" y="286" width="26" height="26" fill="#ffffff"/><svg x="806" y="286" width="26" height="26" viewBox="806 286 26 26" overflow="hidden"><circle cx="819.1" cy="292.5" r="0.9" fill="#000" opacity="0.58"/><circle cx="818.3" cy="303.3" r="0.4" fill="#000" opacity="0.37"/><circle cx="817.0" cy="303.9" r="0.4" fill="#000" opacity="0.59"/><circle cx="815.5" cy="292.4" r="0.4" fill="#000" opacity="0.53"/><circle cx="817.6" cy="298.8" r="0.5" fill="#000" opacity="0.49"/><circle cx="817.8" cy="292.8" r="0.6" fill="#000" opacity="0.39"/><circle cx="815.8" cy="306.9" r="0.7" fill="#000" opacity="0.50"/><circle cx="821.2" cy="297.1" r="0.5" fill="#000" opacity="0.43"/><circle cx="817.8" cy="303.4" r="0.3" fill="#000" opacity="0.44"/><circle cx="818.7" cy="295.9" r="0.3" fill="#000" opacity="0.51"/><circle cx="815.1" cy="301.0" r="0.4" fill="#000" opacity="0.31"/><circle cx="816.3" cy="289.5" r="0.4" fill="#000" opacity="0.51"/><circle cx="820.1" cy="296.3" r="0.7" fill="#000" opacity="0.44"/><circle cx="818.5" cy="308.1" r="0.5" fill="#000" opacity="0.56"/><circle cx="819.8" cy="303.7" r="0.3" fill="#000" opacity="0.33"/><circle cx="815.2" cy="296.0" r="0.9" fill="#000" opacity="0.56"/><circle cx="820.9" cy="290.7" r="0.7" fill="#000" opacity="0.53"/><circle cx="820.7" cy="306.2" r="0.4" fill="#000" opacity="0.35"/><circle cx="820.5" cy="305.0" r="0.8" fill="#000" opacity="0.43"/><circle cx="821.2" cy="291.2" r="0.9" fill="#000" opacity="0.57"/><circle cx="817.4" cy="289.6" r="0.6" fill="#000" opacity="0.51"/><circle cx="817.5" cy="289.3" r="0.5" fill="#000" opacity="0.55"/><circle cx="815.6" cy="309.6" r="0.5" fill="#000" opacity="0.36"/><circle cx="815.8" cy="310.6" r="0.8" fill="#000" opacity="0.40"/><circle cx="815.7" cy="303.0" r="0.8" fill="#000" opacity="0.30"/><circle cx="819.4" cy="307.7" r="0.6" fill="#000" opacity="0.47"/><circle cx="820.6" cy="293.5" r="0.5" fill="#000" opacity="0.50"/><circle cx="818.9" cy="300.3" r="0.5" fill="#000" opacity="0.58"/></svg><rect x="834" y="286" width="26" height="26" fill="#ffffff"/><svg x="834" y="286" width="26" height="26" viewBox="834 286 26 26" overflow="hidden"><ellipse cx="847.0" cy="299.0" rx="11.0" ry="4.5" fill="#000" opacity="1.00" transform="rotate(0 847.0 299.0)"/><circle cx="838.9" cy="302.2" r="0.9" fill="#fff" opacity="0.88"/><circle cx="842.1" cy="296.0" r="0.4" fill="#fff" opacity="0.84"/><circle cx="840.4" cy="302.5" r="0.5" fill="#fff" opacity="0.84"/><circle cx="856.4" cy="303.2" r="0.5" fill="#fff" opacity="0.86"/><circle cx="857.7" cy="297.9" r="0.8" fill="#fff" opacity="0.94"/><circle cx="850.2" cy="294.6" r="0.8" fill="#fff" opacity="0.96"/><circle cx="845.9" cy="297.5" r="0.8" fill="#fff" opacity="1.00"/><circle cx="856.7" cy="296.0" r="0.9" fill="#fff" opacity="0.90"/><circle cx="857.7" cy="303.7" r="0.7" fill="#fff" opacity="0.98"/><circle cx="855.5" cy="295.1" r="0.6" fill="#fff" opacity="0.99"/></svg><rect x="861" y="286" width="26" height="26" fill="#ffffff"/><svg x="861" y="286" width="26" height="26" viewBox="861 286 26 26" overflow="hidden"><ellipse cx="874.0" cy="299.0" rx="10.5" ry="4.5" fill="#000" opacity="1.00" transform="rotate(0 874.0 299.0)"/><circle cx="882.7" cy="296.0" r="0.5" fill="#fff" opacity="0.82"/><circle cx="879.6" cy="302.6" r="1.0" fill="#fff" opacity="0.94"/><circle cx="877.1" cy="300.9" r="0.7" fill="#fff" opacity="0.91"/><circle cx="866.2" cy="294.4" r="0.9" fill="#fff" opacity="0.96"/><circle cx="884.2" cy="301.4" r="0.8" fill="#fff" opacity="0.83"/><circle cx="882.1" cy="299.3" r="0.9" fill="#fff" opacity="0.96"/><circle cx="880.3" cy="300.3" r="0.9" fill="#fff" opacity="0.89"/><circle cx="878.7" cy="299.3" r="0.8" fill="#fff" opacity="0.99"/><circle cx="882.6" cy="301.1" r="0.8" fill="#fff" opacity="0.85"/><circle cx="881.5" cy="298.1" r="0.6" fill="#fff" opacity="0.97"/></svg><rect x="888" y="286" width="26" height="26" fill="#ffffff"/><svg x="888" y="286" width="26" height="26" viewBox="888 286 26 26" overflow="hidden"><path d="M890 294 C896 298 902 290 912 296 M891 303 C897 300 903 308 912 302 M898 289 L900 310 M907 290 L904 309" fill="none" stroke="#000" stroke-width="1.3"/></svg><rect x="670" y="314" width="26" height="26" fill="#ffffff"/><svg x="670" y="314" width="26" height="26" viewBox="670 314 26 26" overflow="hidden"><ellipse cx="683.2" cy="327.6" rx="8.8" ry="10.7" fill="none" stroke="#555" stroke-width="0.5" opacity="0.6"/><ellipse cx="683.8" cy="327.9" rx="9.9" ry="9.0" fill="none" stroke="#555" stroke-width="0.5" opacity="0.6"/><ellipse cx="683.6" cy="326.2" rx="9.6" ry="8.4" fill="none" stroke="#555" stroke-width="0.5" opacity="0.6"/><ellipse cx="683.6" cy="327.1" rx="10.3" ry="8.4" fill="none" stroke="#555" stroke-width="0.5" opacity="0.6"/><ellipse cx="683.5" cy="327.6" rx="8.4" ry="8.3" fill="none" stroke="#555" stroke-width="0.5" opacity="0.6"/><ellipse cx="682.2" cy="326.5" rx="10.2" ry="8.3" fill="none" stroke="#555" stroke-width="0.5" opacity="0.6"/></svg><rect x="698" y="314" width="26" height="26" fill="#ffffff"/><svg x="698" y="314" width="26" height="26" viewBox="698 314 26 26" overflow="hidden"><path d="M699 326 C706 334 716 334 723 326 C716 330 706 330 699 326 Z" fill="none" stroke="#000" stroke-width="2"/></svg><rect x="725" y="314" width="26" height="26" fill="#ffffff"/><svg x="725" y="314" width="26" height="26" viewBox="725 314 26 26" overflow="hidden"><g filter="url(#tb)"><rect x="733" y="316" width="11" height="22" fill="#111"/></g></svg><rect x="752" y="314" width="26" height="26" fill="#ffffff"/><svg x="752" y="314" width="26" height="26" viewBox="752 314 26 26" overflow="hidden"><rect x="752" y="314" width="5" height="26" fill="#3a3a3a"/><rect x="773" y="314" width="5" height="26" fill="#3a3a3a"/><rect x="761" y="316" width="8" height="22" fill="#111"/></svg><rect x="779" y="314" width="26" height="26" fill="#ffffff"/><svg x="779" y="314" width="26" height="26" viewBox="779 314 26 26" overflow="hidden"><rect x="790" y="316" width="4" height="22" fill="#000"/><circle cx="793.6" cy="321.5" r="0.5" fill="#000" opacity="0.74"/><circle cx="788.2" cy="333.3" r="0.6" fill="#000" opacity="0.69"/><circle cx="786.5" cy="319.2" r="1.1" fill="#000" opacity="0.95"/><circle cx="790.5" cy="324.6" r="0.7" fill="#000" opacity="0.87"/><circle cx="786.4" cy="326.5" r="0.6" fill="#000" opacity="0.94"/><circle cx="794.1" cy="331.6" r="0.8" fill="#000" opacity="0.74"/><circle cx="798.1" cy="328.4" r="1.0" fill="#000" opacity="0.70"/><circle cx="797.3" cy="334.4" r="1.2" fill="#000" opacity="0.95"/><circle cx="789.8" cy="334.4" r="0.9" fill="#000" opacity="0.80"/><circle cx="785.4" cy="319.8" r="1.1" fill="#000" opacity="0.99"/><circle cx="795.7" cy="332.1" r="1.1" fill="#000" opacity="0.66"/><circle cx="793.8" cy="324.4" r="1.2" fill="#000" opacity="0.88"/><circle cx="791.6" cy="327.6" r="0.6" fill="#000" opacity="0.71"/><circle cx="794.0" cy="322.8" r="0.8" fill="#000" opacity="0.62"/><circle cx="789.5" cy="335.5" r="1.1" fill="#000" opacity="0.86"/><circle cx="794.7" cy="331.0" r="1.1" fill="#000" opacity="0.68"/><circle cx="790.7" cy="323.9" r="0.8" fill="#000" opacity="0.90"/><circle cx="786.8" cy="321.8" r="1.2" fill="#000" opacity="0.79"/><circle cx="789.4" cy="328.1" r="0.8" fill="#000" opacity="0.63"/><circle cx="796.0" cy="336.7" r="1.2" fill="#000" opacity="0.84"/><circle cx="789.1" cy="321.1" r="0.9" fill="#000" opacity="0.90"/><circle cx="797.4" cy="317.2" r="1.0" fill="#000" opacity="0.97"/><circle cx="796.8" cy="318.4" r="0.6" fill="#000" opacity="0.98"/><circle cx="792.8" cy="323.9" r="0.8" fill="#000" opacity="0.77"/><circle cx="786.7" cy="336.2" r="0.9" fill="#000" opacity="0.96"/><circle cx="789.0" cy="332.3" r="0.7" fill="#000" opacity="0.85"/><circle cx="788.3" cy="325.1" r="0.7" fill="#000" opacity="0.90"/><circle cx="791.6" cy="333.7" r="0.7" fill="#000" opacity="0.81"/><circle cx="798.8" cy="323.2" r="1.2" fill="#000" opacity="0.65"/><circle cx="787.9" cy="317.1" r="1.2" fill="#000" opacity="0.73"/></svg><rect x="806" y="314" width="26" height="26" fill="#ffffff"/><svg x="806" y="314" width="26" height="26" viewBox="806 314 26 26" overflow="hidden"><rect x="816" y="317" width="6" height="20" fill="#111"/></svg><rect x="834" y="314" width="26" height="26" fill="#ffffff"/><svg x="834" y="314" width="26" height="26" viewBox="834 314 26 26" overflow="hidden"><rect x="844" y="317" width="6" height="20" fill="#111"/><rect x="844" y="320.0" width="6" height="1" fill="#ddd"/><rect x="844" y="323.5" width="6" height="1" fill="#ddd"/><rect x="844" y="327.0" width="6" height="1" fill="#ddd"/><rect x="844" y="330.5" width="6" height="1" fill="#ddd"/><rect x="844" y="334.0" width="6" height="1" fill="#ddd"/></svg><rect x="861" y="314" width="26" height="26" fill="#ffffff"/><svg x="861" y="314" width="26" height="26" viewBox="861 314 26 26" overflow="hidden"><g filter="url(#tb)"><circle cx="874.0" cy="327.0" r="10.0" fill="#1a1a1a" opacity="1.00"/></g></svg><rect x="888" y="314" width="26" height="26" fill="#ffffff"/><svg x="888" y="314" width="26" height="26" viewBox="888 314 26 26" overflow="hidden"><path d="M898.2 332.5 Q891.9 321.8 907.9 326.6" fill="none" stroke="#333" stroke-width="0.6"/><path d="M894.2 318.0 Q903.1 337.7 910.5 322.8" fill="none" stroke="#333" stroke-width="0.6"/><path d="M898.2 318.5 Q904.6 319.4 910.6 322.7" fill="none" stroke="#333" stroke-width="0.6"/><path d="M895.9 326.6 Q892.8 328.6 905.5 328.6" fill="none" stroke="#333" stroke-width="0.6"/><path d="M892.0 321.4 Q901.0 315.1 906.0 332.0" fill="none" stroke="#333" stroke-width="0.6"/><path d="M891.4 335.2 Q904.9 316.4 910.1 334.4" fill="none" stroke="#333" stroke-width="0.6"/><path d="M894.1 321.0 Q905.7 328.7 906.2 321.9" fill="none" stroke="#333" stroke-width="0.6"/></svg><rect x="670" y="341" width="26" height="26" fill="#ffffff"/><svg x="670" y="341" width="26" height="26" viewBox="670 341 26 26" overflow="hidden"><path d="M683 348 L684 353 L690 354 L684 355 L683 361 L682 355 L676 354 L682 353 Z" fill="#000"/></svg><rect x="698" y="341" width="26" height="26" fill="#ffffff"/><svg x="698" y="341" width="26" height="26" viewBox="698 341 26 26" overflow="hidden"><g filter="url(#tb)"><circle cx="708.2" cy="352.7" r="2.1" fill="#000" opacity="0.29"/><circle cx="702.2" cy="357.8" r="2.2" fill="#000" opacity="0.20"/><circle cx="712.3" cy="359.1" r="2.3" fill="#000" opacity="0.25"/><circle cx="716.2" cy="357.8" r="2.5" fill="#000" opacity="0.20"/><circle cx="710.9" cy="356.2" r="3.2" fill="#000" opacity="0.21"/><circle cx="708.8" cy="358.5" r="2.4" fill="#000" opacity="0.31"/><circle cx="708.9" cy="349.2" r="3.1" fill="#000" opacity="0.21"/><circle cx="716.4" cy="362.6" r="2.8" fill="#000" opacity="0.26"/><circle cx="715.5" cy="355.4" r="3.2" fill="#000" opacity="0.33"/><circle cx="709.7" cy="355.8" r="1.7" fill="#000" opacity="0.26"/><circle cx="712.2" cy="362.0" r="3.0" fill="#000" opacity="0.15"/><circle cx="715.8" cy="349.0" r="3.0" fill="#000" opacity="0.35"/><circle cx="715.7" cy="355.8" r="1.6" fill="#000" opacity="0.32"/><circle cx="703.8" cy="347.7" r="3.2" fill="#000" opacity="0.27"/><circle cx="714.9" cy="350.3" r="2.5" fill="#000" opacity="0.23"/><circle cx="710.7" cy="353.5" r="3.2" fill="#000" opacity="0.24"/><circle cx="711.1" cy="362.0" r="3.4" fill="#000" opacity="0.19"/><circle cx="708.1" cy="346.6" r="3.4" fill="#000" opacity="0.29"/><circle cx="712.3" cy="353.2" r="2.1" fill="#000" opacity="0.33"/><circle cx="706.2" cy="346.3" r="1.7" fill="#000" opacity="0.18"/></g></svg><rect x="725" y="341" width="26" height="26" fill="#ffffff"/><svg x="725" y="341" width="26" height="26" viewBox="725 341 26 26" overflow="hidden"><circle cx="736.0" cy="347.0" r="3.0" fill="#ccc" opacity="1.00"/><circle cx="740.0" cy="354.0" r="5.0" fill="#ddd" opacity="1.00"/><circle cx="735.0" cy="356.0" r="1.6" fill="#000" opacity="1.00"/><circle cx="726.2" cy="349.3" r="0.5" fill="#000" opacity="0.94"/><circle cx="747.5" cy="365.3" r="0.4" fill="#000" opacity="0.70"/><circle cx="738.6" cy="357.6" r="0.4" fill="#000" opacity="0.90"/><circle cx="732.6" cy="358.3" r="0.5" fill="#000" opacity="0.72"/><circle cx="736.2" cy="358.4" r="0.5" fill="#000" opacity="0.72"/></svg><rect x="752" y="341" width="26" height="26" fill="#ffffff"/><svg x="752" y="341" width="26" height="26" viewBox="752 341 26 26" overflow="hidden"><defs><linearGradient id="vg30" x1="0" y1="0" x2="0" y2="1"><stop offset="0" stop-color="#000"/><stop offset="1" stop-color="#000" stop-opacity="0"/></linearGradient></defs><rect x="763" y="341" width="4" height="24" fill="url(#vg30)"/></svg><rect x="779" y="341" width="26" height="26" fill="#ffffff"/><svg x="779" y="341" width="26" height="26" viewBox="779 341 26 26" overflow="hidden"><rect x="788" y="346.2425182409022" width="1" height="18" fill="#666"/><rect x="790" y="344.6990184199883" width="1" height="18" fill="#666"/><rect x="792" y="344.7495761764365" width="1" height="18" fill="#666"/><rect x="794" y="344.828971670278" width="1" height="18" fill="#666"/><rect x="796" y="345.2060324493282" width="1" height="18" fill="#666"/></svg><rect x="806" y="341" width="26" height="26" fill="#ffffff"/><svg x="806" y="341" width="26" height="26" viewBox="806 341 26 26" overflow="hidden"><path d="M810 344 L815 364" fill="none" stroke="#222" stroke-width="0.9"/><path d="M813 344 L818 364" fill="none" stroke="#222" stroke-width="0.9"/><path d="M816 344 L821 364" fill="none" stroke="#222" stroke-width="0.9"/><path d="M819 344 L824 364" fill="none" stroke="#222" stroke-width="0.9"/><path d="M822 344 L827 364" fill="none" stroke="#222" stroke-width="0.9"/><path d="M825 344 L830 364" fill="none" stroke="#222" stroke-width="0.9"/></svg><rect x="834" y="341" width="26" height="26" fill="#ffffff"/><svg x="834" y="341" width="26" height="26" viewBox="834 341 26 26" overflow="hidden"><g filter="url(#tb)"><ellipse cx="847.0" cy="354.0" rx="10.0" ry="3.0" fill="#333" opacity="1.00" transform="rotate(0 847.0 354.0)"/></g></svg><rect x="861" y="341" width="26" height="26" fill="#ffffff"/><svg x="861" y="341" width="26" height="26" viewBox="861 341 26 26" overflow="hidden"><circle cx="875.0" cy="346.0" r="1.8" fill="#000" opacity="1.00"/><circle cx="866.0" cy="350.0" r="1.2" fill="#000" opacity="1.00"/><circle cx="882.0" cy="350.0" r="1.0" fill="#000" opacity="1.00"/><circle cx="877.0" cy="354.0" r="2.0" fill="#000" opacity="1.00"/><circle cx="870.0" cy="357.0" r="1.7" fill="#000" opacity="1.00"/><circle cx="881.0" cy="363.0" r="1.0" fill="#000" opacity="1.00"/><circle cx="872.0" cy="364.0" r="0.8" fill="#000" opacity="1.00"/></svg><rect x="888" y="341" width="26" height="26" fill="#ffffff"/><svg x="888" y="341" width="26" height="26" viewBox="888 341 26 26" overflow="hidden"><path d="M901 363 C890 356 891 345 897 346 C900 347 901 350 901 350 C901 350 902 347 905 346 C911 345 912 356 901 363 Z" fill="#000"/></svg><rect x="670" y="368" width="26" height="26" fill="#ffffff"/><svg x="670" y="368" width="26" height="26" viewBox="670 368 26 26" overflow="hidden"><g filter="url(#tb)"><rect x="679" y="371" width="6" height="21" fill="#333"/></g></svg><rect x="698" y="368" width="26" height="26" fill="#ffffff"/><svg x="698" y="368" width="26" height="26" viewBox="698 368 26 26" overflow="hidden"><circle cx="706.9" cy="381.7" r="1.8" fill="#000" opacity="0.74"/><circle cx="707.3" cy="375.6" r="1.2" fill="#000" opacity="0.83"/><circle cx="720.7" cy="386.9" r="1.4" fill="#000" opacity="0.73"/><circle cx="712.0" cy="374.9" r="2.3" fill="#000" opacity="0.91"/><circle cx="711.3" cy="385.7" r="2.4" fill="#000" opacity="0.77"/><circle cx="701.5" cy="388.8" r="2.4" fill="#000" opacity="0.72"/><circle cx="708.3" cy="379.8" r="2.1" fill="#000" opacity="0.98"/><circle cx="717.7" cy="382.0" r="2.3" fill="#000" opacity="0.69"/><circle cx="706.2" cy="376.4" r="1.4" fill="#000" opacity="0.72"/><circle cx="719.2" cy="380.7" r="1.8" fill="#000" opacity="0.92"/><circle cx="714.6" cy="371.6" r="2.1" fill="#000" opacity="0.61"/><circle cx="702.0" cy="387.8" r="1.9" fill="#000" opacity="0.81"/><circle cx="700.3" cy="378.7" r="2.1" fill="#000" opacity="0.68"/><circle cx="710.6" cy="385.6" r="1.8" fill="#000" opacity="0.87"/></svg><rect x="725" y="368" width="26" height="26" fill="#ffffff"/><svg x="725" y="368" width="26" height="26" viewBox="725 368 26 26" overflow="hidden"><circle cx="729.8" cy="389.5" r="2.4" fill="#000" opacity="0.85"/><circle cx="747.5" cy="374.1" r="1.7" fill="#000" opacity="0.80"/><circle cx="730.2" cy="373.9" r="2.2" fill="#000" opacity="0.97"/><circle cx="736.4" cy="370.1" r="1.3" fill="#000" opacity="0.78"/><circle cx="746.8" cy="372.4" r="1.6" fill="#000" opacity="0.69"/><circle cx="744.9" cy="387.2" r="1.5" fill="#000" opacity="0.76"/><circle cx="744.5" cy="380.8" r="2.0" fill="#000" opacity="0.96"/><circle cx="745.1" cy="372.4" r="1.6" fill="#000" opacity="0.93"/><circle cx="733.0" cy="385.3" r="2.2" fill="#000" opacity="0.94"/><circle cx="744.4" cy="381.4" r="2.5" fill="#000" opacity="0.66"/><circle cx="732.2" cy="381.0" r="2.2" fill="#000" opacity="0.90"/><circle cx="745.7" cy="382.3" r="1.7" fill="#000" opacity="0.86"/><circle cx="746.9" cy="387.9" r="2.1" fill="#000" opacity="0.77"/><circle cx="732.8" cy="383.4" r="1.7" fill="#000" opacity="0.88"/><circle cx="740.0" cy="375.7" r="2.8" fill="#000" opacity="0.84"/><circle cx="735.9" cy="371.4" r="2.8" fill="#000" opacity="0.81"/><circle cx="730.8" cy="380.2" r="1.9" fill="#000" opacity="0.73"/><circle cx="738.6" cy="389.4" r="2.3" fill="#000" opacity="0.81"/><circle cx="730.7" cy="391.3" r="2.5" fill="#000" opacity="0.71"/><circle cx="729.2" cy="382.9" r="2.3" fill="#000" opacity="0.87"/><circle cx="738.6" cy="383.4" r="1.6" fill="#000" opacity="0.86"/><circle cx="744.2" cy="375.1" r="1.4" fill="#000" opacity="0.85"/><circle cx="740.0" cy="370.1" r="1.9" fill="#000" opacity="0.92"/><circle cx="738.1" cy="376.9" r="2.3" fill="#000" opacity="0.92"/></svg><rect x="752" y="368" width="26" height="26" fill="#ffffff"/><svg x="752" y="368" width="26" height="26" viewBox="752 368 26 26" overflow="hidden"><g filter="url(#tb)"><ellipse cx="765.0" cy="383.0" rx="9.0" ry="3.5" fill="#777" opacity="1.00" transform="rotate(0 765.0 383.0)"/></g></svg><rect x="779" y="368" width="26" height="26" fill="#ffffff"/><svg x="779" y="368" width="26" height="26" viewBox="779 368 26 26" overflow="hidden"><g filter="url(#tb)"><circle cx="795.4" cy="375.0" r="1.3" fill="#000" opacity="0.35"/><circle cx="797.0" cy="387.4" r="1.4" fill="#000" opacity="0.39"/><circle cx="795.1" cy="375.2" r="1.8" fill="#000" opacity="0.34"/><circle cx="795.8" cy="381.4" r="1.0" fill="#000" opacity="0.48"/><circle cx="791.5" cy="380.1" r="1.1" fill="#000" opacity="0.37"/><circle cx="788.5" cy="378.6" r="1.8" fill="#000" opacity="0.34"/><circle cx="797.4" cy="380.3" r="1.6" fill="#000" opacity="0.37"/><circle cx="788.4" cy="381.2" r="1.0" fill="#000" opacity="0.34"/><circle cx="786.5" cy="377.1" r="1.6" fill="#000" opacity="0.48"/><circle cx="794.0" cy="374.6" r="1.0" fill="#000" opacity="0.43"/><circle cx="790.8" cy="386.5" r="1.0" fill="#000" opacity="0.46"/><circle cx="790.8" cy="386.1" r="1.7" fill="#000" opacity="0.47"/></g></svg><rect x="806" y="368" width="26" height="26" fill="#ffffff"/><svg x="806" y="368" width="26" height="26" viewBox="806 368 26 26" overflow="hidden"><ellipse cx="819.0" cy="381.0" rx="5.5" ry="10.0" fill="#111" opacity="1.00" transform="rotate(0 819.0 381.0)"/><circle cx="819.4" cy="377.8" r="0.7" fill="#888" opacity="0.70"/><circle cx="816.5" cy="382.5" r="0.5" fill="#888" opacity="0.74"/><circle cx="821.0" cy="383.8" r="0.7" fill="#888" opacity="0.82"/><circle cx="818.7" cy="371.6" r="0.5" fill="#888" opacity="0.85"/><circle cx="817.0" cy="387.4" r="0.7" fill="#888" opacity="0.87"/><circle cx="822.6" cy="375.7" r="0.6" fill="#888" opacity="0.78"/><circle cx="822.9" cy="386.2" r="0.8" fill="#888" opacity="0.94"/><circle cx="815.8" cy="372.4" r="0.7" fill="#888" opacity="0.92"/><circle cx="816.6" cy="372.9" r="0.5" fill="#888" opacity="0.82"/><circle cx="814.5" cy="379.8" r="0.8" fill="#888" opacity="0.91"/></svg><rect x="834" y="368" width="26" height="26" fill="#ffffff"/><svg x="834" y="368" width="26" height="26" viewBox="834 368 26 26" overflow="hidden"><path d="M847 370 C854 372 854 386 849 392 L845 392 C840 386 840 372 847 370 Z" fill="#000"/></svg><rect x="861" y="368" width="26" height="26" fill="#ffffff"/><svg x="861" y="368" width="26" height="26" viewBox="861 368 26 26" overflow="hidden"><circle cx="866.8" cy="378.8" r="1.2" fill="#000" opacity="0.73"/><circle cx="868.9" cy="382.7" r="0.7" fill="#000" opacity="0.79"/><circle cx="868.8" cy="384.1" r="0.4" fill="#000" opacity="0.64"/><circle cx="883.5" cy="373.4" r="0.8" fill="#000" opacity="0.59"/><circle cx="872.0" cy="381.0" r="1.3" fill="#000" opacity="0.97"/><circle cx="870.5" cy="384.2" r="0.8" fill="#000" opacity="0.55"/><circle cx="869.6" cy="377.1" r="0.8" fill="#000" opacity="1.00"/><circle cx="880.8" cy="373.5" r="0.9" fill="#000" opacity="0.65"/><circle cx="869.5" cy="386.0" r="0.5" fill="#000" opacity="0.87"/><circle cx="882.6" cy="372.0" r="0.7" fill="#000" opacity="0.89"/><circle cx="865.0" cy="377.8" r="0.6" fill="#000" opacity="0.94"/><circle cx="881.0" cy="384.2" r="0.6" fill="#000" opacity="0.56"/><circle cx="883.0" cy="375.6" r="0.6" fill="#000" opacity="0.54"/><circle cx="881.3" cy="379.1" r="0.6" fill="#000" opacity="0.51"/><circle cx="873.6" cy="372.7" r="0.4" fill="#000" opacity="0.74"/><circle cx="875.8" cy="380.7" r="1.2" fill="#000" opacity="0.52"/><circle cx="865.4" cy="373.5" r="1.0" fill="#000" opacity="0.83"/><circle cx="868.8" cy="381.2" r="0.4" fill="#000" opacity="0.56"/><circle cx="869.8" cy="374.2" r="0.6" fill="#000" opacity="0.65"/><circle cx="872.6" cy="385.7" r="1.1" fill="#000" opacity="0.90"/><circle cx="867.3" cy="384.7" r="0.7" fill="#000" opacity="0.95"/><circle cx="877.0" cy="382.9" r="0.9" fill="#000" opacity="0.51"/><circle cx="870.2" cy="374.8" r="0.6" fill="#000" opacity="0.88"/><circle cx="872.3" cy="374.2" r="1.1" fill="#000" opacity="0.64"/><circle cx="866.3" cy="378.0" r="0.7" fill="#000" opacity="0.77"/></svg><rect x="888" y="368" width="26" height="26" fill="#cce8f8"/><rect x="888.5" y="368.5" width="25" height="25" fill="none" stroke="#5a8ac0" stroke-width="1"/><svg x="888" y="368" width="26" height="26" viewBox="888 368 26 26" overflow="hidden"><rect x="898" y="371" width="6" height="21" fill="#10182a"/></svg><rect x="670" y="395" width="26" height="26" fill="#ffffff"/><svg x="670" y="395" width="26" height="26" viewBox="670 395 26 26" overflow="hidden"><rect x="682" y="398.0" width="2.5" height="2" fill="#111"/><rect x="682" y="400.7" width="2.5" height="2" fill="#111"/><rect x="682" y="403.4" width="2.5" height="2" fill="#111"/><rect x="682" y="406.1" width="2.5" height="2" fill="#111"/><rect x="682" y="408.8" width="2.5" height="2" fill="#111"/><rect x="682" y="411.5" width="2.5" height="2" fill="#111"/><rect x="682" y="414.2" width="2.5" height="2" fill="#111"/><rect x="682" y="416.9" width="2.5" height="2" fill="#111"/></svg><rect x="698" y="395" width="26" height="26" fill="#ffffff"/><svg x="698" y="395" width="26" height="26" viewBox="698 395 26 26" overflow="hidden"><rect x="698" y="395" width="6" height="26" fill="#3a3a3a"/><rect x="718" y="395" width="6" height="26" fill="#3a3a3a"/><circle cx="711.2" cy="399.8" r="0.5" fill="#000" opacity="0.97"/><circle cx="711.6" cy="400.8" r="0.9" fill="#000" opacity="0.69"/><circle cx="711.7" cy="418.1" r="0.5" fill="#000" opacity="0.85"/><circle cx="712.4" cy="417.2" r="0.5" fill="#000" opacity="0.80"/><circle cx="710.8" cy="401.4" r="0.4" fill="#000" opacity="0.80"/><circle cx="709.8" cy="403.0" r="0.6" fill="#000" opacity="0.74"/><circle cx="712.9" cy="407.6" r="0.4" fill="#000" opacity="0.69"/><circle cx="712.7" cy="411.0" r="0.7" fill="#000" opacity="0.73"/><circle cx="710.3" cy="405.7" r="0.5" fill="#000" opacity="0.94"/><circle cx="711.9" cy="405.1" r="0.6" fill="#000" opacity="0.71"/><circle cx="712.1" cy="404.1" r="0.5" fill="#000" opacity="0.73"/><circle cx="709.7" cy="398.6" r="0.5" fill="#000" opacity="0.91"/></svg><rect x="725" y="395" width="26" height="26" fill="#ffffff"/><svg x="725" y="395" width="26" height="26" viewBox="725 395 26 26" overflow="hidden"><rect x="725" y="395" width="4" height="26" fill="#3a3a3a"/><rect x="747" y="395" width="4" height="26" fill="#3a3a3a"/><rect x="736" y="397" width="4" height="22" fill="#111"/><circle cx="735.5" cy="408.6" r="0.7" fill="#000" opacity="0.88"/><circle cx="736.9" cy="397.0" r="0.8" fill="#000" opacity="0.70"/><circle cx="739.1" cy="401.0" r="0.5" fill="#000" opacity="0.91"/><circle cx="741.6" cy="408.6" r="0.6" fill="#000" opacity="0.89"/><circle cx="742.8" cy="418.9" r="0.7" fill="#000" opacity="0.75"/><circle cx="742.2" cy="411.2" r="0.5" fill="#000" opacity="0.80"/><circle cx="738.6" cy="400.1" r="0.8" fill="#000" opacity="0.69"/><circle cx="739.2" cy="408.9" r="0.6" fill="#000" opacity="0.83"/><circle cx="742.3" cy="408.7" r="0.8" fill="#000" opacity="0.99"/><circle cx="739.9" cy="405.1" r="0.8" fill="#000" opacity="0.79"/><circle cx="737.5" cy="412.4" r="0.4" fill="#000" opacity="0.85"/><circle cx="734.2" cy="405.3" r="0.9" fill="#000" opacity="0.91"/><circle cx="741.3" cy="416.0" r="0.6" fill="#000" opacity="0.91"/><circle cx="733.1" cy="402.1" r="0.6" fill="#000" opacity="0.75"/><circle cx="742.7" cy="401.6" r="0.4" fill="#000" opacity="0.88"/><circle cx="736.9" cy="399.2" r="0.5" fill="#000" opacity="0.96"/><circle cx="741.6" cy="405.6" r="0.7" fill="#000" opacity="0.69"/><circle cx="739.7" cy="404.6" r="0.5" fill="#000" opacity="0.83"/><circle cx="734.3" cy="416.3" r="0.6" fill="#000" opacity="0.85"/><circle cx="742.1" cy="404.1" r="0.7" fill="#000" opacity="0.77"/></svg><rect x="752" y="395" width="26" height="26" fill="#ffffff"/><svg x="752" y="395" width="26" height="26" viewBox="752 395 26 26" overflow="hidden"><rect x="762" y="397.0" width="6" height="1.6" fill="#111"/><rect x="762" y="401.2" width="6" height="1.6" fill="#111"/><rect x="762" y="405.4" width="6" height="1.6" fill="#111"/><rect x="762" y="409.6" width="6" height="1.6" fill="#111"/><rect x="762" y="413.8" width="6" height="1.6" fill="#111"/><rect x="762" y="418.0" width="6" height="1.6" fill="#111"/></svg><rect x="779" y="395" width="26" height="26" fill="#ffffff"/><svg x="779" y="395" width="26" height="26" viewBox="779 395 26 26" overflow="hidden"><rect x="779" y="395" width="26" height="7" fill="#3a3a3a"/><rect x="779" y="413" width="26" height="8" fill="#3a3a3a"/><circle cx="793.3" cy="408.9" r="1.7" fill="#000" opacity="0.65"/><circle cx="799.1" cy="408.2" r="1.8" fill="#000" opacity="0.78"/><circle cx="784.4" cy="404.8" r="1.7" fill="#000" opacity="0.77"/><circle cx="783.1" cy="406.7" r="0.8" fill="#000" opacity="0.74"/><circle cx="789.7" cy="410.5" r="1.4" fill="#000" opacity="0.80"/><circle cx="787.2" cy="407.5" r="1.1" fill="#000" opacity="0.80"/><circle cx="796.0" cy="407.7" r="0.9" fill="#000" opacity="0.89"/><circle cx="799.1" cy="407.7" r="1.7" fill="#000" opacity="0.73"/><circle cx="789.3" cy="405.3" r="1.8" fill="#000" opacity="0.84"/><circle cx="785.4" cy="406.7" r="1.2" fill="#000" opacity="0.62"/></svg><rect x="806" y="395" width="26" height="26" fill="#ffffff"/><svg x="806" y="395" width="26" height="26" viewBox="806 395 26 26" overflow="hidden"><g filter="url(#tb)"><ellipse cx="819.0" cy="414.0" rx="8.0" ry="2.5" fill="#555" opacity="1.00" transform="rotate(0 819.0 414.0)"/><path d="M819 414 L823 399" fill="none" stroke="#555" stroke-width="1"/></g></svg><rect x="834" y="395" width="26" height="26" fill="#ffffff"/><svg x="834" y="395" width="26" height="26" viewBox="834 395 26 26" overflow="hidden"><circle cx="855.5" cy="405.9" r="1.9" fill="#000" opacity="0.63"/><circle cx="841.9" cy="403.3" r="1.9" fill="#000" opacity="0.63"/><circle cx="853.6" cy="402.0" r="0.9" fill="#000" opacity="0.91"/><circle cx="846.7" cy="409.7" r="1.8" fill="#000" opacity="0.75"/><circle cx="847.2" cy="416.9" r="1.0" fill="#000" opacity="0.75"/><circle cx="841.8" cy="415.1" r="1.7" fill="#000" opacity="0.86"/><circle cx="855.8" cy="404.2" r="1.3" fill="#000" opacity="0.72"/><circle cx="849.8" cy="403.5" r="1.5" fill="#000" opacity="0.74"/><circle cx="844.3" cy="403.6" r="1.6" fill="#000" opacity="0.64"/><circle cx="846.0" cy="402.9" r="1.0" fill="#000" opacity="0.75"/><circle cx="853.3" cy="404.1" r="1.6" fill="#000" opacity="0.95"/><circle cx="842.2" cy="402.5" r="1.4" fill="#000" opacity="0.91"/><circle cx="849.2" cy="412.8" r="1.7" fill="#000" opacity="0.80"/><circle cx="852.4" cy="413.1" r="1.3" fill="#000" opacity="0.90"/><circle cx="850.7" cy="403.3" r="0.8" fill="#000" opacity="0.77"/><circle cx="839.9" cy="414.0" r="1.8" fill="#000" opacity="0.75"/><circle cx="848.7" cy="409.3" r="1.0" fill="#000" opacity="0.80"/><circle cx="855.8" cy="403.0" r="0.8" fill="#000" opacity="0.73"/></svg><rect x="861" y="395" width="26" height="26" fill="#ffffff"/><svg x="861" y="395" width="26" height="26" viewBox="861 395 26 26" overflow="hidden"><g filter="url(#tb)"><ellipse cx="875.0" cy="408.0" rx="9.0" ry="4.0" fill="#777" opacity="1.00" transform="rotate(0 875.0 408.0)"/></g></svg><rect x="888" y="395" width="26" height="26" fill="#ffffff"/><svg x="888" y="395" width="26" height="26" viewBox="888 395 26 26" overflow="hidden"><g filter="url(#tb)"><ellipse cx="903.0" cy="404.0" rx="3.0" ry="6.0" fill="#999" opacity="1.00" transform="rotate(0 903.0 404.0)"/><ellipse cx="896.0" cy="416.0" rx="5.0" ry="3.0" fill="#aaa" opacity="1.00" transform="rotate(0 896.0 416.0)"/></g></svg><rect x="670" y="422" width="26" height="26" fill="#ffffff"/><svg x="670" y="422" width="26" height="26" viewBox="670 422 26 26" overflow="hidden"><path d="M682.5 445.4 L672.6 443.6" fill="none" stroke="#222" stroke-width="0.8"/><path d="M678.2 428.7 L683.7 437.0" fill="none" stroke="#222" stroke-width="0.8"/><path d="M692.9 429.9 L677.2 438.1" fill="none" stroke="#222" stroke-width="0.8"/><path d="M689.9 444.8 L682.2 443.7" fill="none" stroke="#222" stroke-width="0.8"/><path d="M672.4 437.2 L687.6 437.0" fill="none" stroke="#222" stroke-width="0.8"/><path d="M689.5 441.4 L681.6 426.8" fill="none" stroke="#222" stroke-width="0.8"/><path d="M682.1 436.0 L680.3 443.2" fill="none" stroke="#222" stroke-width="0.8"/><path d="M687.9 435.9 L676.2 432.6" fill="none" stroke="#222" stroke-width="0.8"/><circle cx="674.9" cy="430.7" r="0.9" fill="#000" opacity="0.71"/><circle cx="682.4" cy="438.3" r="1.0" fill="#000" opacity="0.78"/><circle cx="675.7" cy="435.7" r="0.9" fill="#000" opacity="1.00"/><circle cx="691.3" cy="439.9" r="0.8" fill="#000" opacity="0.72"/><circle cx="685.6" cy="438.5" r="0.7" fill="#000" opacity="0.92"/><circle cx="691.0" cy="438.0" r="0.8" fill="#000" opacity="0.99"/></svg><rect x="698" y="422" width="26" height="26" fill="#ffffff"/><svg x="698" y="422" width="26" height="26" viewBox="698 422 26 26" overflow="hidden"><g filter="url(#tb)"><path d="M702 426 L710 425 L720 442 L712 446 Z" fill="#666"/></g></svg><rect x="725" y="422" width="26" height="26" fill="#ffffff"/><svg x="725" y="422" width="26" height="26" viewBox="725 422 26 26" overflow="hidden"><circle cx="744.0" cy="435.0" r="2.5" fill="none" stroke="#111" stroke-width="1"/><circle cx="742.6" cy="439.5" r="2.5" fill="none" stroke="#111" stroke-width="1"/><circle cx="739.0" cy="441.9" r="2.5" fill="none" stroke="#111" stroke-width="1"/><circle cx="735.0" cy="441.0" r="2.5" fill="none" stroke="#111" stroke-width="1"/><circle cx="732.3" cy="437.3" r="2.5" fill="none" stroke="#111" stroke-width="1"/><circle cx="732.4" cy="432.5" r="2.5" fill="none" stroke="#111" stroke-width="1"/><circle cx="735.1" cy="428.9" r="2.5" fill="none" stroke="#111" stroke-width="1"/><circle cx="739.1" cy="428.1" r="2.5" fill="none" stroke="#111" stroke-width="1"/><circle cx="742.7" cy="430.6" r="2.5" fill="none" stroke="#111" stroke-width="1"/></svg><rect x="752" y="422" width="26" height="26" fill="#ffffff"/><svg x="752" y="422" width="26" height="26" viewBox="752 422 26 26" overflow="hidden"><path d="M759 426.0 L772 427.0" fill="none" stroke="#555" stroke-width="0.8"/><path d="M759 428.8 L772 429.8" fill="none" stroke="#555" stroke-width="0.8"/><path d="M759 431.6 L772 432.6" fill="none" stroke="#555" stroke-width="0.8"/><path d="M759 434.4 L772 435.4" fill="none" stroke="#555" stroke-width="0.8"/><path d="M759 437.2 L772 438.2" fill="none" stroke="#555" stroke-width="0.8"/><path d="M759 440.0 L772 441.0" fill="none" stroke="#555" stroke-width="0.8"/><path d="M759 442.8 L772 443.8" fill="none" stroke="#555" stroke-width="0.8"/></svg><rect x="779" y="422" width="26" height="26" fill="#ffffff"/><svg x="779" y="422" width="26" height="26" viewBox="779 422 26 26" overflow="hidden"><path d="M781 425 L789 446" fill="none" stroke="#444" stroke-width="0.5"/><path d="M784 425 L792 446" fill="none" stroke="#444" stroke-width="0.5"/><path d="M787 425 L795 446" fill="none" stroke="#444" stroke-width="0.5"/><path d="M790 425 L798 446" fill="none" stroke="#444" stroke-width="0.5"/><path d="M793 425 L801 446" fill="none" stroke="#444" stroke-width="0.5"/><path d="M796 425 L804 446" fill="none" stroke="#444" stroke-width="0.5"/></svg><rect x="806" y="422" width="26" height="26" fill="#ffffff"/><svg x="806" y="422" width="26" height="26" viewBox="806 422 26 26" overflow="hidden"><path d="M823 425 C826 430 815 434 816 444" fill="none" stroke="#000" stroke-width="2.6"/></svg><rect x="834" y="422" width="26" height="26" fill="#ffffff"/><svg x="834" y="422" width="26" height="26" viewBox="834 422 26 26" overflow="hidden"><path d="M841 430 L846 431 L851 429 L854 436 L851 441 L845 440 L842 436 Z" fill="#000"/></svg><rect x="861" y="422" width="26" height="26" fill="#ffffff"/><svg x="861" y="422" width="26" height="26" viewBox="861 422 26 26" overflow="hidden"><path d="M881 425 C873 430 870 438 874 444 L876 443 C874 436 877 430 881 425 Z" fill="#000" stroke="#000" stroke-width="1"/></svg><rect x="888" y="422" width="26" height="26" fill="#ffffff"/><svg x="888" y="422" width="26" height="26" viewBox="888 422 26 26" overflow="hidden"><g filter="url(#tb)"><path d="M892 442 L897 432 L905 428 L910 434 L905 444 L896 445 Z" fill="#111"/></g></svg><rect x="670" y="450" width="26" height="26" fill="#ffffff"/><svg x="670" y="450" width="26" height="26" viewBox="670 450 26 26" overflow="hidden"><g filter="url(#tb)"><circle cx="683.0" cy="463.0" r="9.0" fill="#888" opacity="0.70"/></g></svg><rect x="698" y="450" width="26" height="26" fill="#ffffff"/><svg x="698" y="450" width="26" height="26" viewBox="698 450 26 26" overflow="hidden"><g filter="url(#tb)"><ellipse cx="711.0" cy="461.0" rx="7.0" ry="4.0" fill="#111" opacity="1.00" transform="rotate(0 711.0 461.0)"/><ellipse cx="710.0" cy="468.0" rx="3.0" ry="1.5" fill="#888" opacity="1.00" transform="rotate(0 710.0 468.0)"/></g></svg><rect x="725" y="450" width="26" height="26" fill="#ffffff"/><svg x="725" y="450" width="26" height="26" viewBox="725 450 26 26" overflow="hidden"><circle cx="728.6" cy="463.7" r="0.8" fill="#000" opacity="0.99"/><circle cx="738.2" cy="466.5" r="1.0" fill="#000" opacity="0.81"/><circle cx="739.7" cy="452.4" r="1.1" fill="#000" opacity="0.73"/><circle cx="743.1" cy="471.5" r="0.7" fill="#000" opacity="0.74"/><circle cx="733.5" cy="473.0" r="1.2" fill="#000" opacity="0.64"/><circle cx="741.3" cy="469.2" r="0.7" fill="#000" opacity="0.62"/><circle cx="744.0" cy="469.6" r="1.2" fill="#000" opacity="0.79"/><circle cx="733.5" cy="463.1" r="1.0" fill="#000" opacity="0.99"/><circle cx="733.0" cy="464.4" r="0.7" fill="#000" opacity="0.63"/><circle cx="734.0" cy="472.7" r="1.2" fill="#000" opacity="0.65"/><circle cx="732.0" cy="452.1" r="0.9" fill="#000" opacity="0.63"/><circle cx="741.6" cy="458.1" r="1.3" fill="#000" opacity="0.69"/><circle cx="737.2" cy="473.2" r="0.8" fill="#000" opacity="0.67"/><circle cx="747.2" cy="464.2" r="0.8" fill="#000" opacity="0.73"/><circle cx="734.8" cy="457.9" r="0.9" fill="#000" opacity="0.77"/><circle cx="736.6" cy="473.1" r="1.2" fill="#000" opacity="0.94"/></svg><rect x="752" y="450" width="26" height="26" fill="#ffffff"/><svg x="752" y="450" width="26" height="26" viewBox="752 450 26 26" overflow="hidden"><path d="M764 452 C767 458 767 468 765 474 L762 473 C762 466 762 458 764 452 Z" fill="#000"/></svg><rect x="779" y="450" width="26" height="26" fill="#ffffff"/><svg x="779" y="450" width="26" height="26" viewBox="779 450 26 26" overflow="hidden"><path d="M792 453 L793 474 L791 474 Z" fill="#000"/></svg><rect x="806" y="450" width="26" height="26" fill="#ffffff"/><svg x="806" y="450" width="26" height="26" viewBox="806 450 26 26" overflow="hidden"><path d="M810 458 L816 463 L814 472 M816 463 L824 462 L828 469 M824 462 L822 454" fill="none" stroke="#333" stroke-width="0.8"/></svg><rect x="834" y="450" width="26" height="26" fill="#ffffff"/><svg x="834" y="450" width="26" height="26" viewBox="834 450 26 26" overflow="hidden"><circle cx="840.4" cy="462.8" r="0.6" fill="#000" opacity="0.97"/><circle cx="843.1" cy="460.7" r="0.7" fill="#000" opacity="0.98"/><circle cx="838.6" cy="468.8" r="0.9" fill="#000" opacity="0.72"/><circle cx="840.1" cy="457.8" r="0.7" fill="#000" opacity="0.87"/><circle cx="848.9" cy="469.9" r="0.8" fill="#000" opacity="0.78"/><circle cx="840.8" cy="469.9" r="0.6" fill="#000" opacity="0.65"/><circle cx="856.3" cy="457.3" r="0.5" fill="#000" opacity="0.91"/><circle cx="854.7" cy="462.3" r="0.7" fill="#000" opacity="0.87"/></svg><rect x="861" y="450" width="26" height="26" fill="#ffffff"/><svg x="861" y="450" width="26" height="26" viewBox="861 450 26 26" overflow="hidden"><circle cx="882.8" cy="465.3" r="1.1" fill="#000" opacity="0.55"/><circle cx="869.4" cy="462.6" r="0.8" fill="#000" opacity="0.57"/><circle cx="874.4" cy="465.0" r="1.1" fill="#000" opacity="0.89"/><circle cx="877.0" cy="459.3" r="1.1" fill="#000" opacity="0.66"/><circle cx="873.1" cy="464.0" r="0.5" fill="#000" opacity="0.55"/><circle cx="868.8" cy="455.9" r="0.4" fill="#000" opacity="0.66"/><circle cx="883.8" cy="465.0" r="0.9" fill="#000" opacity="0.82"/><circle cx="876.4" cy="469.7" r="0.8" fill="#000" opacity="0.71"/><circle cx="868.8" cy="466.3" r="0.7" fill="#000" opacity="0.58"/><circle cx="879.5" cy="467.8" r="0.5" fill="#000" opacity="0.45"/><circle cx="868.8" cy="464.4" r="1.0" fill="#000" opacity="0.71"/><circle cx="867.7" cy="467.0" r="1.1" fill="#000" opacity="0.46"/><circle cx="881.9" cy="457.8" r="0.7" fill="#000" opacity="0.50"/><circle cx="870.5" cy="469.6" r="0.9" fill="#000" opacity="0.61"/><circle cx="878.8" cy="464.9" r="0.8" fill="#000" opacity="0.50"/><circle cx="876.4" cy="467.7" r="0.7" fill="#000" opacity="0.64"/><circle cx="875.1" cy="459.7" r="0.9" fill="#000" opacity="0.77"/><circle cx="869.0" cy="460.0" r="0.8" fill="#000" opacity="0.68"/><circle cx="874.6" cy="458.5" r="0.6" fill="#000" opacity="0.45"/><circle cx="865.4" cy="467.7" r="0.9" fill="#000" opacity="0.75"/><circle cx="865.9" cy="467.8" r="1.0" fill="#000" opacity="0.74"/><circle cx="872.4" cy="468.9" r="0.9" fill="#000" opacity="0.80"/></svg><rect x="888" y="450" width="26" height="26" fill="#ffffff"/><svg x="888" y="450" width="26" height="26" viewBox="888 450 26 26" overflow="hidden"><rect x="894" y="454" width="15" height="18" fill="#1a1a1a"/></svg><rect x="670" y="477" width="26" height="26" fill="#ffffff"/><svg x="670" y="477" width="26" height="26" viewBox="670 477 26 26" overflow="hidden"><g filter="url(#tb)"><circle cx="682.6" cy="492.6" r="3.4" fill="#000" opacity="0.79"/><circle cx="677.3" cy="486.9" r="3.4" fill="#000" opacity="0.86"/><circle cx="691.6" cy="487.1" r="2.9" fill="#000" opacity="0.97"/><circle cx="674.7" cy="496.8" r="3.3" fill="#000" opacity="0.99"/><circle cx="675.0" cy="483.2" r="3.3" fill="#000" opacity="0.76"/><circle cx="678.2" cy="493.4" r="2.2" fill="#000" opacity="0.74"/><circle cx="680.6" cy="483.7" r="3.2" fill="#000" opacity="0.87"/><circle cx="674.9" cy="483.0" r="1.6" fill="#000" opacity="0.78"/><circle cx="686.9" cy="489.7" r="1.9" fill="#000" opacity="0.84"/><circle cx="688.1" cy="479.4" r="1.8" fill="#000" opacity="0.75"/><circle cx="680.9" cy="490.8" r="2.7" fill="#000" opacity="0.75"/><circle cx="685.0" cy="490.0" r="1.6" fill="#000" opacity="0.66"/><circle cx="678.1" cy="489.0" r="1.9" fill="#000" opacity="0.96"/><circle cx="675.9" cy="479.8" r="3.2" fill="#000" opacity="0.67"/><circle cx="678.8" cy="489.2" r="2.3" fill="#000" opacity="0.81"/><circle cx="686.3" cy="484.5" r="1.5" fill="#000" opacity="0.82"/><circle cx="682.8" cy="485.1" r="1.6" fill="#000" opacity="0.73"/><circle cx="673.4" cy="482.4" r="2.2" fill="#000" opacity="0.88"/><circle cx="682.6" cy="485.9" r="2.8" fill="#000" opacity="0.89"/><circle cx="693.5" cy="491.0" r="1.8" fill="#000" opacity="0.95"/><circle cx="691.0" cy="483.1" r="2.2" fill="#000" opacity="0.90"/><circle cx="679.0" cy="482.0" r="3.1" fill="#000" opacity="0.94"/><circle cx="672.4" cy="498.8" r="2.1" fill="#000" opacity="0.71"/><circle cx="672.6" cy="479.7" r="3.2" fill="#000" opacity="0.66"/><circle cx="677.5" cy="487.3" r="2.9" fill="#000" opacity="0.84"/><circle cx="679.3" cy="480.8" r="3.3" fill="#000" opacity="0.94"/><circle cx="674.7" cy="487.1" r="1.6" fill="#000" opacity="0.83"/><circle cx="687.1" cy="479.7" r="1.6" fill="#000" opacity="0.92"/><circle cx="678.5" cy="481.0" r="1.6" fill="#000" opacity="0.73"/><circle cx="688.3" cy="485.9" r="1.7" fill="#000" opacity="0.91"/></g></svg><rect x="698" y="477" width="26" height="26" fill="#ffffff"/><svg x="698" y="477" width="26" height="26" viewBox="698 477 26 26" overflow="hidden"><g filter="url(#tb)"><circle cx="707.9" cy="492.9" r="1.9" fill="#000" opacity="0.42"/><circle cx="714.2" cy="488.5" r="2.6" fill="#000" opacity="0.39"/><circle cx="707.1" cy="497.8" r="1.5" fill="#000" opacity="0.50"/><circle cx="702.5" cy="497.3" r="2.2" fill="#000" opacity="0.41"/><circle cx="704.5" cy="488.0" r="2.3" fill="#000" opacity="0.58"/><circle cx="721.6" cy="494.3" r="2.5" fill="#000" opacity="0.56"/><circle cx="703.9" cy="484.5" r="2.4" fill="#000" opacity="0.59"/><circle cx="704.0" cy="482.1" r="3.3" fill="#000" opacity="0.41"/><circle cx="717.9" cy="489.8" r="3.3" fill="#000" opacity="0.49"/><circle cx="716.8" cy="494.3" r="3.3" fill="#000" opacity="0.34"/><circle cx="709.5" cy="480.5" r="3.2" fill="#000" opacity="0.34"/><circle cx="701.6" cy="497.1" r="1.7" fill="#000" opacity="0.39"/><circle cx="710.1" cy="489.1" r="2.9" fill="#000" opacity="0.33"/><circle cx="718.0" cy="490.5" r="1.6" fill="#000" opacity="0.60"/><circle cx="712.7" cy="482.4" r="2.3" fill="#000" opacity="0.32"/><circle cx="719.3" cy="489.4" r="2.5" fill="#000" opacity="0.55"/><circle cx="710.9" cy="488.1" r="3.1" fill="#000" opacity="0.36"/><circle cx="701.4" cy="482.1" r="2.3" fill="#000" opacity="0.44"/><circle cx="711.4" cy="479.3" r="2.1" fill="#000" opacity="0.50"/><circle cx="705.0" cy="486.0" r="3.4" fill="#000" opacity="0.43"/><circle cx="707.7" cy="490.1" r="2.1" fill="#000" opacity="0.47"/><circle cx="720.1" cy="500.5" r="2.8" fill="#000" opacity="0.53"/><circle cx="703.8" cy="489.8" r="3.2" fill="#000" opacity="0.56"/><circle cx="716.1" cy="493.2" r="2.5" fill="#000" opacity="0.31"/><circle cx="716.1" cy="484.4" r="2.8" fill="#000" opacity="0.34"/><circle cx="712.0" cy="481.9" r="1.9" fill="#000" opacity="0.38"/><circle cx="713.6" cy="484.7" r="2.8" fill="#000" opacity="0.51"/><circle cx="717.0" cy="496.9" r="3.1" fill="#000" opacity="0.45"/><circle cx="719.6" cy="500.9" r="2.9" fill="#000" opacity="0.60"/><circle cx="710.5" cy="483.6" r="2.8" fill="#000" opacity="0.33"/></g></svg><rect x="725" y="477" width="26" height="26" fill="#ffffff"/><svg x="725" y="477" width="26" height="26" viewBox="725 477 26 26" overflow="hidden"><circle cx="729.2" cy="497.9" r="0.4" fill="#000" opacity="0.44"/><circle cx="744.0" cy="500.5" r="0.5" fill="#000" opacity="0.46"/><circle cx="748.3" cy="497.1" r="0.4" fill="#000" opacity="0.29"/><circle cx="729.8" cy="488.3" r="0.4" fill="#000" opacity="0.40"/><circle cx="728.7" cy="487.6" r="0.5" fill="#000" opacity="0.42"/><circle cx="727.1" cy="480.7" r="0.4" fill="#000" opacity="0.22"/><circle cx="739.2" cy="480.0" r="0.5" fill="#000" opacity="0.45"/><circle cx="745.4" cy="489.7" r="0.5" fill="#000" opacity="0.43"/><circle cx="738.8" cy="480.4" r="0.5" fill="#000" opacity="0.39"/><circle cx="743.6" cy="493.8" r="0.6" fill="#000" opacity="0.25"/><circle cx="727.9" cy="480.3" r="0.4" fill="#000" opacity="0.37"/><circle cx="747.4" cy="486.9" r="0.4" fill="#000" opacity="0.41"/><circle cx="746.6" cy="481.1" r="0.6" fill="#000" opacity="0.28"/><circle cx="738.7" cy="492.9" r="0.5" fill="#000" opacity="0.37"/></svg><rect x="752" y="477" width="26" height="26" fill="#ffffff"/><svg x="752" y="477" width="26" height="26" viewBox="752 477 26 26" overflow="hidden"><ellipse cx="760.0" cy="486.0" rx="5.0" ry="3.5" fill="#000" opacity="1.00" transform="rotate(30 760.0 486.0)"/><ellipse cx="771.0" cy="485.0" rx="5.0" ry="3.5" fill="#000" opacity="1.00" transform="rotate(-20 771.0 485.0)"/><ellipse cx="762.0" cy="495.0" rx="7.0" ry="3.5" fill="#000" opacity="1.00" transform="rotate(10 762.0 495.0)"/><ellipse cx="770.0" cy="497.0" rx="5.0" ry="3.0" fill="#000" opacity="1.00" transform="rotate(10 770.0 497.0)"/></svg><rect x="779" y="477" width="26" height="26" fill="#ffffff"/><svg x="779" y="477" width="26" height="26" viewBox="779 477 26 26" overflow="hidden"><circle cx="783.0" cy="494.0" r="1.8" fill="#000" opacity="1.00"/><circle cx="783.9" cy="490.1" r="1.8" fill="#000" opacity="1.00"/><circle cx="786.4" cy="487.0" r="1.8" fill="#000" opacity="1.00"/><circle cx="790.0" cy="485.2" r="1.8" fill="#000" opacity="1.00"/><circle cx="794.0" cy="485.2" r="1.8" fill="#000" opacity="1.00"/><circle cx="797.6" cy="487.0" r="1.8" fill="#000" opacity="1.00"/><circle cx="800.1" cy="490.1" r="1.8" fill="#000" opacity="1.00"/><circle cx="801.0" cy="494.0" r="1.8" fill="#000" opacity="1.00"/></svg><rect x="806" y="477" width="26" height="26" fill="#ffffff"/><svg x="806" y="477" width="26" height="26" viewBox="806 477 26 26" overflow="hidden"><g filter="url(#tb)"><ellipse cx="819.0" cy="490.0" rx="8.0" ry="2.5" fill="#666" opacity="1.00" transform="rotate(0 819.0 490.0)"/></g></svg><rect x="834" y="477" width="26" height="26" fill="#ffffff"/><svg x="834" y="477" width="26" height="26" viewBox="834 477 26 26" overflow="hidden"><g filter="url(#tb)"><circle cx="854.7" cy="484.3" r="1.8" fill="#000" opacity="0.43"/><circle cx="846.8" cy="486.1" r="2.3" fill="#000" opacity="0.47"/><circle cx="843.8" cy="493.9" r="1.7" fill="#000" opacity="0.49"/><circle cx="841.6" cy="483.8" r="2.9" fill="#000" opacity="0.42"/><circle cx="850.5" cy="481.2" r="2.3" fill="#000" opacity="0.32"/><circle cx="842.2" cy="486.3" r="2.4" fill="#000" opacity="0.36"/><circle cx="853.5" cy="491.0" r="2.5" fill="#000" opacity="0.26"/><circle cx="850.1" cy="481.0" r="2.3" fill="#000" opacity="0.37"/><circle cx="848.8" cy="494.2" r="2.5" fill="#000" opacity="0.32"/><circle cx="838.5" cy="483.7" r="2.0" fill="#000" opacity="0.35"/><circle cx="855.8" cy="486.0" r="1.9" fill="#000" opacity="0.48"/><circle cx="846.8" cy="492.0" r="2.7" fill="#000" opacity="0.39"/><circle cx="849.2" cy="481.6" r="2.8" fill="#000" opacity="0.48"/><circle cx="839.7" cy="495.2" r="2.7" fill="#000" opacity="0.38"/><circle cx="842.6" cy="491.6" r="3.1" fill="#000" opacity="0.42"/></g></svg><rect x="861" y="477" width="26" height="26" fill="#393939"/><rect x="888" y="477" width="26" height="26" fill="#393939"/><rect x="923" y="258" width="12" height="305" fill="#3d3d3d"/><rect x="923.5" y="258.5" width="11" height="11" fill="#474747" stroke="#575757" stroke-width="1" rx="1.5"/><path d="M926 266 L929 262.5 L932 266 Z" fill="#c8c8c8"/><rect x="924.5" y="272.5" width="9" height="278" fill="#474747" stroke="#575757" stroke-width="1" rx="1.5"/><rect x="923.5" y="551.5" width="11" height="11" fill="#474747" stroke="#575757" stroke-width="1" rx="1.5"/><path d="M926 555 H932 L929 558.5 Z" fill="#c8c8c8"/><rect x="670.5" y="565.5" width="264" height="20" fill="#383838" stroke="#3a3a3a" stroke-width="1" rx="2"/><text x="673" y="580" font-size="12.6" fill="#8c8c8c">Search</text><rect x="670.5" y="593.5" width="73" height="20" fill="#383838" stroke="#363636" stroke-width="1" rx="2.5"/><rect x="671.5" y="594.5" width="71" height="18" fill="url(#bg_btn)" stroke="#555555" stroke-width="1" rx="2"/><path d="M683.0 603.5 H693.0 M688.0 598.5 V608.5" fill="none" stroke="#d8d8d8" stroke-width="1.2"/><text x="694.0" y="608" font-size="12.6" fill="#d8d8d8">Import</text><rect x="745.5" y="593.5" width="73" height="20" fill="#383838" stroke="#363636" stroke-width="1" rx="2.5"/><rect x="746.5" y="594.5" width="71" height="18" fill="url(#bg_btn)" stroke="#555555" stroke-width="1" rx="2"/><path d="M759.0 603.5 H769.0 M764.0 598.5 V608.5" fill="none" stroke="#d8d8d8" stroke-width="1.2"/><text x="770.0" y="608" font-size="12.6" fill="#d8d8d8">Stamp</text><rect x="820.5" y="593.5" width="78" height="20" fill="#383838" stroke="#363636" stroke-width="1" rx="2.5"/><rect x="821.5" y="594.5" width="76" height="18" fill="url(#bg_btn)" stroke="#555555" stroke-width="1" rx="2"/><path d="M826.0 603.5 H836.0 M831.0 598.5 V608.5" fill="none" stroke="#d8d8d8" stroke-width="1.2"/><text x="837.0" y="608" font-size="12.6" fill="#d8d8d8">Clipboard</text><rect x="901.5" y="593.5" width="33" height="20" fill="#383838" stroke="#363636" stroke-width="1" rx="2.5"/><rect x="902.5" y="594.5" width="31" height="18" fill="url(#bg_btn)" stroke="#555555" stroke-width="1" rx="2"/><path d="M914 600 H924 L923 610 H915 Z" fill="none" stroke="#d8d8d8" stroke-width="1.2"/><rect x="913" y="599" width="12" height="1" fill="#d8d8d8"/><text x="943.5" y="250.5" font-size="16.8" fill="#e6e6e6">plain_rake</text><text x="943.5" y="268.5" font-size="12.8" fill="#d0d0d0">Mask (150 x 150)</text><text x="946.5" y="303" font-size="12.6" fill="#d8d8d8">Size:</text><rect x="999.5" y="288.5" width="194" height="19" fill="#353535" stroke="#363636" stroke-width="1"/><rect x="1000" y="289" width="38" height="18" fill="#56718f"/><text x="1095.5" y="303.0" font-size="12.6" fill="#e0e0e0" text-anchor="middle">7,50 px</text><rect x="1194.5" y="288.5" width="13" height="19" fill="#404040" stroke="#363636" stroke-width="1"/><path d="M1197.5 296.0 L1201.0 292.0 L1204.5 296.0 Z" fill="#7a7a7a"/><path d="M1197.5 300.0 L1201.0 304.0 L1204.5 300.0 Z" fill="#cfcfcf"/><text x="946.5" y="332.5" font-size="12.6" fill="#d8d8d8">Rotation:</text><rect x="999.5" y="318.5" width="194" height="19" fill="#353535" stroke="#363636" stroke-width="1"/><rect x="1000" y="319" width="1" height="18" fill="#56718f"/><text x="1095.5" y="333.0" font-size="12.6" fill="#e0e0e0" text-anchor="middle">0°</text><rect x="1194.5" y="318.5" width="13" height="19" fill="#404040" stroke="#363636" stroke-width="1"/><path d="M1197.5 326.0 L1201.0 322.0 L1204.5 326.0 Z" fill="#7a7a7a"/><path d="M1197.5 330.0 L1201.0 334.0 L1204.5 330.0 Z" fill="#cfcfcf"/><text x="946.5" y="362.5" font-size="12.6" fill="#d8d8d8">Spacing:</text><rect x="998.5" y="351.5" width="12" height="12" fill="#3a3a3a" stroke="#3a3a3a" stroke-width="1"/><text x="1016" y="362.5" font-size="12.6" fill="#d8d8d8">Auto</text><rect x="1054.5" y="348.5" width="139" height="19" fill="#353535" stroke="#363636" stroke-width="1"/><rect x="1055" y="349" width="1" height="18" fill="#56718f"/><text x="1123.0" y="363.0" font-size="12.6" fill="#e0e0e0" text-anchor="middle">0,02</text><rect x="1194.5" y="348.5" width="13" height="19" fill="#404040" stroke="#363636" stroke-width="1"/><path d="M1197.5 356.0 L1201.0 352.0 L1204.5 356.0 Z" fill="#7a7a7a"/><path d="M1197.5 360.0 L1201.0 364.0 L1204.5 360.0 Z" fill="#cfcfcf"/><rect x="998.5" y="381.5" width="12" height="12" fill="#3e3e3e" stroke="#3e3e3e" stroke-width="1"/><text x="1016" y="392" font-size="12.6" fill="#8a8a8a">Use Color as Mask</text><rect x="998.5" y="410.5" width="12" height="12" fill="#3a3a3a" stroke="#3a3a3a" stroke-width="1"/><path d="M1001 416.5 L1003.5 420 L1008 412.5" fill="none" stroke="#e8e8e8" stroke-width="1.4"/><text x="1016" y="421.5" font-size="12.6" fill="#d8d8d8">Preserve Brush Preset Settings</text><rect x="999.5" y="437.5" width="208" height="20" fill="#383838" stroke="#363636" stroke-width="1" rx="2.5"/><rect x="1000.5" y="438.5" width="206" height="18" fill="url(#bg_btn)" stroke="#555555" stroke-width="1" rx="2"/><text x="1103" y="452" font-size="12.6" fill="#d8d8d8" text-anchor="middle">Reset Predefined Tip</text><rect x="660.5" y="633.5" width="12" height="12" fill="#3a3a3a" stroke="#3a3a3a" stroke-width="1"/><text x="677" y="644" font-size="12.6" fill="#d8d8d8">Auto</text><text x="715.5" y="644" font-size="12.6" fill="#d8d8d8">Precision:</text><rect x="776.5" y="630.5" width="428" height="19" fill="#56718f" stroke="#3a3a3a" stroke-width="1"/><text x="990" y="645" font-size="12.6" fill="#e6e6e6" text-anchor="middle">5</text><rect x="1205.5" y="630.5" width="12" height="19" fill="#404040" stroke="#363636" stroke-width="1"/><path d="M1208.0 638.0 L1211.5 634.0 L1215.0 638.0 Z" fill="#7a7a7a"/><path d="M1208.0 642.0 L1211.5 646.0 L1215.0 642.0 Z" fill="#cfcfcf"/><rect x="1248.5" y="175.5" width="247" height="539" fill="none" stroke="#585858" stroke-width="1" rx="2"/><rect x="1255.5" y="183.5" width="20" height="20" fill="#3d3d3d" stroke="#363636" stroke-width="1" rx="2"/><path d="M1268 190 L1264 194 L1268 198" fill="none" stroke="#b0b0b0" stroke-width="1.2"/><text x="1281" y="197" font-size="12.6" fill="#d8d8d8">Scratchpad</text><rect x="1254" y="208" width="235" height="474" fill="#ffffff"/><rect x="1277.5" y="231.5" width="188" height="188" fill="none" stroke="#b0b0b0" stroke-width="1" stroke-dasharray="2 1"/><rect x="1255.5" y="687.5" width="54" height="21" fill="#383838" stroke="#363636" stroke-width="1" rx="2.5"/><rect x="1256.5" y="688.5" width="52" height="19" fill="url(#bg_btn)" stroke="#555555" stroke-width="1" rx="2"/><rect x="1315.5" y="687.5" width="53" height="21" fill="#383838" stroke="#363636" stroke-width="1" rx="2.5"/><rect x="1316.5" y="688.5" width="51" height="19" fill="url(#bg_btn)" stroke="#555555" stroke-width="1" rx="2"/><rect x="1374.5" y="687.5" width="53" height="21" fill="#383838" stroke="#363636" stroke-width="1" rx="2.5"/><rect x="1375.5" y="688.5" width="51" height="19" fill="url(#bg_btn)" stroke="#555555" stroke-width="1" rx="2"/><rect x="1434.5" y="687.5" width="54" height="21" fill="#383838" stroke="#363636" stroke-width="1" rx="2.5"/><rect x="1435.5" y="688.5" width="52" height="19" fill="url(#bg_btn)" stroke="#555555" stroke-width="1" rx="2"/><path d="M1277 704 C1277 700 1280 698 1283 699 L1284 701 C1283 704 1280 705 1277 704 Z" fill="#e8e8e8"/><path d="M1283 699 L1289 692 L1291 694 L1285 701 Z" fill="#e8e8e8"/><defs><linearGradient id="sg" x1="0" x2="1"><stop offset="0" stop-color="#303030"/><stop offset="1" stop-color="#e0e0e0"/></linearGradient></defs><rect x="1335.5" y="691.5" width="13" height="13" fill="url(#sg)" stroke="#d8d8d8" stroke-width="1.2"/><path d="M1396 697 L1402 691 L1409 698 L1403 704 Z" fill="#e8e8e8"/><rect x="1407" y="701" width="2.5" height="4" fill="#e8e8e8"/><circle cx="1461" cy="698" r="5.5" fill="none" stroke="#d03048" stroke-width="1.6"/><path d="M1457 694 L1465 702" fill="none" stroke="#d03048" stroke-width="1.6"/></svg></body></html>
